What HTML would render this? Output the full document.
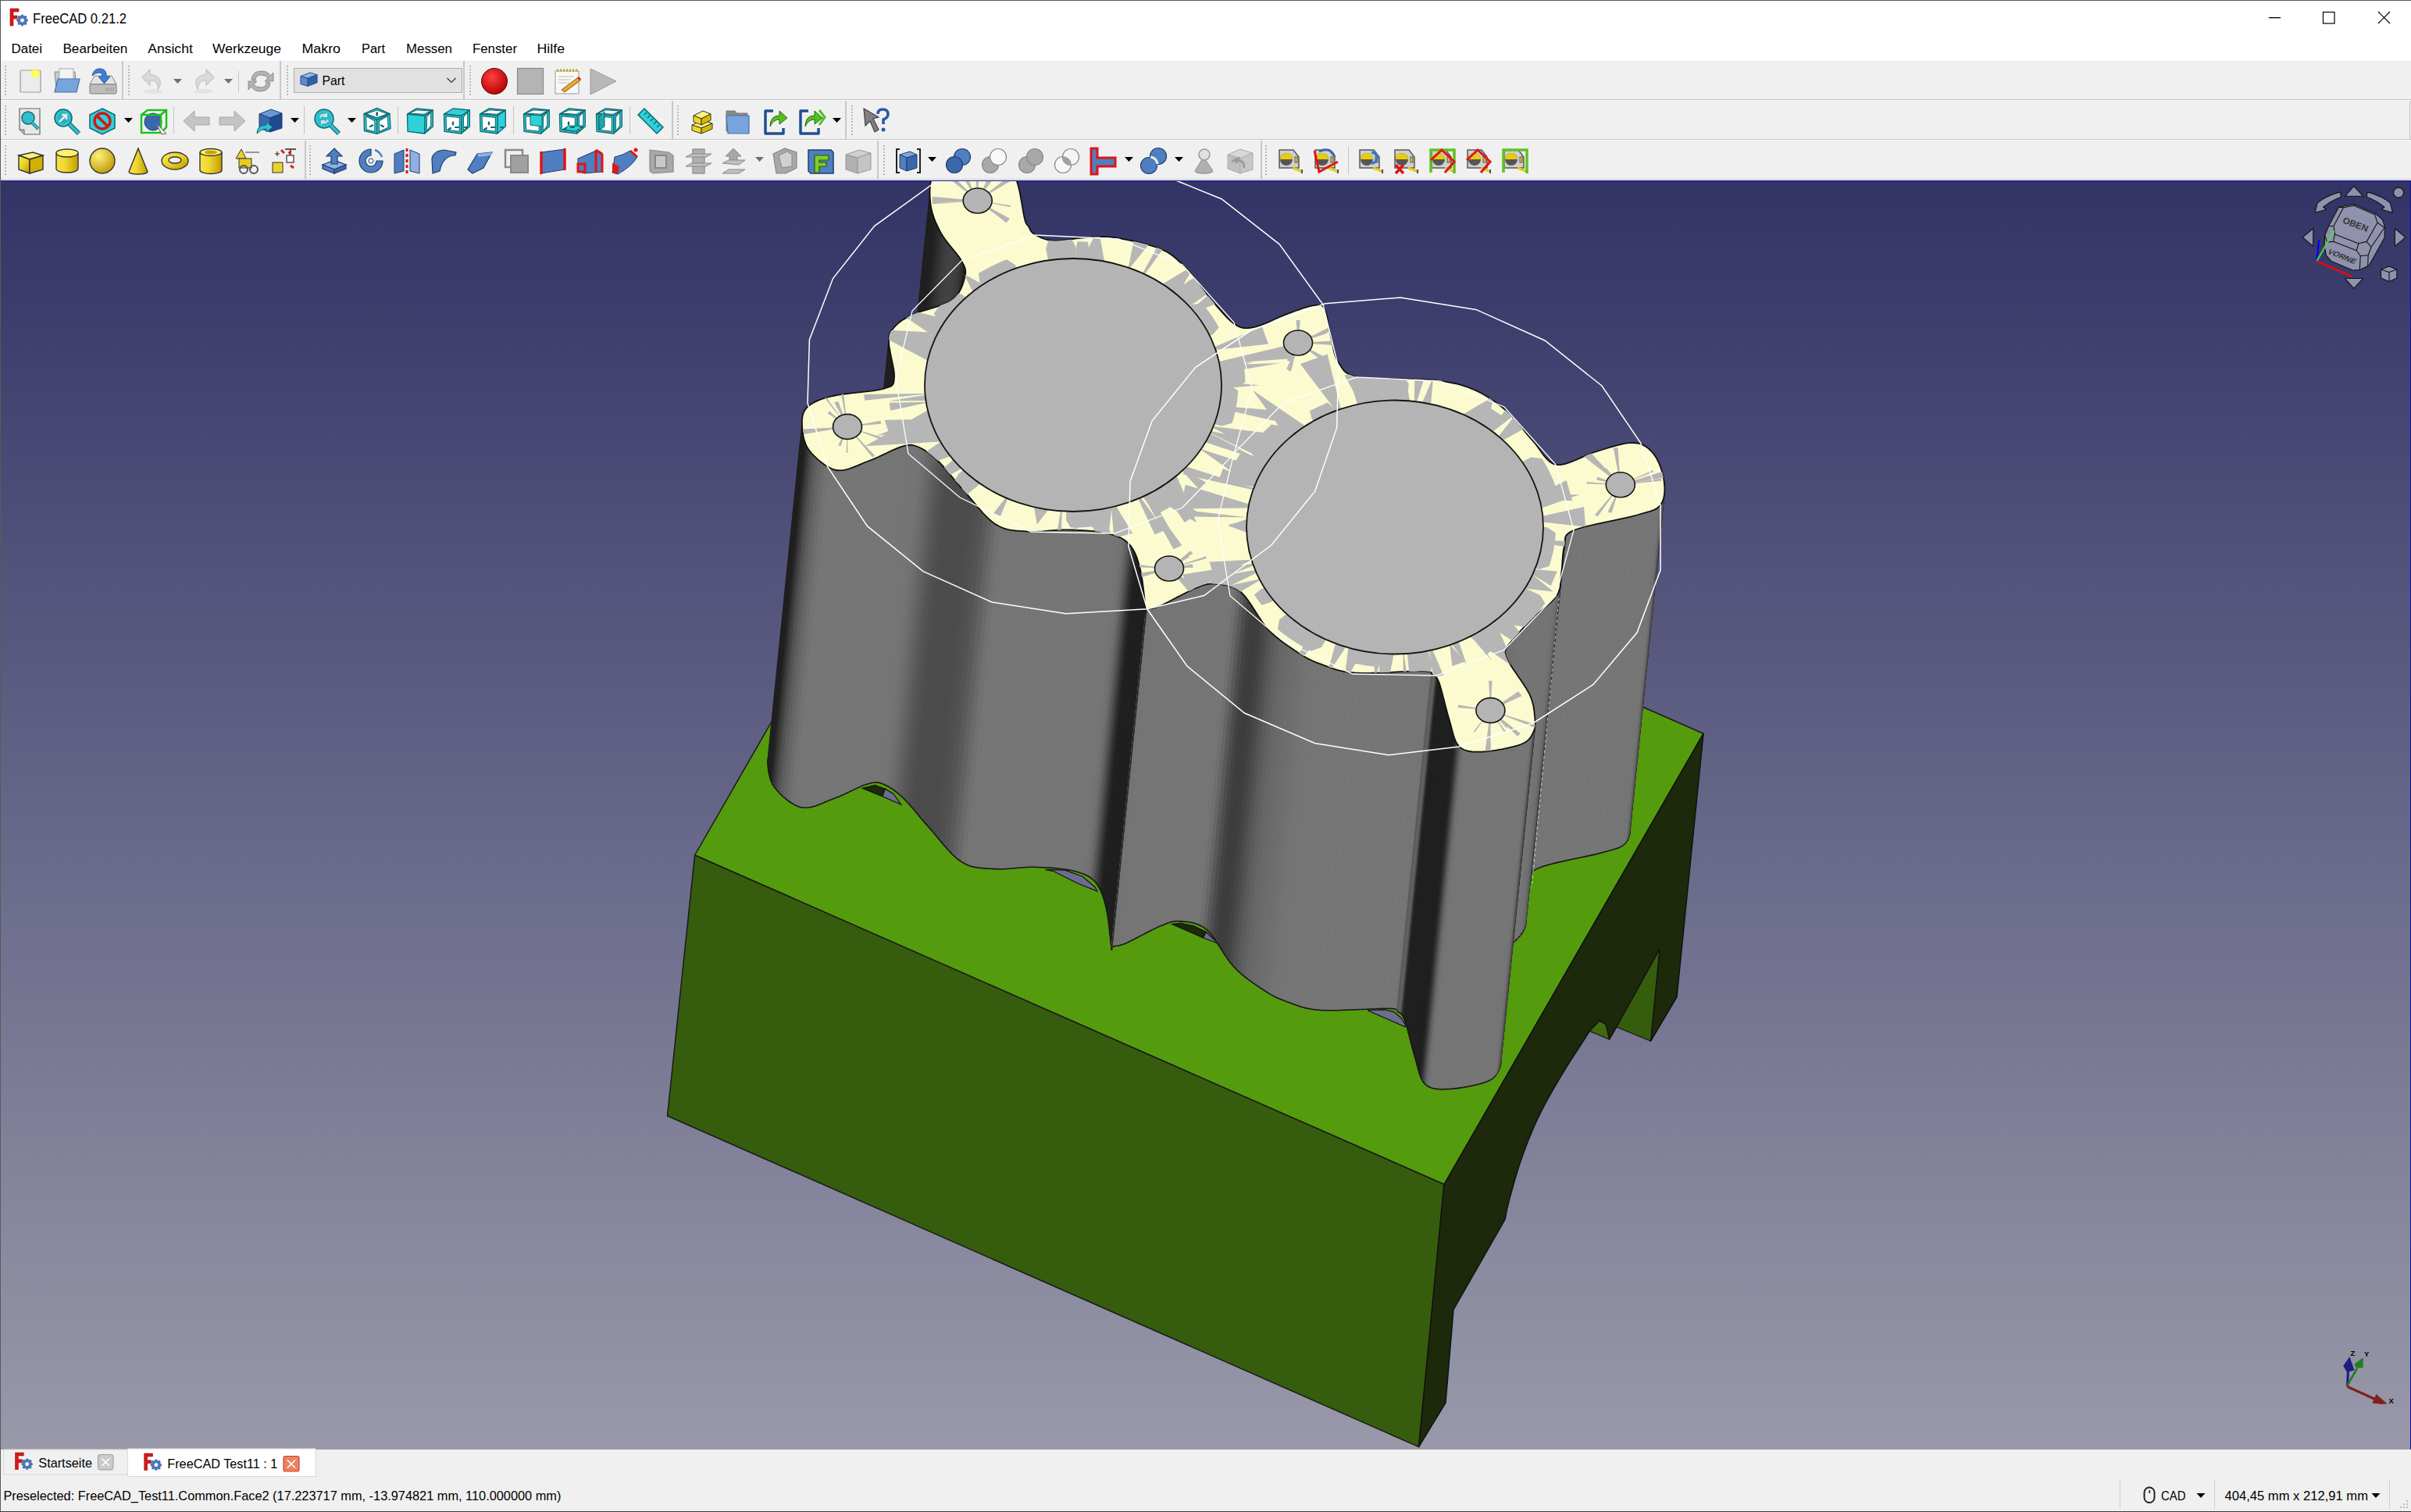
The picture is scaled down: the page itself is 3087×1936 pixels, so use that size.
<!DOCTYPE html><html><head><meta charset="utf-8"><style>html,body{margin:0;padding:0;width:3087px;height:1936px;overflow:hidden;background:#f0f0f0}svg{display:block}text{font-family:"Liberation Sans",sans-serif}</style></head><body>
<svg width="3087" height="1936" viewBox="0 0 3087 1936">
<defs>
<linearGradient id="bg" x1="0" y1="0" x2="0" y2="1"><stop offset="0" stop-color="#333366"/><stop offset="1" stop-color="#9999aa"/></linearGradient>
<path id="ol" d="M1191.5 261.7 L1191.0 256.7 L1190.6 251.5 L1190.5 246.2 L1190.7 240.9 L1191.2 235.7 L1192.1 230.7 L1193.3 226.1 L1195.0 222.0 L1197.2 218.3 L1200.0 214.9 L1203.2 211.8 L1206.8 208.9 L1210.5 206.3 L1214.4 204.0 L1218.3 201.9 L1222.0 200.0 L1225.7 198.4 L1229.4 197.0 L1233.2 195.9 L1237.1 195.1 L1241.0 194.4 L1244.9 194.1 L1249.0 193.9 L1253.0 194.0 L1257.2 194.3 L1261.7 194.7 L1266.3 195.3 L1271.0 196.2 L1275.5 197.4 L1279.7 198.9 L1283.6 200.7 L1287.0 203.0 L1289.9 205.7 L1292.3 208.8 L1294.5 212.3 L1296.3 216.1 L1298.0 220.2 L1299.6 224.6 L1301.1 229.2 L1302.6 233.9 L1304.1 239.2 L1305.5 245.2 L1306.7 251.7 L1307.9 258.3 L1309.0 264.7 L1310.0 270.7 L1311.0 275.9 L1311.9 280.0 L1312.7 283.0 L1313.4 285.0 L1314.0 286.4 L1314.6 287.3 L1315.1 287.9 L1315.7 288.4 L1316.3 289.0 L1317.0 290.0 L1317.7 291.2 L1318.2 292.4 L1318.7 293.6 L1319.3 294.8 L1320.0 296.0 L1321.0 297.2 L1322.3 298.3 L1324.0 299.5 L1326.1 300.7 L1328.6 302.1 L1331.3 303.4 L1334.3 304.8 L1337.6 306.0 L1341.1 307.1 L1344.8 307.9 L1348.7 308.4 L1352.9 308.5 L1357.5 308.2 L1362.3 307.7 L1367.4 307.0 L1372.6 306.2 L1377.8 305.4 L1383.0 304.8 L1388.0 304.4 L1392.8 304.1 L1397.5 303.8 L1402.1 303.4 L1406.7 303.2 L1411.5 303.1 L1416.6 303.2 L1422.0 303.7 L1428.0 304.4 L1434.7 305.5 L1442.2 306.9 L1450.2 308.5 L1458.4 310.4 L1466.5 312.4 L1474.3 314.6 L1481.5 317.0 L1487.8 319.5 L1493.2 322.1 L1497.9 325.0 L1502.2 328.0 L1506.0 331.2 L1509.6 334.5 L1513.1 337.9 L1516.5 341.4 L1520.0 345.0 L1523.5 348.7 L1526.7 352.5 L1529.7 356.4 L1532.7 360.5 L1535.6 364.6 L1538.7 368.8 L1542.0 373.1 L1545.6 377.4 L1549.5 382.0 L1553.8 387.1 L1558.2 392.4 L1562.8 397.6 L1567.3 402.7 L1571.8 407.3 L1576.0 411.3 L1580.0 414.4 L1583.5 416.7 L1586.7 418.3 L1589.6 419.4 L1592.5 420.0 L1595.4 420.2 L1598.5 420.0 L1602.0 419.5 L1606.0 418.8 L1610.6 417.6 L1615.7 415.9 L1621.2 413.7 L1627.0 411.2 L1632.7 408.5 L1638.4 406.0 L1643.9 403.6 L1649.0 401.6 L1653.9 399.8 L1658.8 398.0 L1663.6 396.3 L1668.2 394.7 L1672.6 393.3 L1676.8 392.1 L1680.5 391.3 L1683.7 390.8 L1686.4 390.6 L1688.6 390.5 L1690.3 390.6 L1691.8 391.0 L1693.1 391.7 L1694.2 393.0 L1695.4 394.8 L1696.6 397.3 L1697.9 400.7 L1699.0 405.0 L1700.1 409.9 L1701.1 415.3 L1702.0 420.9 L1703.0 426.3 L1704.0 431.5 L1705.0 436.0 L1706.0 440.1 L1706.8 444.0 L1707.5 447.7 L1708.3 451.2 L1709.2 454.6 L1710.3 457.9 L1711.8 461.0 L1713.7 464.0 L1715.6 466.9 L1717.3 469.7 L1719.1 472.5 L1721.2 475.0 L1724.0 477.4 L1727.8 479.5 L1732.9 481.4 L1739.5 483.0 L1748.3 484.1 L1759.3 484.8 L1771.8 485.2 L1785.1 485.3 L1798.7 485.4 L1811.8 485.6 L1823.8 486.0 L1834.0 486.7 L1842.6 487.7 L1850.1 488.7 L1856.9 489.8 L1863.1 491.0 L1868.8 492.4 L1874.4 494.1 L1880.0 496.0 L1885.7 498.3 L1891.5 500.9 L1897.2 503.8 L1902.8 507.0 L1908.2 510.4 L1913.5 514.1 L1918.7 517.9 L1923.7 521.9 L1928.6 526.0 L1933.3 530.4 L1937.9 535.2 L1942.3 540.2 L1946.6 545.4 L1950.8 550.5 L1954.9 555.6 L1959.0 560.5 L1963.0 565.0 L1966.8 569.5 L1970.3 574.2 L1973.6 579.0 L1976.9 583.5 L1980.4 587.6 L1984.1 591.0 L1988.2 593.6 L1993.0 595.0 L1998.5 595.1 L2004.5 593.9 L2011.0 591.7 L2017.8 589.0 L2024.7 585.9 L2031.6 582.8 L2038.3 580.0 L2044.7 577.8 L2051.0 576.0 L2057.3 574.0 L2063.7 572.1 L2070.0 570.4 L2076.0 568.9 L2081.8 567.7 L2087.1 567.1 L2092.0 567.0 L2096.3 567.5 L2100.3 568.5 L2103.8 569.9 L2107.1 571.7 L2110.0 573.8 L2112.8 576.3 L2115.3 579.0 L2117.8 582.0 L2120.2 585.4 L2122.3 589.4 L2124.4 593.7 L2126.2 598.3 L2127.7 603.0 L2129.0 607.7 L2130.0 612.3 L2130.7 616.5 L2131.1 620.6 L2131.4 624.7 L2131.3 628.9 L2131.0 632.9 L2130.4 636.8 L2129.4 640.4 L2127.9 643.7 L2126.0 646.6 L2123.8 649.0 L2121.5 650.9 L2118.8 652.4 L2115.8 653.7 L2112.1 654.9 L2107.7 656.2 L2102.4 657.7 L2096.0 659.5 L2087.8 661.6 L2077.7 663.9 L2066.3 666.3 L2054.4 668.8 L2042.6 671.4 L2031.6 673.9 L2022.2 676.5 L2015.0 679.0 L2010.1 681.4 L2007.0 683.6 L2005.1 685.8 L2004.2 688.0 L2003.9 690.3 L2003.8 692.9 L2003.6 695.7 L2003.0 699.0 L2002.1 702.8 L2001.5 707.1 L2001.0 711.7 L2000.6 716.5 L2000.3 721.4 L2000.0 726.2 L1999.5 730.8 L1999.0 735.0 L1998.5 738.8 L1998.3 742.4 L1998.1 745.8 L1997.8 749.1 L1997.4 752.4 L1996.5 755.7 L1995.1 759.1 L1993.0 762.7 L1990.1 766.5 L1986.5 770.3 L1982.3 774.2 L1977.7 778.2 L1973.0 782.2 L1968.3 786.2 L1963.7 790.3 L1959.5 794.4 L1955.4 798.7 L1951.2 803.2 L1946.9 807.8 L1942.7 812.4 L1938.7 816.9 L1935.2 821.1 L1932.2 824.8 L1929.8 828.0 L1928.2 830.5 L1927.2 832.5 L1926.7 834.0 L1926.6 835.2 L1926.8 836.3 L1927.1 837.4 L1927.6 838.6 L1928.0 840.0 L1928.4 841.5 L1928.9 842.9 L1929.5 844.1 L1930.3 845.5 L1931.3 847.1 L1932.5 848.9 L1933.9 851.2 L1935.7 854.0 L1938.0 857.5 L1940.8 861.6 L1943.9 866.2 L1947.3 871.0 L1950.6 876.0 L1953.8 880.9 L1956.5 885.5 L1958.7 889.7 L1960.3 893.6 L1961.6 897.3 L1962.6 900.9 L1963.4 904.3 L1963.9 907.7 L1964.4 910.9 L1964.7 914.0 L1965.0 917.0 L1965.3 919.9 L1965.5 922.6 L1965.6 925.2 L1965.6 927.7 L1965.5 930.1 L1965.1 932.5 L1964.4 934.7 L1963.5 937.0 L1962.4 939.2 L1961.3 941.4 L1960.0 943.6 L1958.5 945.7 L1956.6 947.7 L1954.2 949.6 L1951.3 951.3 L1947.6 953.0 L1942.9 954.6 L1937.2 956.2 L1930.8 957.7 L1924.0 959.2 L1917.0 960.4 L1910.3 961.4 L1904.0 962.1 L1898.6 962.5 L1893.8 962.6 L1889.3 962.7 L1885.2 962.5 L1881.3 962.0 L1877.7 961.2 L1874.4 960.0 L1871.3 958.3 L1868.5 956.0 L1866.1 953.1 L1864.1 949.7 L1862.4 945.7 L1861.0 941.3 L1859.7 936.7 L1858.4 931.8 L1857.1 926.7 L1855.6 921.6 L1854.0 916.1 L1852.3 909.8 L1850.6 903.2 L1848.9 896.5 L1847.2 890.0 L1845.6 883.9 L1844.1 878.6 L1842.7 874.4 L1841.4 871.3 L1840.3 869.0 L1839.3 867.4 L1838.4 866.3 L1837.4 865.6 L1836.4 865.0 L1835.3 864.4 L1834.0 863.6 L1833.1 862.7 L1832.8 861.9 L1832.6 861.2 L1832.3 860.6 L1831.4 860.2 L1829.5 859.8 L1826.1 859.5 L1821.0 859.3 L1813.4 859.4 L1803.6 859.7 L1792.2 860.2 L1779.9 860.8 L1767.3 861.3 L1755.2 861.7 L1744.2 861.8 L1735.0 861.5 L1727.5 860.8 L1720.9 859.8 L1715.2 858.6 L1710.0 857.2 L1705.3 855.6 L1700.8 854.0 L1696.5 852.3 L1692.0 850.7 L1687.7 849.1 L1683.8 847.6 L1680.2 846.0 L1676.7 844.4 L1673.3 842.6 L1669.8 840.6 L1666.1 838.3 L1662.0 835.7 L1657.6 832.8 L1652.9 829.6 L1648.0 826.3 L1643.0 822.7 L1638.0 818.8 L1633.0 814.7 L1628.2 810.3 L1623.5 805.6 L1619.0 800.3 L1614.6 794.1 L1610.3 787.5 L1606.0 780.7 L1601.7 774.1 L1597.5 768.0 L1593.3 762.6 L1589.0 758.3 L1584.6 755.1 L1580.2 752.7 L1575.7 750.9 L1571.3 749.6 L1566.9 748.8 L1562.7 748.2 L1558.6 747.9 L1554.7 747.6 L1551.2 747.5 L1548.1 747.6 L1545.2 748.1 L1542.4 748.8 L1539.5 749.7 L1536.4 750.9 L1533.0 752.4 L1529.0 754.0 L1524.3 756.1 L1518.9 758.7 L1513.0 761.7 L1507.0 764.9 L1501.0 768.0 L1495.3 771.0 L1490.3 773.5 L1486.0 775.5 L1482.5 776.9 L1479.5 777.9 L1477.0 778.6 L1474.8 779.0 L1473.0 779.2 L1471.4 779.4 L1470.0 779.6 L1468.8 779.8 L1467.9 780.4 L1467.4 781.3 L1467.2 782.4 L1467.3 783.4 L1467.4 783.9 L1467.5 783.6 L1467.4 782.5 L1467.0 780.0 L1466.4 775.9 L1465.8 770.4 L1465.1 763.8 L1464.3 756.5 L1463.4 749.0 L1462.4 741.6 L1461.2 734.8 L1460.0 729.0 L1458.7 724.0 L1457.3 719.2 L1455.9 714.8 L1454.3 710.7 L1452.6 706.8 L1450.6 703.3 L1448.5 700.0 L1446.0 697.0 L1443.3 694.3 L1440.5 692.0 L1437.5 690.0 L1434.3 688.3 L1430.8 686.8 L1426.9 685.4 L1422.7 684.2 L1418.0 683.0 L1412.8 681.9 L1406.9 681.0 L1400.7 680.2 L1394.1 679.6 L1387.4 679.1 L1380.6 678.8 L1373.9 678.5 L1367.4 678.3 L1361.0 678.3 L1354.5 678.7 L1347.9 679.2 L1341.4 679.7 L1334.9 680.3 L1328.6 680.7 L1322.4 680.8 L1316.5 680.6 L1310.8 680.2 L1305.4 679.9 L1300.2 679.5 L1295.1 678.9 L1290.0 677.9 L1285.0 676.4 L1280.0 674.3 L1274.8 671.4 L1269.5 667.5 L1264.1 662.6 L1258.7 657.0 L1253.3 650.9 L1248.0 644.7 L1242.8 638.4 L1237.8 632.4 L1233.0 627.0 L1228.5 621.9 L1224.1 616.8 L1219.9 611.7 L1215.8 606.9 L1211.9 602.2 L1208.1 597.7 L1204.4 593.7 L1200.7 590.0 L1197.1 586.7 L1193.7 583.7 L1190.4 581.1 L1187.1 578.7 L1184.0 576.6 L1180.9 574.8 L1177.9 573.3 L1175.0 572.0 L1172.3 571.0 L1170.0 570.3 L1167.8 569.9 L1165.7 569.7 L1163.4 569.8 L1160.9 570.2 L1157.9 570.9 L1154.4 571.9 L1150.2 573.3 L1145.5 575.3 L1140.3 577.6 L1134.9 580.2 L1129.3 582.9 L1123.7 585.5 L1118.2 587.9 L1112.8 590.0 L1107.5 592.0 L1102.2 594.3 L1096.8 596.6 L1091.5 598.7 L1086.2 600.5 L1081.0 601.8 L1075.9 602.3 L1071.0 602.0 L1066.1 600.7 L1061.2 598.4 L1056.2 595.5 L1051.5 592.0 L1046.9 588.2 L1042.8 584.2 L1039.1 580.3 L1036.0 576.5 L1033.5 572.7 L1031.5 568.6 L1030.0 564.4 L1028.9 560.1 L1028.1 555.8 L1027.5 551.6 L1027.2 547.7 L1027.0 544.0 L1026.9 540.6 L1027.0 537.4 L1027.3 534.3 L1027.9 531.3 L1028.8 528.5 L1030.1 525.9 L1031.8 523.4 L1034.0 521.0 L1036.6 518.8 L1039.6 516.8 L1042.9 514.9 L1046.7 513.1 L1050.8 511.5 L1055.5 510.0 L1060.7 508.5 L1066.5 507.0 L1073.4 505.7 L1081.6 504.5 L1090.6 503.4 L1099.9 502.4 L1109.1 501.4 L1117.7 500.3 L1125.1 499.1 L1131.0 497.8 L1135.3 496.5 L1138.5 495.4 L1140.9 494.4 L1142.5 493.2 L1143.5 491.8 L1144.2 489.9 L1144.6 487.3 L1145.0 484.0 L1145.0 479.6 L1144.4 474.0 L1143.3 467.8 L1141.9 461.1 L1140.5 454.4 L1139.3 448.0 L1138.3 442.3 L1138.0 437.6 L1138.1 433.9 L1138.4 430.9 L1138.9 428.5 L1139.6 426.4 L1140.6 424.6 L1141.8 422.8 L1143.3 421.0 L1145.0 419.0 L1146.9 416.9 L1149.0 414.9 L1151.2 412.9 L1153.8 411.0 L1156.6 409.1 L1159.9 407.2 L1163.7 405.1 L1168.0 403.0 L1173.3 400.8 L1179.6 398.7 L1186.6 396.6 L1193.9 394.4 L1201.2 392.1 L1208.0 389.6 L1214.1 386.9 L1219.0 384.0 L1222.9 380.7 L1226.0 377.1 L1228.6 373.1 L1230.7 369.1 L1232.4 365.0 L1233.7 361.1 L1234.7 357.4 L1235.5 354.0 L1236.1 351.1 L1236.3 348.5 L1236.2 346.2 L1235.8 344.0 L1235.0 341.7 L1234.0 339.3 L1232.5 336.6 L1230.8 333.4 L1228.5 329.8 L1225.5 325.8 L1222.1 321.5 L1218.4 317.1 L1214.7 312.5 L1211.1 307.9 L1207.8 303.2 L1205.0 298.7 L1202.6 294.2 L1200.4 289.7 L1198.3 285.1 L1196.4 280.5 L1194.8 275.9 L1193.4 271.2 L1192.3 266.5Z"/>
<clipPath id="vpclip"><rect x="1" y="232" width="3085" height="1624"/></clipPath>
<clipPath id="flclip"><path d="M1191.5 261.7 L1191.0 256.7 L1190.6 251.5 L1190.5 246.2 L1190.7 240.9 L1191.2 235.7 L1192.1 230.7 L1193.3 226.1 L1195.0 222.0 L1197.2 218.3 L1200.0 214.9 L1203.2 211.8 L1206.8 208.9 L1210.5 206.3 L1214.4 204.0 L1218.3 201.9 L1222.0 200.0 L1225.7 198.4 L1229.4 197.0 L1233.2 195.9 L1237.1 195.1 L1241.0 194.4 L1244.9 194.1 L1249.0 193.9 L1253.0 194.0 L1257.2 194.3 L1261.7 194.7 L1266.3 195.3 L1271.0 196.2 L1275.5 197.4 L1279.7 198.9 L1283.6 200.7 L1287.0 203.0 L1289.9 205.7 L1292.3 208.8 L1294.5 212.3 L1296.3 216.1 L1298.0 220.2 L1299.6 224.6 L1301.1 229.2 L1302.6 233.9 L1304.1 239.2 L1305.5 245.2 L1306.7 251.7 L1307.9 258.3 L1309.0 264.7 L1310.0 270.7 L1311.0 275.9 L1311.9 280.0 L1312.7 283.0 L1313.4 285.0 L1314.0 286.4 L1314.6 287.3 L1315.1 287.9 L1315.7 288.4 L1316.3 289.0 L1317.0 290.0 L1317.7 291.2 L1318.2 292.4 L1318.7 293.6 L1319.3 294.8 L1320.0 296.0 L1321.0 297.2 L1322.3 298.3 L1324.0 299.5 L1326.1 300.7 L1328.6 302.1 L1331.3 303.4 L1334.3 304.8 L1337.6 306.0 L1341.1 307.1 L1344.8 307.9 L1348.7 308.4 L1352.9 308.5 L1357.5 308.2 L1362.3 307.7 L1367.4 307.0 L1372.6 306.2 L1377.8 305.4 L1383.0 304.8 L1388.0 304.4 L1392.8 304.1 L1397.5 303.8 L1402.1 303.4 L1406.7 303.2 L1411.5 303.1 L1416.6 303.2 L1422.0 303.7 L1428.0 304.4 L1434.7 305.5 L1442.2 306.9 L1450.2 308.5 L1458.4 310.4 L1466.5 312.4 L1474.3 314.6 L1481.5 317.0 L1487.8 319.5 L1493.2 322.1 L1497.9 325.0 L1502.2 328.0 L1506.0 331.2 L1509.6 334.5 L1513.1 337.9 L1516.5 341.4 L1520.0 345.0 L1523.5 348.7 L1526.7 352.5 L1529.7 356.4 L1532.7 360.5 L1535.6 364.6 L1538.7 368.8 L1542.0 373.1 L1545.6 377.4 L1549.5 382.0 L1553.8 387.1 L1558.2 392.4 L1562.8 397.6 L1567.3 402.7 L1571.8 407.3 L1576.0 411.3 L1580.0 414.4 L1583.5 416.7 L1586.7 418.3 L1589.6 419.4 L1592.5 420.0 L1595.4 420.2 L1598.5 420.0 L1602.0 419.5 L1606.0 418.8 L1610.6 417.6 L1615.7 415.9 L1621.2 413.7 L1627.0 411.2 L1632.7 408.5 L1638.4 406.0 L1643.9 403.6 L1649.0 401.6 L1653.9 399.8 L1658.8 398.0 L1663.6 396.3 L1668.2 394.7 L1672.6 393.3 L1676.8 392.1 L1680.5 391.3 L1683.7 390.8 L1686.4 390.6 L1688.6 390.5 L1690.3 390.6 L1691.8 391.0 L1693.1 391.7 L1694.2 393.0 L1695.4 394.8 L1696.6 397.3 L1697.9 400.7 L1699.0 405.0 L1700.1 409.9 L1701.1 415.3 L1702.0 420.9 L1703.0 426.3 L1704.0 431.5 L1705.0 436.0 L1706.0 440.1 L1706.8 444.0 L1707.5 447.7 L1708.3 451.2 L1709.2 454.6 L1710.3 457.9 L1711.8 461.0 L1713.7 464.0 L1715.6 466.9 L1717.3 469.7 L1719.1 472.5 L1721.2 475.0 L1724.0 477.4 L1727.8 479.5 L1732.9 481.4 L1739.5 483.0 L1748.3 484.1 L1759.3 484.8 L1771.8 485.2 L1785.1 485.3 L1798.7 485.4 L1811.8 485.6 L1823.8 486.0 L1834.0 486.7 L1842.6 487.7 L1850.1 488.7 L1856.9 489.8 L1863.1 491.0 L1868.8 492.4 L1874.4 494.1 L1880.0 496.0 L1885.7 498.3 L1891.5 500.9 L1897.2 503.8 L1902.8 507.0 L1908.2 510.4 L1913.5 514.1 L1918.7 517.9 L1923.7 521.9 L1928.6 526.0 L1933.3 530.4 L1937.9 535.2 L1942.3 540.2 L1946.6 545.4 L1950.8 550.5 L1954.9 555.6 L1959.0 560.5 L1963.0 565.0 L1966.8 569.5 L1970.3 574.2 L1973.6 579.0 L1976.9 583.5 L1980.4 587.6 L1984.1 591.0 L1988.2 593.6 L1993.0 595.0 L1998.5 595.1 L2004.5 593.9 L2011.0 591.7 L2017.8 589.0 L2024.7 585.9 L2031.6 582.8 L2038.3 580.0 L2044.7 577.8 L2051.0 576.0 L2057.3 574.0 L2063.7 572.1 L2070.0 570.4 L2076.0 568.9 L2081.8 567.7 L2087.1 567.1 L2092.0 567.0 L2096.3 567.5 L2100.3 568.5 L2103.8 569.9 L2107.1 571.7 L2110.0 573.8 L2112.8 576.3 L2115.3 579.0 L2117.8 582.0 L2120.2 585.4 L2122.3 589.4 L2124.4 593.7 L2126.2 598.3 L2127.7 603.0 L2129.0 607.7 L2130.0 612.3 L2130.7 616.5 L2131.1 620.6 L2131.4 624.7 L2131.3 628.9 L2131.0 632.9 L2130.4 636.8 L2129.4 640.4 L2127.9 643.7 L2126.0 646.6 L2123.8 649.0 L2121.5 650.9 L2118.8 652.4 L2115.8 653.7 L2112.1 654.9 L2107.7 656.2 L2102.4 657.7 L2096.0 659.5 L2087.8 661.6 L2077.7 663.9 L2066.3 666.3 L2054.4 668.8 L2042.6 671.4 L2031.6 673.9 L2022.2 676.5 L2015.0 679.0 L2010.1 681.4 L2007.0 683.6 L2005.1 685.8 L2004.2 688.0 L2003.9 690.3 L2003.8 692.9 L2003.6 695.7 L2003.0 699.0 L2002.1 702.8 L2001.5 707.1 L2001.0 711.7 L2000.6 716.5 L2000.3 721.4 L2000.0 726.2 L1999.5 730.8 L1999.0 735.0 L1998.5 738.8 L1998.3 742.4 L1998.1 745.8 L1997.8 749.1 L1997.4 752.4 L1996.5 755.7 L1995.1 759.1 L1993.0 762.7 L1990.1 766.5 L1986.5 770.3 L1982.3 774.2 L1977.7 778.2 L1973.0 782.2 L1968.3 786.2 L1963.7 790.3 L1959.5 794.4 L1955.4 798.7 L1951.2 803.2 L1946.9 807.8 L1942.7 812.4 L1938.7 816.9 L1935.2 821.1 L1932.2 824.8 L1929.8 828.0 L1928.2 830.5 L1927.2 832.5 L1926.7 834.0 L1926.6 835.2 L1926.8 836.3 L1927.1 837.4 L1927.6 838.6 L1928.0 840.0 L1928.4 841.5 L1928.9 842.9 L1929.5 844.1 L1930.3 845.5 L1931.3 847.1 L1932.5 848.9 L1933.9 851.2 L1935.7 854.0 L1938.0 857.5 L1940.8 861.6 L1943.9 866.2 L1947.3 871.0 L1950.6 876.0 L1953.8 880.9 L1956.5 885.5 L1958.7 889.7 L1960.3 893.6 L1961.6 897.3 L1962.6 900.9 L1963.4 904.3 L1963.9 907.7 L1964.4 910.9 L1964.7 914.0 L1965.0 917.0 L1965.3 919.9 L1965.5 922.6 L1965.6 925.2 L1965.6 927.7 L1965.5 930.1 L1965.1 932.5 L1964.4 934.7 L1963.5 937.0 L1962.4 939.2 L1961.3 941.4 L1960.0 943.6 L1958.5 945.7 L1956.6 947.7 L1954.2 949.6 L1951.3 951.3 L1947.6 953.0 L1942.9 954.6 L1937.2 956.2 L1930.8 957.7 L1924.0 959.2 L1917.0 960.4 L1910.3 961.4 L1904.0 962.1 L1898.6 962.5 L1893.8 962.6 L1889.3 962.7 L1885.2 962.5 L1881.3 962.0 L1877.7 961.2 L1874.4 960.0 L1871.3 958.3 L1868.5 956.0 L1866.1 953.1 L1864.1 949.7 L1862.4 945.7 L1861.0 941.3 L1859.7 936.7 L1858.4 931.8 L1857.1 926.7 L1855.6 921.6 L1854.0 916.1 L1852.3 909.8 L1850.6 903.2 L1848.9 896.5 L1847.2 890.0 L1845.6 883.9 L1844.1 878.6 L1842.7 874.4 L1841.4 871.3 L1840.3 869.0 L1839.3 867.4 L1838.4 866.3 L1837.4 865.6 L1836.4 865.0 L1835.3 864.4 L1834.0 863.6 L1833.1 862.7 L1832.8 861.9 L1832.6 861.2 L1832.3 860.6 L1831.4 860.2 L1829.5 859.8 L1826.1 859.5 L1821.0 859.3 L1813.4 859.4 L1803.6 859.7 L1792.2 860.2 L1779.9 860.8 L1767.3 861.3 L1755.2 861.7 L1744.2 861.8 L1735.0 861.5 L1727.5 860.8 L1720.9 859.8 L1715.2 858.6 L1710.0 857.2 L1705.3 855.6 L1700.8 854.0 L1696.5 852.3 L1692.0 850.7 L1687.7 849.1 L1683.8 847.6 L1680.2 846.0 L1676.7 844.4 L1673.3 842.6 L1669.8 840.6 L1666.1 838.3 L1662.0 835.7 L1657.6 832.8 L1652.9 829.6 L1648.0 826.3 L1643.0 822.7 L1638.0 818.8 L1633.0 814.7 L1628.2 810.3 L1623.5 805.6 L1619.0 800.3 L1614.6 794.1 L1610.3 787.5 L1606.0 780.7 L1601.7 774.1 L1597.5 768.0 L1593.3 762.6 L1589.0 758.3 L1584.6 755.1 L1580.2 752.7 L1575.7 750.9 L1571.3 749.6 L1566.9 748.8 L1562.7 748.2 L1558.6 747.9 L1554.7 747.6 L1551.2 747.5 L1548.1 747.6 L1545.2 748.1 L1542.4 748.8 L1539.5 749.7 L1536.4 750.9 L1533.0 752.4 L1529.0 754.0 L1524.3 756.1 L1518.9 758.7 L1513.0 761.7 L1507.0 764.9 L1501.0 768.0 L1495.3 771.0 L1490.3 773.5 L1486.0 775.5 L1482.5 776.9 L1479.5 777.9 L1477.0 778.6 L1474.8 779.0 L1473.0 779.2 L1471.4 779.4 L1470.0 779.6 L1468.8 779.8 L1467.9 780.4 L1467.4 781.3 L1467.2 782.4 L1467.3 783.4 L1467.4 783.9 L1467.5 783.6 L1467.4 782.5 L1467.0 780.0 L1466.4 775.9 L1465.8 770.4 L1465.1 763.8 L1464.3 756.5 L1463.4 749.0 L1462.4 741.6 L1461.2 734.8 L1460.0 729.0 L1458.7 724.0 L1457.3 719.2 L1455.9 714.8 L1454.3 710.7 L1452.6 706.8 L1450.6 703.3 L1448.5 700.0 L1446.0 697.0 L1443.3 694.3 L1440.5 692.0 L1437.5 690.0 L1434.3 688.3 L1430.8 686.8 L1426.9 685.4 L1422.7 684.2 L1418.0 683.0 L1412.8 681.9 L1406.9 681.0 L1400.7 680.2 L1394.1 679.6 L1387.4 679.1 L1380.6 678.8 L1373.9 678.5 L1367.4 678.3 L1361.0 678.3 L1354.5 678.7 L1347.9 679.2 L1341.4 679.7 L1334.9 680.3 L1328.6 680.7 L1322.4 680.8 L1316.5 680.6 L1310.8 680.2 L1305.4 679.9 L1300.2 679.5 L1295.1 678.9 L1290.0 677.9 L1285.0 676.4 L1280.0 674.3 L1274.8 671.4 L1269.5 667.5 L1264.1 662.6 L1258.7 657.0 L1253.3 650.9 L1248.0 644.7 L1242.8 638.4 L1237.8 632.4 L1233.0 627.0 L1228.5 621.9 L1224.1 616.8 L1219.9 611.7 L1215.8 606.9 L1211.9 602.2 L1208.1 597.7 L1204.4 593.7 L1200.7 590.0 L1197.1 586.7 L1193.7 583.7 L1190.4 581.1 L1187.1 578.7 L1184.0 576.6 L1180.9 574.8 L1177.9 573.3 L1175.0 572.0 L1172.3 571.0 L1170.0 570.3 L1167.8 569.9 L1165.7 569.7 L1163.4 569.8 L1160.9 570.2 L1157.9 570.9 L1154.4 571.9 L1150.2 573.3 L1145.5 575.3 L1140.3 577.6 L1134.9 580.2 L1129.3 582.9 L1123.7 585.5 L1118.2 587.9 L1112.8 590.0 L1107.5 592.0 L1102.2 594.3 L1096.8 596.6 L1091.5 598.7 L1086.2 600.5 L1081.0 601.8 L1075.9 602.3 L1071.0 602.0 L1066.1 600.7 L1061.2 598.4 L1056.2 595.5 L1051.5 592.0 L1046.9 588.2 L1042.8 584.2 L1039.1 580.3 L1036.0 576.5 L1033.5 572.7 L1031.5 568.6 L1030.0 564.4 L1028.9 560.1 L1028.1 555.8 L1027.5 551.6 L1027.2 547.7 L1027.0 544.0 L1026.9 540.6 L1027.0 537.4 L1027.3 534.3 L1027.9 531.3 L1028.8 528.5 L1030.1 525.9 L1031.8 523.4 L1034.0 521.0 L1036.6 518.8 L1039.6 516.8 L1042.9 514.9 L1046.7 513.1 L1050.8 511.5 L1055.5 510.0 L1060.7 508.5 L1066.5 507.0 L1073.4 505.7 L1081.6 504.5 L1090.6 503.4 L1099.9 502.4 L1109.1 501.4 L1117.7 500.3 L1125.1 499.1 L1131.0 497.8 L1135.3 496.5 L1138.5 495.4 L1140.9 494.4 L1142.5 493.2 L1143.5 491.8 L1144.2 489.9 L1144.6 487.3 L1145.0 484.0 L1145.0 479.6 L1144.4 474.0 L1143.3 467.8 L1141.9 461.1 L1140.5 454.4 L1139.3 448.0 L1138.3 442.3 L1138.0 437.6 L1138.1 433.9 L1138.4 430.9 L1138.9 428.5 L1139.6 426.4 L1140.6 424.6 L1141.8 422.8 L1143.3 421.0 L1145.0 419.0 L1146.9 416.9 L1149.0 414.9 L1151.2 412.9 L1153.8 411.0 L1156.6 409.1 L1159.9 407.2 L1163.7 405.1 L1168.0 403.0 L1173.3 400.8 L1179.6 398.7 L1186.6 396.6 L1193.9 394.4 L1201.2 392.1 L1208.0 389.6 L1214.1 386.9 L1219.0 384.0 L1222.9 380.7 L1226.0 377.1 L1228.6 373.1 L1230.7 369.1 L1232.4 365.0 L1233.7 361.1 L1234.7 357.4 L1235.5 354.0 L1236.1 351.1 L1236.3 348.5 L1236.2 346.2 L1235.8 344.0 L1235.0 341.7 L1234.0 339.3 L1232.5 336.6 L1230.8 333.4 L1228.5 329.8 L1225.5 325.8 L1222.1 321.5 L1218.4 317.1 L1214.7 312.5 L1211.1 307.9 L1207.8 303.2 L1205.0 298.7 L1202.6 294.2 L1200.4 289.7 L1198.3 285.1 L1196.4 280.5 L1194.8 275.9 L1193.4 271.2 L1192.3 266.5Z"/></clipPath>
<linearGradient id="yg" x1="0" y1="0" x2="1" y2="1"><stop offset="0" stop-color="#fbec5a"/><stop offset="0.55" stop-color="#e8cc1c"/><stop offset="1" stop-color="#b89400"/></linearGradient>
<linearGradient id="ygh" x1="0" y1="0" x2="1" y2="0"><stop offset="0" stop-color="#f6e24a"/><stop offset="0.4" stop-color="#f0d830"/><stop offset="1" stop-color="#c09c00"/></linearGradient>
</defs>
<rect x="0" y="0" width="3087" height="77" fill="#ffffff"/>
<rect x="0" y="77" width="3087" height="155" fill="#f0f0f0"/>
<rect x="1" y="232" width="3085" height="1624" fill="url(#bg)"/>
<rect x="0" y="231" width="3087" height="1" fill="#1010a0"/>
<rect x="3086" y="231" width="1" height="1625" fill="#1010a0"/>
<g clip-path="url(#vpclip)">
<polygon points="889.6,1095.0 1221.6,517.8 2181.0,939.3 1849.0,1516.5" fill="#549b0e" stroke="#1a1a1a" stroke-width="1.5" stroke-linejoin="round"/>
<polygon points="889.6,1095.0 1849.0,1516.5 1816.6,1852.6 854.5,1428.8" fill="#365d0d" stroke="#1a1a1a" stroke-width="1.5" stroke-linejoin="round"/>
<polygon points="1849.0,1516.5 2181.0,939.3 2147.0,1276.6 2113.5,1333.0 2124.9,1215.7 2069.8,1315.0 2060.6,1330.8 2056.0,1312.0 2048.0,1307.0 2035.4,1320.2 2031.3,1326.6 2025.5,1335.5 2018.7,1346.0 2011.5,1357.2 2004.5,1368.3 1998.4,1378.4 1993.0,1387.5 1987.8,1396.4 1982.9,1405.2 1978.1,1413.9 1973.6,1422.6 1969.3,1431.3 1965.2,1440.1 1961.4,1448.9 1957.8,1457.6 1954.4,1466.4 1951.1,1475.2 1948.0,1484.0 1944.9,1493.1 1942.0,1502.7 1939.1,1512.3 1936.6,1521.4 1934.2,1529.8 1932.3,1537.0 1930.8,1543.0 1929.6,1548.2 1928.7,1552.6 1928.0,1556.2 1927.5,1559.2 1927.0,1561.5 1861.0,1677.0 1851.0,1796.0 1816.6,1852.6" fill="#1c2a0b" stroke="#111" stroke-width="1.5" stroke-linejoin="round"/>
<polygon points="2124.9,1215.7 2113.5,1333.0 2069.8,1315.0" fill="#365d0d" stroke="#111" stroke-width="1.2"/>
<polygon points="2035.4,1320.2 2048.0,1307.0 2056.0,1312.0 2060.6,1330.8" fill="#3f6a10" stroke="#111" stroke-width="1.2"/>
<polygon points="1129.8,1019.7 1133.0,1010.0 1144.0,1016.5 1153.7,1030.0" fill="#6c6c92" stroke="#111" stroke-width="1.2"/>
<polygon points="1338.7,1113.6 1363.6,1114.2 1386.0,1122.3 1402.2,1136.0 1404.7,1141.0 1379.8,1131.0 1348.7,1115.5" fill="#6c6c92" stroke="#111" stroke-width="1.2"/>
<polygon points="1544.0,1193.2 1560.2,1208.2 1540.3,1200.7" fill="#6c6c92" stroke="#111" stroke-width="1.2"/>
<polygon points="1751.8,1293.5 1773.0,1292.9 1784.2,1295.4 1794.1,1303.5 1800.3,1313.4 1799.0,1314.7 1753.0,1294.7" fill="#6c6c92" stroke="#111" stroke-width="1.2"/>
<polygon points="1104.4,1009.4 1120.3,1005.4 1133.0,1010.0 1129.8,1019.7" fill="#1c2a0b" stroke="#111" stroke-width="1.2"/>
<polygon points="1500.5,1183.3 1511.7,1182.0 1529.0,1185.8 1544.0,1193.2 1540.3,1200.7" fill="#1c2a0b" stroke="#111" stroke-width="1.2"/>
<g fill="#3a3a3a"><use href="#ol" x="-0.0" y="0.0"/><use href="#ol" x="-0.7" y="7.2"/><use href="#ol" x="-1.5" y="14.4"/><use href="#ol" x="-2.2" y="21.6"/><use href="#ol" x="-2.9" y="28.8"/><use href="#ol" x="-3.7" y="36.0"/><use href="#ol" x="-4.4" y="43.2"/><use href="#ol" x="-5.1" y="50.4"/><use href="#ol" x="-5.9" y="57.6"/><use href="#ol" x="-6.6" y="64.8"/><use href="#ol" x="-7.3" y="72.0"/><use href="#ol" x="-8.1" y="79.2"/><use href="#ol" x="-8.8" y="86.4"/><use href="#ol" x="-9.5" y="93.6"/><use href="#ol" x="-10.3" y="100.8"/><use href="#ol" x="-11.0" y="108.0"/><use href="#ol" x="-11.7" y="115.2"/><use href="#ol" x="-12.5" y="122.4"/><use href="#ol" x="-13.2" y="129.6"/><use href="#ol" x="-13.9" y="136.8"/><use href="#ol" x="-14.7" y="144.0"/><use href="#ol" x="-15.4" y="151.2"/><use href="#ol" x="-16.1" y="158.4"/><use href="#ol" x="-16.9" y="165.6"/><use href="#ol" x="-17.6" y="172.8"/><use href="#ol" x="-18.3" y="180.0"/><use href="#ol" x="-19.1" y="187.2"/><use href="#ol" x="-19.8" y="194.4"/><use href="#ol" x="-20.5" y="201.6"/><use href="#ol" x="-21.3" y="208.8"/><use href="#ol" x="-22.0" y="216.0"/><use href="#ol" x="-22.7" y="223.2"/><use href="#ol" x="-23.5" y="230.4"/><use href="#ol" x="-24.2" y="237.6"/><use href="#ol" x="-24.9" y="244.8"/><use href="#ol" x="-25.7" y="252.0"/><use href="#ol" x="-26.4" y="259.2"/><use href="#ol" x="-27.1" y="266.4"/><use href="#ol" x="-27.9" y="273.6"/><use href="#ol" x="-28.6" y="280.8"/><use href="#ol" x="-29.3" y="288.0"/><use href="#ol" x="-30.1" y="295.2"/><use href="#ol" x="-30.8" y="302.4"/><use href="#ol" x="-31.5" y="309.6"/><use href="#ol" x="-32.3" y="316.8"/><use href="#ol" x="-33.0" y="324.0"/><use href="#ol" x="-33.7" y="331.2"/><use href="#ol" x="-34.5" y="338.4"/><use href="#ol" x="-35.2" y="345.6"/><use href="#ol" x="-35.9" y="352.8"/><use href="#ol" x="-36.7" y="360.0"/><use href="#ol" x="-37.4" y="367.2"/><use href="#ol" x="-38.1" y="374.4"/><use href="#ol" x="-38.9" y="381.6"/><use href="#ol" x="-39.6" y="388.8"/><use href="#ol" x="-40.3" y="396.0"/><use href="#ol" x="-41.1" y="403.2"/><use href="#ol" x="-41.8" y="410.4"/><use href="#ol" x="-42.5" y="417.6"/><use href="#ol" x="-43.3" y="424.8"/><use href="#ol" x="-44.0" y="432.0"/></g>
<g stroke-linecap="round"><polygon points="1190.6,251.5 1190.5,246.2 1146.5,678.2 1146.6,683.5" fill="#202020" stroke="#202020" stroke-width="0.8"/><line stroke="#161616" stroke-width="1.6" x1="1146.6" y1="683.5" x2="1146.5" y2="678.2"/><polygon points="1191.0,256.7 1190.6,251.5 1146.6,683.5 1147.0,688.7" fill="#202020" stroke="#202020" stroke-width="0.8"/><line stroke="#161616" stroke-width="1.6" x1="1147.0" y1="688.7" x2="1146.6" y2="683.5"/><polygon points="1191.5,261.7 1191.0,256.7 1147.0,688.7 1147.5,693.7" fill="#202020" stroke="#202020" stroke-width="0.8"/><line stroke="#161616" stroke-width="1.6" x1="1147.5" y1="693.7" x2="1147.0" y2="688.7"/><polygon points="1192.3,266.5 1191.5,261.7 1147.5,693.7 1148.3,698.5" fill="#202020" stroke="#202020" stroke-width="0.8"/><line stroke="#161616" stroke-width="1.6" x1="1148.3" y1="698.5" x2="1147.5" y2="693.7"/><polygon points="1193.4,271.2 1192.3,266.5 1148.3,698.5 1149.4,703.2" fill="#202020" stroke="#202020" stroke-width="0.8"/><line stroke="#161616" stroke-width="1.6" x1="1149.4" y1="703.2" x2="1148.3" y2="698.5"/><polygon points="1194.8,275.9 1193.4,271.2 1149.4,703.2 1150.8,707.9" fill="#202020" stroke="#202020" stroke-width="0.8"/><line stroke="#161616" stroke-width="1.6" x1="1150.8" y1="707.9" x2="1149.4" y2="703.2"/><polygon points="1196.4,280.5 1194.8,275.9 1150.8,707.9 1152.4,712.5" fill="#202020" stroke="#202020" stroke-width="0.8"/><line stroke="#161616" stroke-width="1.6" x1="1152.4" y1="712.5" x2="1150.8" y2="707.9"/><polygon points="1198.3,285.1 1196.4,280.5 1152.4,712.5 1154.3,717.1" fill="#212121" stroke="#212121" stroke-width="0.8"/><line stroke="#161616" stroke-width="1.6" x1="1154.3" y1="717.1" x2="1152.4" y2="712.5"/><polygon points="1200.4,289.7 1198.3,285.1 1154.3,717.1 1156.4,721.7" fill="#242424" stroke="#242424" stroke-width="0.8"/><line stroke="#161616" stroke-width="1.6" x1="1156.4" y1="721.7" x2="1154.3" y2="717.1"/><polygon points="1202.6,294.2 1200.4,289.7 1156.4,721.7 1158.6,726.2" fill="#292929" stroke="#292929" stroke-width="0.8"/><line stroke="#161616" stroke-width="1.6" x1="1158.6" y1="726.2" x2="1156.4" y2="721.7"/><polygon points="1205.0,298.7 1202.6,294.2 1158.6,726.2 1161.0,730.7" fill="#2f2f2f" stroke="#2f2f2f" stroke-width="0.8"/><line stroke="#161616" stroke-width="1.6" x1="1161.0" y1="730.7" x2="1158.6" y2="726.2"/><polygon points="1207.8,303.2 1205.0,298.7 1161.0,730.7 1163.8,735.2" fill="#353535" stroke="#353535" stroke-width="0.8"/><line stroke="#161616" stroke-width="1.6" x1="1163.8" y1="735.2" x2="1161.0" y2="730.7"/><polygon points="1211.1,307.9 1207.8,303.2 1163.8,735.2 1167.1,739.9" fill="#3b3b3b" stroke="#3b3b3b" stroke-width="0.8"/><line stroke="#161616" stroke-width="1.6" x1="1167.1" y1="739.9" x2="1163.8" y2="735.2"/><polygon points="1214.7,312.5 1211.1,307.9 1167.1,739.9 1170.7,744.5" fill="#3f3f3f" stroke="#3f3f3f" stroke-width="0.8"/><line stroke="#161616" stroke-width="1.6" x1="1170.7" y1="744.5" x2="1167.1" y2="739.9"/><polygon points="1218.4,317.1 1214.7,312.5 1170.7,744.5 1174.4,749.1" fill="#424242" stroke="#424242" stroke-width="0.8"/><line stroke="#161616" stroke-width="1.6" x1="1174.4" y1="749.1" x2="1170.7" y2="744.5"/><polygon points="1222.1,321.5 1218.4,317.1 1174.4,749.1 1178.1,753.5" fill="#434343" stroke="#434343" stroke-width="0.8"/><line stroke="#161616" stroke-width="1.6" x1="1178.1" y1="753.5" x2="1174.4" y2="749.1"/><polygon points="1225.5,325.8 1222.1,321.5 1178.1,753.5 1181.5,757.8" fill="#414141" stroke="#414141" stroke-width="0.8"/><line stroke="#161616" stroke-width="1.6" x1="1181.5" y1="757.8" x2="1178.1" y2="753.5"/><polygon points="1228.5,329.8 1225.5,325.8 1181.5,757.8 1184.5,761.8" fill="#3e3e3e" stroke="#3e3e3e" stroke-width="0.8"/><line stroke="#161616" stroke-width="1.6" x1="1184.5" y1="761.8" x2="1181.5" y2="757.8"/><polygon points="1230.8,333.4 1228.5,329.8 1184.5,761.8 1186.8,765.4" fill="#3a3a3a" stroke="#3a3a3a" stroke-width="0.8"/><line stroke="#161616" stroke-width="1.6" x1="1186.8" y1="765.4" x2="1184.5" y2="761.8"/><polygon points="1232.5,336.6 1230.8,333.4 1186.8,765.4 1188.5,768.6" fill="#333333" stroke="#333333" stroke-width="0.8"/><line stroke="#161616" stroke-width="1.6" x1="1188.5" y1="768.6" x2="1186.8" y2="765.4"/><polygon points="1234.0,339.3 1232.5,336.6 1188.5,768.6 1190.0,771.3" fill="#2a2a2a" stroke="#2a2a2a" stroke-width="0.8"/><line stroke="#161616" stroke-width="1.6" x1="1190.0" y1="771.3" x2="1188.5" y2="768.6"/><polygon points="1235.0,341.7 1234.0,339.3 1190.0,771.3 1191.0,773.7" fill="#222222" stroke="#222222" stroke-width="0.8"/><line stroke="#161616" stroke-width="1.6" x1="1191.0" y1="773.7" x2="1190.0" y2="771.3"/><polygon points="1235.8,344.0 1235.0,341.7 1191.0,773.7 1191.8,776.0" fill="#202020" stroke="#202020" stroke-width="0.8"/><line stroke="#161616" stroke-width="1.6" x1="1191.8" y1="776.0" x2="1191.0" y2="773.7"/><polygon points="1236.2,346.2 1235.8,344.0 1191.8,776.0 1192.2,778.2" fill="#202020" stroke="#202020" stroke-width="0.8"/><line stroke="#161616" stroke-width="1.6" x1="1192.2" y1="778.2" x2="1191.8" y2="776.0"/><polygon points="1236.3,348.5 1236.2,346.2 1192.2,778.2 1192.3,780.5" fill="#202020" stroke="#202020" stroke-width="0.8"/><line stroke="#161616" stroke-width="1.6" x1="1192.3" y1="780.5" x2="1192.2" y2="778.2"/><polygon points="1138.0,437.6 1138.1,433.9 1094.1,865.9 1094.0,869.6" fill="#202020" stroke="#202020" stroke-width="0.8"/><line stroke="#161616" stroke-width="1.6" x1="1094.0" y1="869.6" x2="1094.1" y2="865.9"/><polygon points="1138.3,442.3 1138.0,437.6 1094.0,869.6 1094.3,874.3" fill="#202020" stroke="#202020" stroke-width="0.8"/><line stroke="#161616" stroke-width="1.6" x1="1094.3" y1="874.3" x2="1094.0" y2="869.6"/><polygon points="1139.3,448.0 1138.3,442.3 1094.3,874.3 1095.3,880.0" fill="#202020" stroke="#202020" stroke-width="0.8"/><line stroke="#161616" stroke-width="1.6" x1="1095.3" y1="880.0" x2="1094.3" y2="874.3"/><polygon points="1140.5,454.4 1139.3,448.0 1095.3,880.0 1096.5,886.4" fill="#202020" stroke="#202020" stroke-width="0.8"/><line stroke="#161616" stroke-width="1.6" x1="1096.5" y1="886.4" x2="1095.3" y2="880.0"/><polygon points="1141.9,461.1 1140.5,454.4 1096.5,886.4 1097.9,893.1" fill="#202020" stroke="#202020" stroke-width="0.8"/><line stroke="#161616" stroke-width="1.6" x1="1097.9" y1="893.1" x2="1096.5" y2="886.4"/><polygon points="1143.3,467.8 1141.9,461.1 1097.9,893.1 1099.3,899.8" fill="#202020" stroke="#202020" stroke-width="0.8"/><line stroke="#161616" stroke-width="1.6" x1="1099.3" y1="899.8" x2="1097.9" y2="893.1"/><polygon points="1144.4,474.0 1143.3,467.8 1099.3,899.8 1100.4,906.0" fill="#202020" stroke="#202020" stroke-width="0.8"/><line stroke="#161616" stroke-width="1.6" x1="1100.4" y1="906.0" x2="1099.3" y2="899.8"/><polygon points="1145.0,479.6 1144.4,474.0 1100.4,906.0 1101.0,911.6" fill="#202020" stroke="#202020" stroke-width="0.8"/><line stroke="#161616" stroke-width="1.6" x1="1101.0" y1="911.6" x2="1100.4" y2="906.0"/><polygon points="1145.0,484.0 1145.0,479.6 1101.0,911.6 1101.0,916.0" fill="#202020" stroke="#202020" stroke-width="0.8"/><line stroke="#161616" stroke-width="1.6" x1="1101.0" y1="916.0" x2="1101.0" y2="911.6"/><polygon points="1027.0,544.0 1026.9,540.6 982.9,972.6 983.0,976.0" fill="#202020" stroke="#202020" stroke-width="0.8"/><line stroke="#161616" stroke-width="1.6" x1="983.0" y1="976.0" x2="982.9" y2="972.6"/><polygon points="1027.2,547.7 1027.0,544.0 983.0,976.0 983.2,979.7" fill="#202020" stroke="#202020" stroke-width="0.8"/><line stroke="#161616" stroke-width="1.6" x1="983.2" y1="979.7" x2="983.0" y2="976.0"/><polygon points="1027.5,551.6 1027.2,547.7 983.2,979.7 983.5,983.6" fill="#202020" stroke="#202020" stroke-width="0.8"/><line stroke="#161616" stroke-width="1.6" x1="983.5" y1="983.6" x2="983.2" y2="979.7"/><polygon points="1028.1,555.8 1027.5,551.6 983.5,983.6 984.1,987.8" fill="#202020" stroke="#202020" stroke-width="0.8"/><line stroke="#161616" stroke-width="1.6" x1="984.1" y1="987.8" x2="983.5" y2="983.6"/><polygon points="1028.9,560.1 1028.1,555.8 984.1,987.8 984.9,992.1" fill="#202020" stroke="#202020" stroke-width="0.8"/><line stroke="#161616" stroke-width="1.6" x1="984.9" y1="992.1" x2="984.1" y2="987.8"/><polygon points="1030.0,564.4 1028.9,560.1 984.9,992.1 986.0,996.4" fill="#202020" stroke="#202020" stroke-width="0.8"/><line stroke="#161616" stroke-width="1.6" x1="986.0" y1="996.4" x2="984.9" y2="992.1"/><polygon points="1031.5,568.6 1030.0,564.4 986.0,996.4 987.5,1000.6" fill="#212121" stroke="#212121" stroke-width="0.8"/><line stroke="#161616" stroke-width="1.6" x1="987.5" y1="1000.6" x2="986.0" y2="996.4"/><polygon points="1165.7,569.7 1163.4,569.8 1119.4,1001.8 1121.7,1001.7" fill="#767676" stroke="#767676" stroke-width="0.8"/><line stroke="#161616" stroke-width="1.6" x1="1121.7" y1="1001.7" x2="1119.4" y2="1001.8"/><polygon points="1167.8,569.9 1165.7,569.7 1121.7,1001.7 1123.8,1001.9" fill="#767676" stroke="#767676" stroke-width="0.8"/><line stroke="#161616" stroke-width="1.6" x1="1123.8" y1="1001.9" x2="1121.7" y2="1001.7"/><polygon points="1163.4,569.8 1160.9,570.2 1116.9,1002.2 1119.4,1001.8" fill="#767676" stroke="#767676" stroke-width="0.8"/><line stroke="#161616" stroke-width="1.6" x1="1119.4" y1="1001.8" x2="1116.9" y2="1002.2"/><polygon points="1170.0,570.3 1167.8,569.9 1123.8,1001.9 1126.0,1002.3" fill="#767676" stroke="#767676" stroke-width="0.8"/><line stroke="#161616" stroke-width="1.6" x1="1126.0" y1="1002.3" x2="1123.8" y2="1001.9"/><polygon points="1160.9,570.2 1157.9,570.9 1113.9,1002.9 1116.9,1002.2" fill="#767676" stroke="#767676" stroke-width="0.8"/><line stroke="#161616" stroke-width="1.6" x1="1116.9" y1="1002.2" x2="1113.9" y2="1002.9"/><polygon points="1172.3,571.0 1170.0,570.3 1126.0,1002.3 1128.3,1003.0" fill="#767676" stroke="#767676" stroke-width="0.8"/><line stroke="#161616" stroke-width="1.6" x1="1128.3" y1="1003.0" x2="1126.0" y2="1002.3"/><polygon points="1033.5,572.7 1031.5,568.6 987.5,1000.6 989.5,1004.7" fill="#292929" stroke="#292929" stroke-width="0.8"/><line stroke="#161616" stroke-width="1.6" x1="989.5" y1="1004.7" x2="987.5" y2="1000.6"/><polygon points="1157.9,570.9 1154.4,571.9 1110.4,1003.9 1113.9,1002.9" fill="#767676" stroke="#767676" stroke-width="0.8"/><line stroke="#161616" stroke-width="1.6" x1="1113.9" y1="1002.9" x2="1110.4" y2="1003.9"/><polygon points="1175.0,572.0 1172.3,571.0 1128.3,1003.0 1131.0,1004.0" fill="#767676" stroke="#767676" stroke-width="0.8"/><line stroke="#161616" stroke-width="1.6" x1="1131.0" y1="1004.0" x2="1128.3" y2="1003.0"/><polygon points="1154.4,571.9 1150.2,573.3 1106.2,1005.3 1110.4,1003.9" fill="#767676" stroke="#767676" stroke-width="0.8"/><line stroke="#161616" stroke-width="1.6" x1="1110.4" y1="1003.9" x2="1106.2" y2="1005.3"/><polygon points="1177.9,573.3 1175.0,572.0 1131.0,1004.0 1133.9,1005.3" fill="#757575" stroke="#757575" stroke-width="0.8"/><line stroke="#161616" stroke-width="1.6" x1="1133.9" y1="1005.3" x2="1131.0" y2="1004.0"/><polygon points="1180.9,574.8 1177.9,573.3 1133.9,1005.3 1136.9,1006.8" fill="#747474" stroke="#747474" stroke-width="0.8"/><line stroke="#161616" stroke-width="1.6" x1="1136.9" y1="1006.8" x2="1133.9" y2="1005.3"/><polygon points="1150.2,573.3 1145.5,575.3 1101.5,1007.3 1106.2,1005.3" fill="#767676" stroke="#767676" stroke-width="0.8"/><line stroke="#161616" stroke-width="1.6" x1="1106.2" y1="1005.3" x2="1101.5" y2="1007.3"/><polygon points="1036.0,576.5 1033.5,572.7 989.5,1004.7 992.0,1008.5" fill="#363636" stroke="#363636" stroke-width="0.8"/><line stroke="#161616" stroke-width="1.6" x1="992.0" y1="1008.5" x2="989.5" y2="1004.7"/><polygon points="1184.0,576.6 1180.9,574.8 1136.9,1006.8 1140.0,1008.6" fill="#717171" stroke="#717171" stroke-width="0.8"/><line stroke="#161616" stroke-width="1.6" x1="1140.0" y1="1008.6" x2="1136.9" y2="1006.8"/><polygon points="1145.5,575.3 1140.3,577.6 1096.3,1009.6 1101.5,1007.3" fill="#767676" stroke="#767676" stroke-width="0.8"/><line stroke="#161616" stroke-width="1.6" x1="1101.5" y1="1007.3" x2="1096.3" y2="1009.6"/><polygon points="1187.1,578.7 1184.0,576.6 1140.0,1008.6 1143.1,1010.7" fill="#6e6e6e" stroke="#6e6e6e" stroke-width="0.8"/><line stroke="#161616" stroke-width="1.6" x1="1143.1" y1="1010.7" x2="1140.0" y2="1008.6"/><polygon points="1039.1,580.3 1036.0,576.5 992.0,1008.5 995.1,1012.3" fill="#444444" stroke="#444444" stroke-width="0.8"/><line stroke="#161616" stroke-width="1.6" x1="995.1" y1="1012.3" x2="992.0" y2="1008.5"/><polygon points="1140.3,577.6 1134.9,580.2 1090.9,1012.2 1096.3,1009.6" fill="#767676" stroke="#767676" stroke-width="0.8"/><line stroke="#161616" stroke-width="1.6" x1="1096.3" y1="1009.6" x2="1090.9" y2="1012.2"/><polygon points="1190.4,581.1 1187.1,578.7 1143.1,1010.7 1146.4,1013.1" fill="#6a6a6a" stroke="#6a6a6a" stroke-width="0.8"/><line stroke="#161616" stroke-width="1.6" x1="1146.4" y1="1013.1" x2="1143.1" y2="1010.7"/><polygon points="1134.9,580.2 1129.3,582.9 1085.3,1014.9 1090.9,1012.2" fill="#767676" stroke="#767676" stroke-width="0.8"/><line stroke="#161616" stroke-width="1.6" x1="1090.9" y1="1012.2" x2="1085.3" y2="1014.9"/><polygon points="1042.8,584.2 1039.1,580.3 995.1,1012.3 998.8,1016.2" fill="#525252" stroke="#525252" stroke-width="0.8"/><line stroke="#161616" stroke-width="1.6" x1="998.8" y1="1016.2" x2="995.1" y2="1012.3"/><polygon points="1193.7,583.7 1190.4,581.1 1146.4,1013.1 1149.7,1015.7" fill="#666666" stroke="#666666" stroke-width="0.8"/><line stroke="#161616" stroke-width="1.6" x1="1149.7" y1="1015.7" x2="1146.4" y2="1013.1"/><polygon points="1129.3,582.9 1123.7,585.5 1079.7,1017.5 1085.3,1014.9" fill="#767676" stroke="#767676" stroke-width="0.8"/><line stroke="#161616" stroke-width="1.6" x1="1085.3" y1="1014.9" x2="1079.7" y2="1017.5"/><polygon points="1197.1,586.7 1193.7,583.7 1149.7,1015.7 1153.1,1018.7" fill="#616161" stroke="#616161" stroke-width="0.8"/><line stroke="#161616" stroke-width="1.6" x1="1153.1" y1="1018.7" x2="1149.7" y2="1015.7"/><polygon points="1046.9,588.2 1042.8,584.2 998.8,1016.2 1002.9,1020.2" fill="#5d5d5d" stroke="#5d5d5d" stroke-width="0.8"/><line stroke="#161616" stroke-width="1.6" x1="1002.9" y1="1020.2" x2="998.8" y2="1016.2"/><polygon points="1123.7,585.5 1118.2,587.9 1074.2,1019.9 1079.7,1017.5" fill="#767676" stroke="#767676" stroke-width="0.8"/><line stroke="#161616" stroke-width="1.6" x1="1079.7" y1="1017.5" x2="1074.2" y2="1019.9"/><polygon points="1200.7,590.0 1197.1,586.7 1153.1,1018.7 1156.7,1022.0" fill="#5c5c5c" stroke="#5c5c5c" stroke-width="0.8"/><line stroke="#161616" stroke-width="1.6" x1="1156.7" y1="1022.0" x2="1153.1" y2="1018.7"/><polygon points="1118.2,587.9 1112.8,590.0 1068.8,1022.0 1074.2,1019.9" fill="#767676" stroke="#767676" stroke-width="0.8"/><line stroke="#161616" stroke-width="1.6" x1="1074.2" y1="1019.9" x2="1068.8" y2="1022.0"/><polygon points="1051.5,592.0 1046.9,588.2 1002.9,1020.2 1007.5,1024.0" fill="#666666" stroke="#666666" stroke-width="0.8"/><line stroke="#161616" stroke-width="1.6" x1="1007.5" y1="1024.0" x2="1002.9" y2="1020.2"/><polygon points="1112.8,590.0 1107.5,592.0 1063.5,1024.0 1068.8,1022.0" fill="#767676" stroke="#767676" stroke-width="0.8"/><line stroke="#161616" stroke-width="1.6" x1="1068.8" y1="1022.0" x2="1063.5" y2="1024.0"/><polygon points="1204.4,593.7 1200.7,590.0 1156.7,1022.0 1160.4,1025.7" fill="#575757" stroke="#575757" stroke-width="0.8"/><line stroke="#161616" stroke-width="1.6" x1="1160.4" y1="1025.7" x2="1156.7" y2="1022.0"/><polygon points="1107.5,592.0 1102.2,594.3 1058.2,1026.3 1063.5,1024.0" fill="#767676" stroke="#767676" stroke-width="0.8"/><line stroke="#161616" stroke-width="1.6" x1="1063.5" y1="1024.0" x2="1058.2" y2="1026.3"/><polygon points="1056.2,595.5 1051.5,592.0 1007.5,1024.0 1012.2,1027.5" fill="#6d6d6d" stroke="#6d6d6d" stroke-width="0.8"/><line stroke="#161616" stroke-width="1.6" x1="1012.2" y1="1027.5" x2="1007.5" y2="1024.0"/><polygon points="1102.2,594.3 1096.8,596.6 1052.8,1028.6 1058.2,1026.3" fill="#767676" stroke="#767676" stroke-width="0.8"/><line stroke="#161616" stroke-width="1.6" x1="1058.2" y1="1026.3" x2="1052.8" y2="1028.6"/><polygon points="1208.1,597.7 1204.4,593.7 1160.4,1025.7 1164.1,1029.7" fill="#535353" stroke="#535353" stroke-width="0.8"/><line stroke="#161616" stroke-width="1.6" x1="1164.1" y1="1029.7" x2="1160.4" y2="1025.7"/><polygon points="1061.2,598.4 1056.2,595.5 1012.2,1027.5 1017.2,1030.4" fill="#737373" stroke="#737373" stroke-width="0.8"/><line stroke="#161616" stroke-width="1.6" x1="1017.2" y1="1030.4" x2="1012.2" y2="1027.5"/><polygon points="1096.8,596.6 1091.5,598.7 1047.5,1030.7 1052.8,1028.6" fill="#767676" stroke="#767676" stroke-width="0.8"/><line stroke="#161616" stroke-width="1.6" x1="1052.8" y1="1028.6" x2="1047.5" y2="1030.7"/><polygon points="1066.1,600.7 1061.2,598.4 1017.2,1030.4 1022.1,1032.7" fill="#767676" stroke="#767676" stroke-width="0.8"/><line stroke="#161616" stroke-width="1.6" x1="1022.1" y1="1032.7" x2="1017.2" y2="1030.4"/><polygon points="1091.5,598.7 1086.2,600.5 1042.2,1032.5 1047.5,1030.7" fill="#767676" stroke="#767676" stroke-width="0.8"/><line stroke="#161616" stroke-width="1.6" x1="1047.5" y1="1030.7" x2="1042.2" y2="1032.5"/><polygon points="1211.9,602.2 1208.1,597.7 1164.1,1029.7 1167.9,1034.2" fill="#505050" stroke="#505050" stroke-width="0.8"/><line stroke="#161616" stroke-width="1.6" x1="1167.9" y1="1034.2" x2="1164.1" y2="1029.7"/><polygon points="1086.2,600.5 1081.0,601.8 1037.0,1033.8 1042.2,1032.5" fill="#767676" stroke="#767676" stroke-width="0.8"/><line stroke="#161616" stroke-width="1.6" x1="1042.2" y1="1032.5" x2="1037.0" y2="1033.8"/><polygon points="1071.0,602.0 1066.1,600.7 1022.1,1032.7 1027.0,1034.0" fill="#767676" stroke="#767676" stroke-width="0.8"/><line stroke="#161616" stroke-width="1.6" x1="1027.0" y1="1034.0" x2="1022.1" y2="1032.7"/><polygon points="1081.0,601.8 1075.9,602.3 1031.9,1034.3 1037.0,1033.8" fill="#767676" stroke="#767676" stroke-width="0.8"/><line stroke="#161616" stroke-width="1.6" x1="1037.0" y1="1033.8" x2="1031.9" y2="1034.3"/><polygon points="1075.9,602.3 1071.0,602.0 1027.0,1034.0 1031.9,1034.3" fill="#767676" stroke="#767676" stroke-width="0.8"/><line stroke="#161616" stroke-width="1.6" x1="1031.9" y1="1034.3" x2="1027.0" y2="1034.0"/><polygon points="1215.8,606.9 1211.9,602.2 1167.9,1034.2 1171.8,1038.8" fill="#4d4d4d" stroke="#4d4d4d" stroke-width="0.8"/><line stroke="#161616" stroke-width="1.6" x1="1171.8" y1="1038.8" x2="1167.9" y2="1034.2"/><polygon points="1219.9,611.7 1215.8,606.9 1171.8,1038.8 1175.9,1043.7" fill="#4c4c4c" stroke="#4c4c4c" stroke-width="0.8"/><line stroke="#161616" stroke-width="1.6" x1="1175.9" y1="1043.7" x2="1171.8" y2="1038.8"/><polygon points="1224.1,616.8 1219.9,611.7 1175.9,1043.7 1180.1,1048.8" fill="#4c4c4c" stroke="#4c4c4c" stroke-width="0.8"/><line stroke="#161616" stroke-width="1.6" x1="1180.1" y1="1048.8" x2="1175.9" y2="1043.7"/><polygon points="1228.5,621.9 1224.1,616.8 1180.1,1048.8 1184.5,1053.9" fill="#4c4c4c" stroke="#4c4c4c" stroke-width="0.8"/><line stroke="#161616" stroke-width="1.6" x1="1184.5" y1="1053.9" x2="1180.1" y2="1048.8"/><polygon points="1233.0,627.0 1228.5,621.9 1184.5,1053.9 1189.0,1059.0" fill="#4c4c4c" stroke="#4c4c4c" stroke-width="0.8"/><line stroke="#161616" stroke-width="1.6" x1="1189.0" y1="1059.0" x2="1184.5" y2="1053.9"/><polygon points="2131.4,624.7 2131.3,628.9 2087.3,1060.9 2087.4,1056.7" fill="#212121" stroke="#212121" stroke-width="0.8"/><line stroke="#161616" stroke-width="1.6" x1="2087.4" y1="1056.7" x2="2087.3" y2="1060.9"/><polygon points="1237.8,632.4 1233.0,627.0 1189.0,1059.0 1193.8,1064.4" fill="#4c4c4c" stroke="#4c4c4c" stroke-width="0.8"/><line stroke="#161616" stroke-width="1.6" x1="1193.8" y1="1064.4" x2="1189.0" y2="1059.0"/><polygon points="2131.3,628.9 2131.0,632.9 2087.0,1064.9 2087.3,1060.9" fill="#272727" stroke="#272727" stroke-width="0.8"/><line stroke="#161616" stroke-width="1.6" x1="2087.3" y1="1060.9" x2="2087.0" y2="1064.9"/><polygon points="2131.0,632.9 2130.4,636.8 2086.4,1068.8 2087.0,1064.9" fill="#323232" stroke="#323232" stroke-width="0.8"/><line stroke="#161616" stroke-width="1.6" x1="2087.0" y1="1064.9" x2="2086.4" y2="1068.8"/><polygon points="1242.8,638.4 1237.8,632.4 1193.8,1064.4 1198.8,1070.4" fill="#4c4c4c" stroke="#4c4c4c" stroke-width="0.8"/><line stroke="#161616" stroke-width="1.6" x1="1198.8" y1="1070.4" x2="1193.8" y2="1064.4"/><polygon points="2130.4,636.8 2129.4,640.4 2085.4,1072.4 2086.4,1068.8" fill="#434343" stroke="#434343" stroke-width="0.8"/><line stroke="#161616" stroke-width="1.6" x1="2086.4" y1="1068.8" x2="2085.4" y2="1072.4"/><polygon points="1248.0,644.7 1242.8,638.4 1198.8,1070.4 1204.0,1076.7" fill="#4e4e4e" stroke="#4e4e4e" stroke-width="0.8"/><line stroke="#161616" stroke-width="1.6" x1="1204.0" y1="1076.7" x2="1198.8" y2="1070.4"/><polygon points="2129.4,640.4 2127.9,643.7 2083.9,1075.7 2085.4,1072.4" fill="#565656" stroke="#565656" stroke-width="0.8"/><line stroke="#161616" stroke-width="1.6" x1="2085.4" y1="1072.4" x2="2083.9" y2="1075.7"/><polygon points="2127.9,643.7 2126.0,646.6 2082.0,1078.6 2083.9,1075.7" fill="#676767" stroke="#676767" stroke-width="0.8"/><line stroke="#161616" stroke-width="1.6" x1="2083.9" y1="1075.7" x2="2082.0" y2="1078.6"/><polygon points="2126.0,646.6 2123.8,649.0 2079.8,1081.0 2082.0,1078.6" fill="#737373" stroke="#737373" stroke-width="0.8"/><line stroke="#161616" stroke-width="1.6" x1="2082.0" y1="1078.6" x2="2079.8" y2="1081.0"/><polygon points="1253.3,650.9 1248.0,644.7 1204.0,1076.7 1209.3,1082.9" fill="#505050" stroke="#505050" stroke-width="0.8"/><line stroke="#161616" stroke-width="1.6" x1="1209.3" y1="1082.9" x2="1204.0" y2="1076.7"/><polygon points="2123.8,649.0 2121.5,650.9 2077.5,1082.9 2079.8,1081.0" fill="#767676" stroke="#767676" stroke-width="0.8"/><line stroke="#161616" stroke-width="1.6" x1="2079.8" y1="1081.0" x2="2077.5" y2="1082.9"/><polygon points="2121.5,650.9 2118.8,652.4 2074.8,1084.4 2077.5,1082.9" fill="#767676" stroke="#767676" stroke-width="0.8"/><line stroke="#161616" stroke-width="1.6" x1="2077.5" y1="1082.9" x2="2074.8" y2="1084.4"/><polygon points="2118.8,652.4 2115.8,653.7 2071.8,1085.7 2074.8,1084.4" fill="#767676" stroke="#767676" stroke-width="0.8"/><line stroke="#161616" stroke-width="1.6" x1="2074.8" y1="1084.4" x2="2071.8" y2="1085.7"/><polygon points="1258.7,657.0 1253.3,650.9 1209.3,1082.9 1214.7,1089.0" fill="#545454" stroke="#545454" stroke-width="0.8"/><line stroke="#161616" stroke-width="1.6" x1="1214.7" y1="1089.0" x2="1209.3" y2="1082.9"/><polygon points="2115.8,653.7 2112.1,654.9 2068.1,1086.9 2071.8,1085.7" fill="#767676" stroke="#767676" stroke-width="0.8"/><line stroke="#161616" stroke-width="1.6" x1="2071.8" y1="1085.7" x2="2068.1" y2="1086.9"/><polygon points="2112.1,654.9 2107.7,656.2 2063.7,1088.2 2068.1,1086.9" fill="#767676" stroke="#767676" stroke-width="0.8"/><line stroke="#161616" stroke-width="1.6" x1="2068.1" y1="1086.9" x2="2063.7" y2="1088.2"/><polygon points="2107.7,656.2 2102.4,657.7 2058.4,1089.7 2063.7,1088.2" fill="#767676" stroke="#767676" stroke-width="0.8"/><line stroke="#161616" stroke-width="1.6" x1="2063.7" y1="1088.2" x2="2058.4" y2="1089.7"/><polygon points="2102.4,657.7 2096.0,659.5 2052.0,1091.5 2058.4,1089.7" fill="#767676" stroke="#767676" stroke-width="0.8"/><line stroke="#161616" stroke-width="1.6" x1="2058.4" y1="1089.7" x2="2052.0" y2="1091.5"/><polygon points="1264.1,662.6 1258.7,657.0 1214.7,1089.0 1220.1,1094.6" fill="#5a5a5a" stroke="#5a5a5a" stroke-width="0.8"/><line stroke="#161616" stroke-width="1.6" x1="1220.1" y1="1094.6" x2="1214.7" y2="1089.0"/><polygon points="2096.0,659.5 2087.8,661.6 2043.8,1093.6 2052.0,1091.5" fill="#767676" stroke="#767676" stroke-width="0.8"/><line stroke="#161616" stroke-width="1.6" x1="2052.0" y1="1091.5" x2="2043.8" y2="1093.6"/><polygon points="2087.8,661.6 2077.7,663.9 2033.7,1095.9 2043.8,1093.6" fill="#767676" stroke="#767676" stroke-width="0.8"/><line stroke="#161616" stroke-width="1.6" x1="2043.8" y1="1093.6" x2="2033.7" y2="1095.9"/><polygon points="1269.5,667.5 1264.1,662.6 1220.1,1094.6 1225.5,1099.5" fill="#626262" stroke="#626262" stroke-width="0.8"/><line stroke="#161616" stroke-width="1.6" x1="1225.5" y1="1099.5" x2="1220.1" y2="1094.6"/><polygon points="2077.7,663.9 2066.3,666.3 2022.3,1098.3 2033.7,1095.9" fill="#767676" stroke="#767676" stroke-width="0.8"/><line stroke="#161616" stroke-width="1.6" x1="2033.7" y1="1095.9" x2="2022.3" y2="1098.3"/><polygon points="2066.3,666.3 2054.4,668.8 2010.4,1100.8 2022.3,1098.3" fill="#767676" stroke="#767676" stroke-width="0.8"/><line stroke="#161616" stroke-width="1.6" x1="2022.3" y1="1098.3" x2="2010.4" y2="1100.8"/><polygon points="1274.8,671.4 1269.5,667.5 1225.5,1099.5 1230.8,1103.4" fill="#6a6a6a" stroke="#6a6a6a" stroke-width="0.8"/><line stroke="#161616" stroke-width="1.6" x1="1230.8" y1="1103.4" x2="1225.5" y2="1099.5"/><polygon points="2054.4,668.8 2042.6,671.4 1998.6,1103.4 2010.4,1100.8" fill="#767676" stroke="#767676" stroke-width="0.8"/><line stroke="#161616" stroke-width="1.6" x1="2010.4" y1="1100.8" x2="1998.6" y2="1103.4"/><polygon points="2042.6,671.4 2031.6,673.9 1987.6,1105.9 1998.6,1103.4" fill="#767676" stroke="#767676" stroke-width="0.8"/><line stroke="#161616" stroke-width="1.6" x1="1998.6" y1="1103.4" x2="1987.6" y2="1105.9"/><polygon points="1280.0,674.3 1274.8,671.4 1230.8,1103.4 1236.0,1106.3" fill="#717171" stroke="#717171" stroke-width="0.8"/><line stroke="#161616" stroke-width="1.6" x1="1236.0" y1="1106.3" x2="1230.8" y2="1103.4"/><polygon points="2031.6,673.9 2022.2,676.5 1978.2,1108.5 1987.6,1105.9" fill="#767676" stroke="#767676" stroke-width="0.8"/><line stroke="#161616" stroke-width="1.6" x1="1987.6" y1="1105.9" x2="1978.2" y2="1108.5"/><polygon points="1285.0,676.4 1280.0,674.3 1236.0,1106.3 1241.0,1108.4" fill="#757575" stroke="#757575" stroke-width="0.8"/><line stroke="#161616" stroke-width="1.6" x1="1241.0" y1="1108.4" x2="1236.0" y2="1106.3"/><polygon points="1290.0,677.9 1285.0,676.4 1241.0,1108.4 1246.0,1109.9" fill="#767676" stroke="#767676" stroke-width="0.8"/><line stroke="#161616" stroke-width="1.6" x1="1246.0" y1="1109.9" x2="1241.0" y2="1108.4"/><polygon points="2022.2,676.5 2015.0,679.0 1971.0,1111.0 1978.2,1108.5" fill="#767676" stroke="#767676" stroke-width="0.8"/><line stroke="#161616" stroke-width="1.6" x1="1978.2" y1="1108.5" x2="1971.0" y2="1111.0"/><polygon points="1367.4,678.3 1361.0,678.3 1317.0,1110.3 1323.4,1110.3" fill="#767676" stroke="#767676" stroke-width="0.8"/><line stroke="#161616" stroke-width="1.6" x1="1323.4" y1="1110.3" x2="1317.0" y2="1110.3"/><polygon points="1373.9,678.5 1367.4,678.3 1323.4,1110.3 1329.9,1110.5" fill="#767676" stroke="#767676" stroke-width="0.8"/><line stroke="#161616" stroke-width="1.6" x1="1329.9" y1="1110.5" x2="1323.4" y2="1110.3"/><polygon points="1295.1,678.9 1290.0,677.9 1246.0,1109.9 1251.1,1110.9" fill="#767676" stroke="#767676" stroke-width="0.8"/><line stroke="#161616" stroke-width="1.6" x1="1251.1" y1="1110.9" x2="1246.0" y2="1109.9"/><polygon points="1361.0,678.3 1354.5,678.7 1310.5,1110.7 1317.0,1110.3" fill="#767676" stroke="#767676" stroke-width="0.8"/><line stroke="#161616" stroke-width="1.6" x1="1317.0" y1="1110.3" x2="1310.5" y2="1110.7"/><polygon points="1380.6,678.8 1373.9,678.5 1329.9,1110.5 1336.6,1110.8" fill="#767676" stroke="#767676" stroke-width="0.8"/><line stroke="#161616" stroke-width="1.6" x1="1336.6" y1="1110.8" x2="1329.9" y2="1110.5"/><polygon points="1354.5,678.7 1347.9,679.2 1303.9,1111.2 1310.5,1110.7" fill="#767676" stroke="#767676" stroke-width="0.8"/><line stroke="#161616" stroke-width="1.6" x1="1310.5" y1="1110.7" x2="1303.9" y2="1111.2"/><polygon points="1387.4,679.1 1380.6,678.8 1336.6,1110.8 1343.4,1111.1" fill="#767676" stroke="#767676" stroke-width="0.8"/><line stroke="#161616" stroke-width="1.6" x1="1343.4" y1="1111.1" x2="1336.6" y2="1110.8"/><polygon points="1300.2,679.5 1295.1,678.9 1251.1,1110.9 1256.2,1111.5" fill="#767676" stroke="#767676" stroke-width="0.8"/><line stroke="#161616" stroke-width="1.6" x1="1256.2" y1="1111.5" x2="1251.1" y2="1110.9"/><polygon points="1394.1,679.6 1387.4,679.1 1343.4,1111.1 1350.1,1111.6" fill="#767676" stroke="#767676" stroke-width="0.8"/><line stroke="#161616" stroke-width="1.6" x1="1350.1" y1="1111.6" x2="1343.4" y2="1111.1"/><polygon points="1347.9,679.2 1341.4,679.7 1297.4,1111.7 1303.9,1111.2" fill="#767676" stroke="#767676" stroke-width="0.8"/><line stroke="#161616" stroke-width="1.6" x1="1303.9" y1="1111.2" x2="1297.4" y2="1111.7"/><polygon points="1305.4,679.9 1300.2,679.5 1256.2,1111.5 1261.4,1111.9" fill="#767676" stroke="#767676" stroke-width="0.8"/><line stroke="#161616" stroke-width="1.6" x1="1261.4" y1="1111.9" x2="1256.2" y2="1111.5"/><polygon points="1400.7,680.2 1394.1,679.6 1350.1,1111.6 1356.7,1112.2" fill="#767676" stroke="#767676" stroke-width="0.8"/><line stroke="#161616" stroke-width="1.6" x1="1356.7" y1="1112.2" x2="1350.1" y2="1111.6"/><polygon points="1341.4,679.7 1334.9,680.3 1290.9,1112.3 1297.4,1111.7" fill="#767676" stroke="#767676" stroke-width="0.8"/><line stroke="#161616" stroke-width="1.6" x1="1297.4" y1="1111.7" x2="1290.9" y2="1112.3"/><polygon points="1310.8,680.2 1305.4,679.9 1261.4,1111.9 1266.8,1112.2" fill="#767676" stroke="#767676" stroke-width="0.8"/><line stroke="#161616" stroke-width="1.6" x1="1266.8" y1="1112.2" x2="1261.4" y2="1111.9"/><polygon points="2015.0,679.0 2010.1,681.4 1966.1,1113.4 1971.0,1111.0" fill="#767676" stroke="#767676" stroke-width="0.8"/><line stroke="#161616" stroke-width="1.6" x1="1971.0" y1="1111.0" x2="1966.1" y2="1113.4"/><polygon points="1316.5,680.6 1310.8,680.2 1266.8,1112.2 1272.5,1112.6" fill="#767676" stroke="#767676" stroke-width="0.8"/><line stroke="#161616" stroke-width="1.6" x1="1272.5" y1="1112.6" x2="1266.8" y2="1112.2"/><polygon points="1334.9,680.3 1328.6,680.7 1284.6,1112.7 1290.9,1112.3" fill="#767676" stroke="#767676" stroke-width="0.8"/><line stroke="#161616" stroke-width="1.6" x1="1290.9" y1="1112.3" x2="1284.6" y2="1112.7"/><polygon points="1406.9,681.0 1400.7,680.2 1356.7,1112.2 1362.9,1113.0" fill="#767676" stroke="#767676" stroke-width="0.8"/><line stroke="#161616" stroke-width="1.6" x1="1362.9" y1="1113.0" x2="1356.7" y2="1112.2"/><polygon points="1322.4,680.8 1316.5,680.6 1272.5,1112.6 1278.4,1112.8" fill="#767676" stroke="#767676" stroke-width="0.8"/><line stroke="#161616" stroke-width="1.6" x1="1278.4" y1="1112.8" x2="1272.5" y2="1112.6"/><polygon points="1328.6,680.7 1322.4,680.8 1278.4,1112.8 1284.6,1112.7" fill="#767676" stroke="#767676" stroke-width="0.8"/><line stroke="#161616" stroke-width="1.6" x1="1284.6" y1="1112.7" x2="1278.4" y2="1112.8"/><polygon points="1412.8,681.9 1406.9,681.0 1362.9,1113.0 1368.8,1113.9" fill="#767676" stroke="#767676" stroke-width="0.8"/><line stroke="#161616" stroke-width="1.6" x1="1368.8" y1="1113.9" x2="1362.9" y2="1113.0"/><polygon points="1418.0,683.0 1412.8,681.9 1368.8,1113.9 1374.0,1115.0" fill="#767676" stroke="#767676" stroke-width="0.8"/><line stroke="#161616" stroke-width="1.6" x1="1374.0" y1="1115.0" x2="1368.8" y2="1113.9"/><polygon points="2010.1,681.4 2007.0,683.6 1963.0,1115.6 1966.1,1113.4" fill="#767676" stroke="#767676" stroke-width="0.8"/><line stroke="#161616" stroke-width="1.6" x1="1966.1" y1="1113.4" x2="1963.0" y2="1115.6"/><polygon points="1422.7,684.2 1418.0,683.0 1374.0,1115.0 1378.7,1116.2" fill="#767676" stroke="#767676" stroke-width="0.8"/><line stroke="#161616" stroke-width="1.6" x1="1378.7" y1="1116.2" x2="1374.0" y2="1115.0"/><polygon points="2007.0,683.6 2005.1,685.8 1961.1,1117.8 1963.0,1115.6" fill="#767676" stroke="#767676" stroke-width="0.8"/><line stroke="#161616" stroke-width="1.6" x1="1963.0" y1="1115.6" x2="1961.1" y2="1117.8"/><polygon points="1426.9,685.4 1422.7,684.2 1378.7,1116.2 1382.9,1117.4" fill="#767676" stroke="#767676" stroke-width="0.8"/><line stroke="#161616" stroke-width="1.6" x1="1382.9" y1="1117.4" x2="1378.7" y2="1116.2"/><polygon points="1430.8,686.8 1426.9,685.4 1382.9,1117.4 1386.8,1118.8" fill="#767676" stroke="#767676" stroke-width="0.8"/><line stroke="#161616" stroke-width="1.6" x1="1386.8" y1="1118.8" x2="1382.9" y2="1117.4"/><polygon points="2005.1,685.8 2004.2,688.0 1960.2,1120.0 1961.1,1117.8" fill="#6b6b6b" stroke="#6b6b6b" stroke-width="0.8"/><line stroke="#161616" stroke-width="1.6" x1="1961.1" y1="1117.8" x2="1960.2" y2="1120.0"/><polygon points="1434.3,688.3 1430.8,686.8 1386.8,1118.8 1390.3,1120.3" fill="#757575" stroke="#757575" stroke-width="0.8"/><line stroke="#161616" stroke-width="1.6" x1="1390.3" y1="1120.3" x2="1386.8" y2="1118.8"/><polygon points="2004.2,688.0 2003.9,690.3 1959.9,1122.3 1960.2,1120.0" fill="#505050" stroke="#505050" stroke-width="0.8"/><line stroke="#161616" stroke-width="1.6" x1="1960.2" y1="1120.0" x2="1959.9" y2="1122.3"/><polygon points="1437.5,690.0 1434.3,688.3 1390.3,1120.3 1393.5,1122.0" fill="#737373" stroke="#737373" stroke-width="0.8"/><line stroke="#161616" stroke-width="1.6" x1="1393.5" y1="1122.0" x2="1390.3" y2="1120.3"/><polygon points="1440.5,692.0 1437.5,690.0 1393.5,1122.0 1396.5,1124.0" fill="#6e6e6e" stroke="#6e6e6e" stroke-width="0.8"/><line stroke="#161616" stroke-width="1.6" x1="1396.5" y1="1124.0" x2="1393.5" y2="1122.0"/><polygon points="2003.9,690.3 2003.8,692.9 1959.8,1124.9 1959.9,1122.3" fill="#3a3a3a" stroke="#3a3a3a" stroke-width="0.8"/><line stroke="#161616" stroke-width="1.6" x1="1959.9" y1="1122.3" x2="1959.8" y2="1124.9"/><polygon points="1443.3,694.3 1440.5,692.0 1396.5,1124.0 1399.3,1126.3" fill="#646464" stroke="#646464" stroke-width="0.8"/><line stroke="#161616" stroke-width="1.6" x1="1399.3" y1="1126.3" x2="1396.5" y2="1124.0"/><polygon points="2003.8,692.9 2003.6,695.7 1959.6,1127.7 1959.8,1124.9" fill="#2e2e2e" stroke="#2e2e2e" stroke-width="0.8"/><line stroke="#161616" stroke-width="1.6" x1="1959.8" y1="1124.9" x2="1959.6" y2="1127.7"/><polygon points="1446.0,697.0 1443.3,694.3 1399.3,1126.3 1402.0,1129.0" fill="#575757" stroke="#575757" stroke-width="0.8"/><line stroke="#161616" stroke-width="1.6" x1="1402.0" y1="1129.0" x2="1399.3" y2="1126.3"/><polygon points="2003.6,695.7 2003.0,699.0 1959.0,1131.0 1959.6,1127.7" fill="#2a2a2a" stroke="#2a2a2a" stroke-width="0.8"/><line stroke="#161616" stroke-width="1.6" x1="1959.6" y1="1127.7" x2="1959.0" y2="1131.0"/><polygon points="1448.5,700.0 1446.0,697.0 1402.0,1129.0 1404.5,1132.0" fill="#484848" stroke="#484848" stroke-width="0.8"/><line stroke="#161616" stroke-width="1.6" x1="1404.5" y1="1132.0" x2="1402.0" y2="1129.0"/><polygon points="2003.0,699.0 2002.1,702.8 1958.1,1134.8 1959.0,1131.0" fill="#292929" stroke="#292929" stroke-width="0.8"/><line stroke="#161616" stroke-width="1.6" x1="1959.0" y1="1131.0" x2="1958.1" y2="1134.8"/><polygon points="1450.6,703.3 1448.5,700.0 1404.5,1132.0 1406.6,1135.3" fill="#3a3a3a" stroke="#3a3a3a" stroke-width="0.8"/><line stroke="#161616" stroke-width="1.6" x1="1406.6" y1="1135.3" x2="1404.5" y2="1132.0"/><polygon points="2002.1,702.8 2001.5,707.1 1957.5,1139.1 1958.1,1134.8" fill="#292929" stroke="#292929" stroke-width="0.8"/><line stroke="#161616" stroke-width="1.6" x1="1958.1" y1="1134.8" x2="1957.5" y2="1139.1"/><polygon points="1452.6,706.8 1450.6,703.3 1406.6,1135.3 1408.6,1138.8" fill="#2e2e2e" stroke="#2e2e2e" stroke-width="0.8"/><line stroke="#161616" stroke-width="1.6" x1="1408.6" y1="1138.8" x2="1406.6" y2="1135.3"/><polygon points="1454.3,710.7 1452.6,706.8 1408.6,1138.8 1410.3,1142.7" fill="#252525" stroke="#252525" stroke-width="0.8"/><line stroke="#161616" stroke-width="1.6" x1="1410.3" y1="1142.7" x2="1408.6" y2="1138.8"/><polygon points="2001.5,707.1 2001.0,711.7 1957.0,1143.7 1957.5,1139.1" fill="#292929" stroke="#292929" stroke-width="0.8"/><line stroke="#161616" stroke-width="1.6" x1="1957.5" y1="1139.1" x2="1957.0" y2="1143.7"/><polygon points="1455.9,714.8 1454.3,710.7 1410.3,1142.7 1411.9,1146.8" fill="#212121" stroke="#212121" stroke-width="0.8"/><line stroke="#161616" stroke-width="1.6" x1="1411.9" y1="1146.8" x2="1410.3" y2="1142.7"/><polygon points="2001.0,711.7 2000.6,716.5 1956.6,1148.5 1957.0,1143.7" fill="#272727" stroke="#272727" stroke-width="0.8"/><line stroke="#161616" stroke-width="1.6" x1="1957.0" y1="1143.7" x2="1956.6" y2="1148.5"/><polygon points="1457.3,719.2 1455.9,714.8 1411.9,1146.8 1413.3,1151.2" fill="#202020" stroke="#202020" stroke-width="0.8"/><line stroke="#161616" stroke-width="1.6" x1="1413.3" y1="1151.2" x2="1411.9" y2="1146.8"/><polygon points="2000.6,716.5 2000.3,721.4 1956.3,1153.4 1956.6,1148.5" fill="#262626" stroke="#262626" stroke-width="0.8"/><line stroke="#161616" stroke-width="1.6" x1="1956.6" y1="1148.5" x2="1956.3" y2="1153.4"/><polygon points="1458.7,724.0 1457.3,719.2 1413.3,1151.2 1414.7,1156.0" fill="#202020" stroke="#202020" stroke-width="0.8"/><line stroke="#161616" stroke-width="1.6" x1="1414.7" y1="1156.0" x2="1413.3" y2="1151.2"/><polygon points="2000.3,721.4 2000.0,726.2 1956.0,1158.2 1956.3,1153.4" fill="#262626" stroke="#262626" stroke-width="0.8"/><line stroke="#161616" stroke-width="1.6" x1="1956.3" y1="1153.4" x2="1956.0" y2="1158.2"/><polygon points="1460.0,729.0 1458.7,724.0 1414.7,1156.0 1416.0,1161.0" fill="#202020" stroke="#202020" stroke-width="0.8"/><line stroke="#161616" stroke-width="1.6" x1="1416.0" y1="1161.0" x2="1414.7" y2="1156.0"/><polygon points="2000.0,726.2 1999.5,730.8 1955.5,1162.8 1956.0,1158.2" fill="#252525" stroke="#252525" stroke-width="0.8"/><line stroke="#161616" stroke-width="1.6" x1="1956.0" y1="1158.2" x2="1955.5" y2="1162.8"/><polygon points="1461.2,734.8 1460.0,729.0 1416.0,1161.0 1417.2,1166.8" fill="#202020" stroke="#202020" stroke-width="0.8"/><line stroke="#161616" stroke-width="1.6" x1="1417.2" y1="1166.8" x2="1416.0" y2="1161.0"/><polygon points="1999.5,730.8 1999.0,735.0 1955.0,1167.0 1955.5,1162.8" fill="#252525" stroke="#252525" stroke-width="0.8"/><line stroke="#161616" stroke-width="1.6" x1="1955.5" y1="1162.8" x2="1955.0" y2="1167.0"/><polygon points="1999.0,735.0 1998.5,738.8 1954.5,1170.8 1955.0,1167.0" fill="#252525" stroke="#252525" stroke-width="0.8"/><line stroke="#161616" stroke-width="1.6" x1="1955.0" y1="1167.0" x2="1954.5" y2="1170.8"/><polygon points="1462.4,741.6 1461.2,734.8 1417.2,1166.8 1418.4,1173.6" fill="#202020" stroke="#202020" stroke-width="0.8"/><line stroke="#161616" stroke-width="1.6" x1="1418.4" y1="1173.6" x2="1417.2" y2="1166.8"/><polygon points="1998.5,738.8 1998.3,742.4 1954.3,1174.4 1954.5,1170.8" fill="#262626" stroke="#262626" stroke-width="0.8"/><line stroke="#161616" stroke-width="1.6" x1="1954.5" y1="1170.8" x2="1954.3" y2="1174.4"/><polygon points="1998.3,742.4 1998.1,745.8 1954.1,1177.8 1954.3,1174.4" fill="#292929" stroke="#292929" stroke-width="0.8"/><line stroke="#161616" stroke-width="1.6" x1="1954.3" y1="1174.4" x2="1954.1" y2="1177.8"/><polygon points="1463.4,749.0 1462.4,741.6 1418.4,1173.6 1419.4,1181.0" fill="#202020" stroke="#202020" stroke-width="0.8"/><line stroke="#161616" stroke-width="1.6" x1="1419.4" y1="1181.0" x2="1418.4" y2="1173.6"/><polygon points="1998.1,745.8 1997.8,749.1 1953.8,1181.1 1954.1,1177.8" fill="#2e2e2e" stroke="#2e2e2e" stroke-width="0.8"/><line stroke="#161616" stroke-width="1.6" x1="1954.1" y1="1177.8" x2="1953.8" y2="1181.1"/><polygon points="1554.7,747.6 1551.2,747.5 1507.2,1179.5 1510.7,1179.6" fill="#767676" stroke="#767676" stroke-width="0.8"/><line stroke="#161616" stroke-width="1.6" x1="1510.7" y1="1179.6" x2="1507.2" y2="1179.5"/><polygon points="1551.2,747.5 1548.1,747.6 1504.1,1179.6 1507.2,1179.5" fill="#767676" stroke="#767676" stroke-width="0.8"/><line stroke="#161616" stroke-width="1.6" x1="1507.2" y1="1179.5" x2="1504.1" y2="1179.6"/><polygon points="1558.6,747.9 1554.7,747.6 1510.7,1179.6 1514.6,1179.9" fill="#767676" stroke="#767676" stroke-width="0.8"/><line stroke="#161616" stroke-width="1.6" x1="1514.6" y1="1179.9" x2="1510.7" y2="1179.6"/><polygon points="1548.1,747.6 1545.2,748.1 1501.2,1180.1 1504.1,1179.6" fill="#767676" stroke="#767676" stroke-width="0.8"/><line stroke="#161616" stroke-width="1.6" x1="1504.1" y1="1179.6" x2="1501.2" y2="1180.1"/><polygon points="1562.7,748.2 1558.6,747.9 1514.6,1179.9 1518.7,1180.2" fill="#767676" stroke="#767676" stroke-width="0.8"/><line stroke="#161616" stroke-width="1.6" x1="1518.7" y1="1180.2" x2="1514.6" y2="1179.9"/><polygon points="1545.2,748.1 1542.4,748.8 1498.4,1180.8 1501.2,1180.1" fill="#767676" stroke="#767676" stroke-width="0.8"/><line stroke="#161616" stroke-width="1.6" x1="1501.2" y1="1180.1" x2="1498.4" y2="1180.8"/><polygon points="1566.9,748.8 1562.7,748.2 1518.7,1180.2 1522.9,1180.8" fill="#767676" stroke="#767676" stroke-width="0.8"/><line stroke="#161616" stroke-width="1.6" x1="1522.9" y1="1180.8" x2="1518.7" y2="1180.2"/><polygon points="1571.3,749.6 1566.9,748.8 1522.9,1180.8 1527.3,1181.6" fill="#767676" stroke="#767676" stroke-width="0.8"/><line stroke="#161616" stroke-width="1.6" x1="1527.3" y1="1181.6" x2="1522.9" y2="1180.8"/><polygon points="1542.4,748.8 1539.5,749.7 1495.5,1181.7 1498.4,1180.8" fill="#767676" stroke="#767676" stroke-width="0.8"/><line stroke="#161616" stroke-width="1.6" x1="1498.4" y1="1180.8" x2="1495.5" y2="1181.7"/><polygon points="1575.7,750.9 1571.3,749.6 1527.3,1181.6 1531.7,1182.9" fill="#767676" stroke="#767676" stroke-width="0.8"/><line stroke="#161616" stroke-width="1.6" x1="1531.7" y1="1182.9" x2="1527.3" y2="1181.6"/><polygon points="1539.5,749.7 1536.4,750.9 1492.4,1182.9 1495.5,1181.7" fill="#767676" stroke="#767676" stroke-width="0.8"/><line stroke="#161616" stroke-width="1.6" x1="1495.5" y1="1181.7" x2="1492.4" y2="1182.9"/><polygon points="1997.8,749.1 1997.4,752.4 1953.4,1184.4 1953.8,1181.1" fill="#373737" stroke="#373737" stroke-width="0.8"/><line stroke="#161616" stroke-width="1.6" x1="1953.8" y1="1181.1" x2="1953.4" y2="1184.4"/><polygon points="1536.4,750.9 1533.0,752.4 1489.0,1184.4 1492.4,1182.9" fill="#767676" stroke="#767676" stroke-width="0.8"/><line stroke="#161616" stroke-width="1.6" x1="1492.4" y1="1182.9" x2="1489.0" y2="1184.4"/><polygon points="1580.2,752.7 1575.7,750.9 1531.7,1182.9 1536.2,1184.7" fill="#757575" stroke="#757575" stroke-width="0.8"/><line stroke="#161616" stroke-width="1.6" x1="1536.2" y1="1184.7" x2="1531.7" y2="1182.9"/><polygon points="1464.3,756.5 1463.4,749.0 1419.4,1181.0 1420.3,1188.5" fill="#202020" stroke="#202020" stroke-width="0.8"/><line stroke="#161616" stroke-width="1.6" x1="1420.3" y1="1188.5" x2="1419.4" y2="1181.0"/><polygon points="1533.0,752.4 1529.0,754.0 1485.0,1186.0 1489.0,1184.4" fill="#767676" stroke="#767676" stroke-width="0.8"/><line stroke="#161616" stroke-width="1.6" x1="1489.0" y1="1184.4" x2="1485.0" y2="1186.0"/><polygon points="1584.6,755.1 1580.2,752.7 1536.2,1184.7 1540.6,1187.1" fill="#707070" stroke="#707070" stroke-width="0.8"/><line stroke="#161616" stroke-width="1.6" x1="1540.6" y1="1187.1" x2="1536.2" y2="1184.7"/><polygon points="1997.4,752.4 1996.5,755.7 1952.5,1187.7 1953.4,1184.4" fill="#474747" stroke="#474747" stroke-width="0.8"/><line stroke="#161616" stroke-width="1.6" x1="1953.4" y1="1184.4" x2="1952.5" y2="1187.7"/><polygon points="1529.0,754.0 1524.3,756.1 1480.3,1188.1 1485.0,1186.0" fill="#767676" stroke="#767676" stroke-width="0.8"/><line stroke="#161616" stroke-width="1.6" x1="1485.0" y1="1186.0" x2="1480.3" y2="1188.1"/><polygon points="1589.0,758.3 1584.6,755.1 1540.6,1187.1 1545.0,1190.3" fill="#666666" stroke="#666666" stroke-width="0.8"/><line stroke="#161616" stroke-width="1.6" x1="1545.0" y1="1190.3" x2="1540.6" y2="1187.1"/><polygon points="1996.5,755.7 1995.1,759.1 1951.1,1191.1 1952.5,1187.7" fill="#595959" stroke="#595959" stroke-width="0.8"/><line stroke="#161616" stroke-width="1.6" x1="1952.5" y1="1187.7" x2="1951.1" y2="1191.1"/><polygon points="1524.3,756.1 1518.9,758.7 1474.9,1190.7 1480.3,1188.1" fill="#767676" stroke="#767676" stroke-width="0.8"/><line stroke="#161616" stroke-width="1.6" x1="1480.3" y1="1188.1" x2="1474.9" y2="1190.7"/><polygon points="1465.1,763.8 1464.3,756.5 1420.3,1188.5 1421.1,1195.8" fill="#202020" stroke="#202020" stroke-width="0.8"/><line stroke="#161616" stroke-width="1.6" x1="1421.1" y1="1195.8" x2="1420.3" y2="1188.5"/><polygon points="1518.9,758.7 1513.0,761.7 1469.0,1193.7 1474.9,1190.7" fill="#767676" stroke="#767676" stroke-width="0.8"/><line stroke="#161616" stroke-width="1.6" x1="1474.9" y1="1190.7" x2="1469.0" y2="1193.7"/><polygon points="1593.3,762.6 1589.0,758.3 1545.0,1190.3 1549.3,1194.6" fill="#595959" stroke="#595959" stroke-width="0.8"/><line stroke="#161616" stroke-width="1.6" x1="1549.3" y1="1194.6" x2="1545.0" y2="1190.3"/><polygon points="1995.1,759.1 1993.0,762.7 1949.0,1194.7 1951.1,1191.1" fill="#676767" stroke="#676767" stroke-width="0.8"/><line stroke="#161616" stroke-width="1.6" x1="1951.1" y1="1191.1" x2="1949.0" y2="1194.7"/><polygon points="1513.0,761.7 1507.0,764.9 1463.0,1196.9 1469.0,1193.7" fill="#767676" stroke="#767676" stroke-width="0.8"/><line stroke="#161616" stroke-width="1.6" x1="1469.0" y1="1193.7" x2="1463.0" y2="1196.9"/><polygon points="1993.0,762.7 1990.1,766.5 1946.1,1198.5 1949.0,1194.7" fill="#6f6f6f" stroke="#6f6f6f" stroke-width="0.8"/><line stroke="#161616" stroke-width="1.6" x1="1949.0" y1="1194.7" x2="1946.1" y2="1198.5"/><polygon points="1597.5,768.0 1593.3,762.6 1549.3,1194.6 1553.5,1200.0" fill="#4d4d4d" stroke="#4d4d4d" stroke-width="0.8"/><line stroke="#161616" stroke-width="1.6" x1="1553.5" y1="1200.0" x2="1549.3" y2="1194.6"/><polygon points="1507.0,764.9 1501.0,768.0 1457.0,1200.0 1463.0,1196.9" fill="#767676" stroke="#767676" stroke-width="0.8"/><line stroke="#161616" stroke-width="1.6" x1="1463.0" y1="1196.9" x2="1457.0" y2="1200.0"/><polygon points="1465.8,770.4 1465.1,763.8 1421.1,1195.8 1421.8,1202.4" fill="#202020" stroke="#202020" stroke-width="0.8"/><line stroke="#161616" stroke-width="1.6" x1="1421.8" y1="1202.4" x2="1421.1" y2="1195.8"/><polygon points="1990.1,766.5 1986.5,770.3 1942.5,1202.3 1946.1,1198.5" fill="#737373" stroke="#737373" stroke-width="0.8"/><line stroke="#161616" stroke-width="1.6" x1="1946.1" y1="1198.5" x2="1942.5" y2="1202.3"/><polygon points="1501.0,768.0 1495.3,771.0 1451.3,1203.0 1457.0,1200.0" fill="#767676" stroke="#767676" stroke-width="0.8"/><line stroke="#161616" stroke-width="1.6" x1="1457.0" y1="1200.0" x2="1451.3" y2="1203.0"/><polygon points="1601.7,774.1 1597.5,768.0 1553.5,1200.0 1557.7,1206.1" fill="#434343" stroke="#434343" stroke-width="0.8"/><line stroke="#161616" stroke-width="1.6" x1="1557.7" y1="1206.1" x2="1553.5" y2="1200.0"/><polygon points="1986.5,770.3 1982.3,774.2 1938.3,1206.2 1942.5,1202.3" fill="#757575" stroke="#757575" stroke-width="0.8"/><line stroke="#161616" stroke-width="1.6" x1="1942.5" y1="1202.3" x2="1938.3" y2="1206.2"/><polygon points="1495.3,771.0 1490.3,773.5 1446.3,1205.5 1451.3,1203.0" fill="#767676" stroke="#767676" stroke-width="0.8"/><line stroke="#161616" stroke-width="1.6" x1="1451.3" y1="1203.0" x2="1446.3" y2="1205.5"/><polygon points="1466.4,775.9 1465.8,770.4 1421.8,1202.4 1422.4,1207.9" fill="#202020" stroke="#202020" stroke-width="0.8"/><line stroke="#161616" stroke-width="1.6" x1="1422.4" y1="1207.9" x2="1421.8" y2="1202.4"/><polygon points="1490.3,773.5 1486.0,775.5 1442.0,1207.5 1446.3,1205.5" fill="#767676" stroke="#767676" stroke-width="0.8"/><line stroke="#161616" stroke-width="1.6" x1="1446.3" y1="1205.5" x2="1442.0" y2="1207.5"/><polygon points="1486.0,775.5 1482.5,776.9 1438.5,1208.9 1442.0,1207.5" fill="#767676" stroke="#767676" stroke-width="0.8"/><line stroke="#161616" stroke-width="1.6" x1="1442.0" y1="1207.5" x2="1438.5" y2="1208.9"/><polygon points="1982.3,774.2 1977.7,778.2 1933.7,1210.2 1938.3,1206.2" fill="#757575" stroke="#757575" stroke-width="0.8"/><line stroke="#161616" stroke-width="1.6" x1="1938.3" y1="1206.2" x2="1933.7" y2="1210.2"/><polygon points="1482.5,776.9 1479.5,777.9 1435.5,1209.9 1438.5,1208.9" fill="#767676" stroke="#767676" stroke-width="0.8"/><line stroke="#161616" stroke-width="1.6" x1="1438.5" y1="1208.9" x2="1435.5" y2="1209.9"/><polygon points="1606.0,780.7 1601.7,774.1 1557.7,1206.1 1562.0,1212.7" fill="#3e3e3e" stroke="#3e3e3e" stroke-width="0.8"/><line stroke="#161616" stroke-width="1.6" x1="1562.0" y1="1212.7" x2="1557.7" y2="1206.1"/><polygon points="1467.0,780.0 1466.4,775.9 1422.4,1207.9 1423.0,1212.0" fill="#202020" stroke="#202020" stroke-width="0.8"/><line stroke="#161616" stroke-width="1.6" x1="1423.0" y1="1212.0" x2="1422.4" y2="1207.9"/><polygon points="1479.5,777.9 1477.0,778.6 1433.0,1210.6 1435.5,1209.9" fill="#767676" stroke="#767676" stroke-width="0.8"/><line stroke="#161616" stroke-width="1.6" x1="1435.5" y1="1209.9" x2="1433.0" y2="1210.6"/><polygon points="1477.0,778.6 1474.8,779.0 1430.8,1211.0 1433.0,1210.6" fill="#767676" stroke="#767676" stroke-width="0.8"/><line stroke="#161616" stroke-width="1.6" x1="1433.0" y1="1210.6" x2="1430.8" y2="1211.0"/><polygon points="1474.8,779.0 1473.0,779.2 1429.0,1211.2 1430.8,1211.0" fill="#767676" stroke="#767676" stroke-width="0.8"/><line stroke="#161616" stroke-width="1.6" x1="1430.8" y1="1211.0" x2="1429.0" y2="1211.2"/><polygon points="1473.0,779.2 1471.4,779.4 1427.4,1211.4 1429.0,1211.2" fill="#767676" stroke="#767676" stroke-width="0.8"/><line stroke="#161616" stroke-width="1.6" x1="1429.0" y1="1211.2" x2="1427.4" y2="1211.4"/><polygon points="1471.4,779.4 1470.0,779.6 1426.0,1211.6 1427.4,1211.4" fill="#767676" stroke="#767676" stroke-width="0.8"/><line stroke="#161616" stroke-width="1.6" x1="1427.4" y1="1211.4" x2="1426.0" y2="1211.6"/><polygon points="1470.0,779.6 1468.8,779.8 1424.8,1211.8 1426.0,1211.6" fill="#767676" stroke="#767676" stroke-width="0.8"/><line stroke="#161616" stroke-width="1.6" x1="1426.0" y1="1211.6" x2="1424.8" y2="1211.8"/><polygon points="1468.8,779.8 1467.9,780.4 1423.9,1212.4 1424.8,1211.8" fill="#767676" stroke="#767676" stroke-width="0.8"/><line stroke="#161616" stroke-width="1.6" x1="1424.8" y1="1211.8" x2="1423.9" y2="1212.4"/><polygon points="1977.7,778.2 1973.0,782.2 1929.0,1214.2 1933.7,1210.2" fill="#757575" stroke="#757575" stroke-width="0.8"/><line stroke="#161616" stroke-width="1.6" x1="1933.7" y1="1210.2" x2="1929.0" y2="1214.2"/><polygon points="1467.9,780.4 1467.4,781.3 1423.4,1213.3 1423.9,1212.4" fill="#747474" stroke="#747474" stroke-width="0.8"/><line stroke="#161616" stroke-width="1.6" x1="1423.9" y1="1212.4" x2="1423.4" y2="1213.3"/><polygon points="1467.4,782.5 1467.0,780.0 1423.0,1212.0 1423.4,1214.5" fill="#202020" stroke="#202020" stroke-width="0.8"/><line stroke="#161616" stroke-width="1.6" x1="1423.4" y1="1214.5" x2="1423.0" y2="1212.0"/><polygon points="1467.4,781.3 1467.2,782.4 1423.2,1214.4 1423.4,1213.3" fill="#686868" stroke="#686868" stroke-width="0.8"/><line stroke="#161616" stroke-width="1.6" x1="1423.4" y1="1213.3" x2="1423.2" y2="1214.4"/><polygon points="1467.2,782.4 1467.3,783.4 1423.3,1215.4 1423.2,1214.4" fill="#606060" stroke="#606060" stroke-width="0.8"/><line stroke="#161616" stroke-width="1.6" x1="1423.2" y1="1214.4" x2="1423.3" y2="1215.4"/><polygon points="1467.5,783.6 1467.4,782.5 1423.4,1214.5 1423.5,1215.6" fill="#202020" stroke="#202020" stroke-width="0.8"/><line stroke="#161616" stroke-width="1.6" x1="1423.5" y1="1215.6" x2="1423.4" y2="1214.5"/><polygon points="1467.3,783.4 1467.4,783.9 1423.4,1215.9 1423.3,1215.4" fill="#757575" stroke="#757575" stroke-width="0.8"/><line stroke="#161616" stroke-width="1.6" x1="1423.3" y1="1215.4" x2="1423.4" y2="1215.9"/><polygon points="1467.4,783.9 1467.5,783.6 1423.5,1215.6 1423.4,1215.9" fill="#202020" stroke="#202020" stroke-width="0.8"/><line stroke="#161616" stroke-width="1.6" x1="1423.4" y1="1215.9" x2="1423.5" y2="1215.6"/><polygon points="1610.3,787.5 1606.0,780.7 1562.0,1212.7 1566.3,1219.5" fill="#3d3d3d" stroke="#3d3d3d" stroke-width="0.8"/><line stroke="#161616" stroke-width="1.6" x1="1566.3" y1="1219.5" x2="1562.0" y2="1212.7"/><polygon points="1973.0,782.2 1968.3,786.2 1924.3,1218.2 1929.0,1214.2" fill="#757575" stroke="#757575" stroke-width="0.8"/><line stroke="#161616" stroke-width="1.6" x1="1929.0" y1="1214.2" x2="1924.3" y2="1218.2"/><polygon points="1968.3,786.2 1963.7,790.3 1919.7,1222.3 1924.3,1218.2" fill="#757575" stroke="#757575" stroke-width="0.8"/><line stroke="#161616" stroke-width="1.6" x1="1924.3" y1="1218.2" x2="1919.7" y2="1222.3"/><polygon points="1614.6,794.1 1610.3,787.5 1566.3,1219.5 1570.6,1226.1" fill="#3f3f3f" stroke="#3f3f3f" stroke-width="0.8"/><line stroke="#161616" stroke-width="1.6" x1="1570.6" y1="1226.1" x2="1566.3" y2="1219.5"/><polygon points="1963.7,790.3 1959.5,794.4 1915.5,1226.4 1919.7,1222.3" fill="#757575" stroke="#757575" stroke-width="0.8"/><line stroke="#161616" stroke-width="1.6" x1="1919.7" y1="1222.3" x2="1915.5" y2="1226.4"/><polygon points="1959.5,794.4 1955.4,798.7 1911.4,1230.7 1915.5,1226.4" fill="#757575" stroke="#757575" stroke-width="0.8"/><line stroke="#161616" stroke-width="1.6" x1="1915.5" y1="1226.4" x2="1911.4" y2="1230.7"/><polygon points="1619.0,800.3 1614.6,794.1 1570.6,1226.1 1575.0,1232.3" fill="#444444" stroke="#444444" stroke-width="0.8"/><line stroke="#161616" stroke-width="1.6" x1="1575.0" y1="1232.3" x2="1570.6" y2="1226.1"/><polygon points="1955.4,798.7 1951.2,803.2 1907.2,1235.2 1911.4,1230.7" fill="#757575" stroke="#757575" stroke-width="0.8"/><line stroke="#161616" stroke-width="1.6" x1="1911.4" y1="1230.7" x2="1907.2" y2="1235.2"/><polygon points="1623.5,805.6 1619.0,800.3 1575.0,1232.3 1579.5,1237.6" fill="#4b4b4b" stroke="#4b4b4b" stroke-width="0.8"/><line stroke="#161616" stroke-width="1.6" x1="1579.5" y1="1237.6" x2="1575.0" y2="1232.3"/><polygon points="1951.2,803.2 1946.9,807.8 1902.9,1239.8 1907.2,1235.2" fill="#747474" stroke="#747474" stroke-width="0.8"/><line stroke="#161616" stroke-width="1.6" x1="1907.2" y1="1235.2" x2="1902.9" y2="1239.8"/><polygon points="1628.2,810.3 1623.5,805.6 1579.5,1237.6 1584.2,1242.3" fill="#535353" stroke="#535353" stroke-width="0.8"/><line stroke="#161616" stroke-width="1.6" x1="1584.2" y1="1242.3" x2="1579.5" y2="1237.6"/><polygon points="1946.9,807.8 1942.7,812.4 1898.7,1244.4 1902.9,1239.8" fill="#747474" stroke="#747474" stroke-width="0.8"/><line stroke="#161616" stroke-width="1.6" x1="1902.9" y1="1239.8" x2="1898.7" y2="1244.4"/><polygon points="1633.0,814.7 1628.2,810.3 1584.2,1242.3 1589.0,1246.7" fill="#5b5b5b" stroke="#5b5b5b" stroke-width="0.8"/><line stroke="#161616" stroke-width="1.6" x1="1589.0" y1="1246.7" x2="1584.2" y2="1242.3"/><polygon points="1942.7,812.4 1938.7,816.9 1894.7,1248.9 1898.7,1244.4" fill="#737373" stroke="#737373" stroke-width="0.8"/><line stroke="#161616" stroke-width="1.6" x1="1898.7" y1="1244.4" x2="1894.7" y2="1248.9"/><polygon points="1638.0,818.8 1633.0,814.7 1589.0,1246.7 1594.0,1250.8" fill="#616161" stroke="#616161" stroke-width="0.8"/><line stroke="#161616" stroke-width="1.6" x1="1594.0" y1="1250.8" x2="1589.0" y2="1246.7"/><polygon points="1938.7,816.9 1935.2,821.1 1891.2,1253.1 1894.7,1248.9" fill="#727272" stroke="#727272" stroke-width="0.8"/><line stroke="#161616" stroke-width="1.6" x1="1894.7" y1="1248.9" x2="1891.2" y2="1253.1"/><polygon points="1643.0,822.7 1638.0,818.8 1594.0,1250.8 1599.0,1254.7" fill="#666666" stroke="#666666" stroke-width="0.8"/><line stroke="#161616" stroke-width="1.6" x1="1599.0" y1="1254.7" x2="1594.0" y2="1250.8"/><polygon points="1935.2,821.1 1932.2,824.8 1888.2,1256.8 1891.2,1253.1" fill="#717171" stroke="#717171" stroke-width="0.8"/><line stroke="#161616" stroke-width="1.6" x1="1891.2" y1="1253.1" x2="1888.2" y2="1256.8"/><polygon points="1648.0,826.3 1643.0,822.7 1599.0,1254.7 1604.0,1258.3" fill="#696969" stroke="#696969" stroke-width="0.8"/><line stroke="#161616" stroke-width="1.6" x1="1604.0" y1="1258.3" x2="1599.0" y2="1254.7"/><polygon points="1932.2,824.8 1929.8,828.0 1885.8,1260.0 1888.2,1256.8" fill="#6e6e6e" stroke="#6e6e6e" stroke-width="0.8"/><line stroke="#161616" stroke-width="1.6" x1="1888.2" y1="1256.8" x2="1885.8" y2="1260.0"/><polygon points="1652.9,829.6 1648.0,826.3 1604.0,1258.3 1608.9,1261.6" fill="#6b6b6b" stroke="#6b6b6b" stroke-width="0.8"/><line stroke="#161616" stroke-width="1.6" x1="1608.9" y1="1261.6" x2="1604.0" y2="1258.3"/><polygon points="1929.8,828.0 1928.2,830.5 1884.2,1262.5 1885.8,1260.0" fill="#6a6a6a" stroke="#6a6a6a" stroke-width="0.8"/><line stroke="#161616" stroke-width="1.6" x1="1885.8" y1="1260.0" x2="1884.2" y2="1262.5"/><polygon points="1657.6,832.8 1652.9,829.6 1608.9,1261.6 1613.6,1264.8" fill="#6d6d6d" stroke="#6d6d6d" stroke-width="0.8"/><line stroke="#161616" stroke-width="1.6" x1="1613.6" y1="1264.8" x2="1608.9" y2="1261.6"/><polygon points="1928.2,830.5 1927.2,832.5 1883.2,1264.5 1884.2,1262.5" fill="#616161" stroke="#616161" stroke-width="0.8"/><line stroke="#161616" stroke-width="1.6" x1="1884.2" y1="1262.5" x2="1883.2" y2="1264.5"/><polygon points="1927.2,832.5 1926.7,834.0 1882.7,1266.0 1883.2,1264.5" fill="#505050" stroke="#505050" stroke-width="0.8"/><line stroke="#161616" stroke-width="1.6" x1="1883.2" y1="1264.5" x2="1882.7" y2="1266.0"/><polygon points="1662.0,835.7 1657.6,832.8 1613.6,1264.8 1618.0,1267.7" fill="#6e6e6e" stroke="#6e6e6e" stroke-width="0.8"/><line stroke="#161616" stroke-width="1.6" x1="1618.0" y1="1267.7" x2="1613.6" y2="1264.8"/><polygon points="1926.7,834.0 1926.6,835.2 1882.6,1267.2 1882.7,1266.0" fill="#343434" stroke="#343434" stroke-width="0.8"/><line stroke="#161616" stroke-width="1.6" x1="1882.7" y1="1266.0" x2="1882.6" y2="1267.2"/><polygon points="1926.6,835.2 1926.8,836.3 1882.8,1268.3 1882.6,1267.2" fill="#202020" stroke="#202020" stroke-width="0.8"/><line stroke="#161616" stroke-width="1.6" x1="1882.6" y1="1267.2" x2="1882.8" y2="1268.3"/><polygon points="1666.1,838.3 1662.0,835.7 1618.0,1267.7 1622.1,1270.3" fill="#707070" stroke="#707070" stroke-width="0.8"/><line stroke="#161616" stroke-width="1.6" x1="1622.1" y1="1270.3" x2="1618.0" y2="1267.7"/><polygon points="1669.8,840.6 1666.1,838.3 1622.1,1270.3 1625.8,1272.6" fill="#717171" stroke="#717171" stroke-width="0.8"/><line stroke="#161616" stroke-width="1.6" x1="1625.8" y1="1272.6" x2="1622.1" y2="1270.3"/><polygon points="1673.3,842.6 1669.8,840.6 1625.8,1272.6 1629.3,1274.6" fill="#737373" stroke="#737373" stroke-width="0.8"/><line stroke="#161616" stroke-width="1.6" x1="1629.3" y1="1274.6" x2="1625.8" y2="1272.6"/><polygon points="1676.7,844.4 1673.3,842.6 1629.3,1274.6 1632.7,1276.4" fill="#747474" stroke="#747474" stroke-width="0.8"/><line stroke="#161616" stroke-width="1.6" x1="1632.7" y1="1276.4" x2="1629.3" y2="1274.6"/><polygon points="1680.2,846.0 1676.7,844.4 1632.7,1276.4 1636.2,1278.0" fill="#757575" stroke="#757575" stroke-width="0.8"/><line stroke="#161616" stroke-width="1.6" x1="1636.2" y1="1278.0" x2="1632.7" y2="1276.4"/><polygon points="1683.8,847.6 1680.2,846.0 1636.2,1278.0 1639.8,1279.6" fill="#757575" stroke="#757575" stroke-width="0.8"/><line stroke="#161616" stroke-width="1.6" x1="1639.8" y1="1279.6" x2="1636.2" y2="1278.0"/><polygon points="1687.7,849.1 1683.8,847.6 1639.8,1279.6 1643.7,1281.1" fill="#757575" stroke="#757575" stroke-width="0.8"/><line stroke="#161616" stroke-width="1.6" x1="1643.7" y1="1281.1" x2="1639.8" y2="1279.6"/><polygon points="1692.0,850.7 1687.7,849.1 1643.7,1281.1 1648.0,1282.7" fill="#767676" stroke="#767676" stroke-width="0.8"/><line stroke="#161616" stroke-width="1.6" x1="1648.0" y1="1282.7" x2="1643.7" y2="1281.1"/><polygon points="1696.5,852.3 1692.0,850.7 1648.0,1282.7 1652.5,1284.3" fill="#767676" stroke="#767676" stroke-width="0.8"/><line stroke="#161616" stroke-width="1.6" x1="1652.5" y1="1284.3" x2="1648.0" y2="1282.7"/><polygon points="1700.8,854.0 1696.5,852.3 1652.5,1284.3 1656.8,1286.0" fill="#767676" stroke="#767676" stroke-width="0.8"/><line stroke="#161616" stroke-width="1.6" x1="1656.8" y1="1286.0" x2="1652.5" y2="1284.3"/><polygon points="1705.3,855.6 1700.8,854.0 1656.8,1286.0 1661.3,1287.6" fill="#767676" stroke="#767676" stroke-width="0.8"/><line stroke="#161616" stroke-width="1.6" x1="1661.3" y1="1287.6" x2="1656.8" y2="1286.0"/><polygon points="1710.0,857.2 1705.3,855.6 1661.3,1287.6 1666.0,1289.2" fill="#767676" stroke="#767676" stroke-width="0.8"/><line stroke="#161616" stroke-width="1.6" x1="1666.0" y1="1289.2" x2="1661.3" y2="1287.6"/><polygon points="1715.2,858.6 1710.0,857.2 1666.0,1289.2 1671.2,1290.6" fill="#767676" stroke="#767676" stroke-width="0.8"/><line stroke="#161616" stroke-width="1.6" x1="1671.2" y1="1290.6" x2="1666.0" y2="1289.2"/><polygon points="1720.9,859.8 1715.2,858.6 1671.2,1290.6 1676.9,1291.8" fill="#767676" stroke="#767676" stroke-width="0.8"/><line stroke="#161616" stroke-width="1.6" x1="1676.9" y1="1291.8" x2="1671.2" y2="1290.6"/><polygon points="1821.0,859.3 1813.4,859.4 1769.4,1291.4 1777.0,1291.3" fill="#767676" stroke="#767676" stroke-width="0.8"/><line stroke="#161616" stroke-width="1.6" x1="1777.0" y1="1291.3" x2="1769.4" y2="1291.4"/><polygon points="1826.1,859.5 1821.0,859.3 1777.0,1291.3 1782.1,1291.5" fill="#767676" stroke="#767676" stroke-width="0.8"/><line stroke="#161616" stroke-width="1.6" x1="1782.1" y1="1291.5" x2="1777.0" y2="1291.3"/><polygon points="1813.4,859.4 1803.6,859.7 1759.6,1291.7 1769.4,1291.4" fill="#767676" stroke="#767676" stroke-width="0.8"/><line stroke="#161616" stroke-width="1.6" x1="1769.4" y1="1291.4" x2="1759.6" y2="1291.7"/><polygon points="1829.5,859.8 1826.1,859.5 1782.1,1291.5 1785.5,1291.8" fill="#767676" stroke="#767676" stroke-width="0.8"/><line stroke="#161616" stroke-width="1.6" x1="1785.5" y1="1291.8" x2="1782.1" y2="1291.5"/><polygon points="1831.4,860.2 1829.5,859.8 1785.5,1291.8 1787.4,1292.2" fill="#767676" stroke="#767676" stroke-width="0.8"/><line stroke="#161616" stroke-width="1.6" x1="1787.4" y1="1292.2" x2="1785.5" y2="1291.8"/><polygon points="1803.6,859.7 1792.2,860.2 1748.2,1292.2 1759.6,1291.7" fill="#767676" stroke="#767676" stroke-width="0.8"/><line stroke="#161616" stroke-width="1.6" x1="1759.6" y1="1291.7" x2="1748.2" y2="1292.2"/><polygon points="1727.5,860.8 1720.9,859.8 1676.9,1291.8 1683.5,1292.8" fill="#767676" stroke="#767676" stroke-width="0.8"/><line stroke="#161616" stroke-width="1.6" x1="1683.5" y1="1292.8" x2="1676.9" y2="1291.8"/><polygon points="1832.3,860.6 1831.4,860.2 1787.4,1292.2 1788.3,1292.6" fill="#767676" stroke="#767676" stroke-width="0.8"/><line stroke="#161616" stroke-width="1.6" x1="1788.3" y1="1292.6" x2="1787.4" y2="1292.2"/><polygon points="1792.2,860.2 1779.9,860.8 1735.9,1292.8 1748.2,1292.2" fill="#767676" stroke="#767676" stroke-width="0.8"/><line stroke="#161616" stroke-width="1.6" x1="1748.2" y1="1292.2" x2="1735.9" y2="1292.8"/><polygon points="1832.6,861.2 1832.3,860.6 1788.3,1292.6 1788.6,1293.2" fill="#747474" stroke="#747474" stroke-width="0.8"/><line stroke="#161616" stroke-width="1.6" x1="1788.6" y1="1293.2" x2="1788.3" y2="1292.6"/><polygon points="1779.9,860.8 1767.3,861.3 1723.3,1293.3 1735.9,1292.8" fill="#767676" stroke="#767676" stroke-width="0.8"/><line stroke="#161616" stroke-width="1.6" x1="1735.9" y1="1292.8" x2="1723.3" y2="1293.3"/><polygon points="1735.0,861.5 1727.5,860.8 1683.5,1292.8 1691.0,1293.5" fill="#767676" stroke="#767676" stroke-width="0.8"/><line stroke="#161616" stroke-width="1.6" x1="1691.0" y1="1293.5" x2="1683.5" y2="1292.8"/><polygon points="1767.3,861.3 1755.2,861.7 1711.2,1293.7 1723.3,1293.3" fill="#767676" stroke="#767676" stroke-width="0.8"/><line stroke="#161616" stroke-width="1.6" x1="1723.3" y1="1293.3" x2="1711.2" y2="1293.7"/><polygon points="1832.8,861.9 1832.6,861.2 1788.6,1293.2 1788.8,1293.9" fill="#666666" stroke="#666666" stroke-width="0.8"/><line stroke="#161616" stroke-width="1.6" x1="1788.8" y1="1293.9" x2="1788.6" y2="1293.2"/><polygon points="1744.2,861.8 1735.0,861.5 1691.0,1293.5 1700.2,1293.8" fill="#767676" stroke="#767676" stroke-width="0.8"/><line stroke="#161616" stroke-width="1.6" x1="1700.2" y1="1293.8" x2="1691.0" y2="1293.5"/><polygon points="1755.2,861.7 1744.2,861.8 1700.2,1293.8 1711.2,1293.7" fill="#767676" stroke="#767676" stroke-width="0.8"/><line stroke="#161616" stroke-width="1.6" x1="1711.2" y1="1293.7" x2="1700.2" y2="1293.8"/><polygon points="1833.1,862.7 1832.8,861.9 1788.8,1293.9 1789.1,1294.7" fill="#5a5a5a" stroke="#5a5a5a" stroke-width="0.8"/><line stroke="#161616" stroke-width="1.6" x1="1789.1" y1="1294.7" x2="1788.8" y2="1293.9"/><polygon points="1834.0,863.6 1833.1,862.7 1789.1,1294.7 1790.0,1295.6" fill="#5a5a5a" stroke="#5a5a5a" stroke-width="0.8"/><line stroke="#161616" stroke-width="1.6" x1="1790.0" y1="1295.6" x2="1789.1" y2="1294.7"/><polygon points="1835.3,864.4 1834.0,863.6 1790.0,1295.6 1791.3,1296.4" fill="#606060" stroke="#606060" stroke-width="0.8"/><line stroke="#161616" stroke-width="1.6" x1="1791.3" y1="1296.4" x2="1790.0" y2="1295.6"/><polygon points="1836.4,865.0 1835.3,864.4 1791.3,1296.4 1792.4,1297.0" fill="#646464" stroke="#646464" stroke-width="0.8"/><line stroke="#161616" stroke-width="1.6" x1="1792.4" y1="1297.0" x2="1791.3" y2="1296.4"/><polygon points="1837.4,865.6 1836.4,865.0 1792.4,1297.0 1793.4,1297.6" fill="#616161" stroke="#616161" stroke-width="0.8"/><line stroke="#161616" stroke-width="1.6" x1="1793.4" y1="1297.6" x2="1792.4" y2="1297.0"/><polygon points="1838.4,866.3 1837.4,865.6 1793.4,1297.6 1794.4,1298.3" fill="#565656" stroke="#565656" stroke-width="0.8"/><line stroke="#161616" stroke-width="1.6" x1="1794.4" y1="1298.3" x2="1793.4" y2="1297.6"/><polygon points="1839.3,867.4 1838.4,866.3 1794.4,1298.3 1795.3,1299.4" fill="#414141" stroke="#414141" stroke-width="0.8"/><line stroke="#161616" stroke-width="1.6" x1="1795.3" y1="1299.4" x2="1794.4" y2="1298.3"/><polygon points="1840.3,869.0 1839.3,867.4 1795.3,1299.4 1796.3,1301.0" fill="#2e2e2e" stroke="#2e2e2e" stroke-width="0.8"/><line stroke="#161616" stroke-width="1.6" x1="1796.3" y1="1301.0" x2="1795.3" y2="1299.4"/><polygon points="1841.4,871.3 1840.3,869.0 1796.3,1301.0 1797.4,1303.3" fill="#242424" stroke="#242424" stroke-width="0.8"/><line stroke="#161616" stroke-width="1.6" x1="1797.4" y1="1303.3" x2="1796.3" y2="1301.0"/><polygon points="1842.7,874.4 1841.4,871.3 1797.4,1303.3 1798.7,1306.4" fill="#202020" stroke="#202020" stroke-width="0.8"/><line stroke="#161616" stroke-width="1.6" x1="1798.7" y1="1306.4" x2="1797.4" y2="1303.3"/><polygon points="1844.1,878.6 1842.7,874.4 1798.7,1306.4 1800.1,1310.6" fill="#202020" stroke="#202020" stroke-width="0.8"/><line stroke="#161616" stroke-width="1.6" x1="1800.1" y1="1310.6" x2="1798.7" y2="1306.4"/><polygon points="1845.6,883.9 1844.1,878.6 1800.1,1310.6 1801.6,1315.9" fill="#202020" stroke="#202020" stroke-width="0.8"/><line stroke="#161616" stroke-width="1.6" x1="1801.6" y1="1315.9" x2="1800.1" y2="1310.6"/><polygon points="1847.2,890.0 1845.6,883.9 1801.6,1315.9 1803.2,1322.0" fill="#202020" stroke="#202020" stroke-width="0.8"/><line stroke="#161616" stroke-width="1.6" x1="1803.2" y1="1322.0" x2="1801.6" y2="1315.9"/><polygon points="1848.9,896.5 1847.2,890.0 1803.2,1322.0 1804.9,1328.5" fill="#202020" stroke="#202020" stroke-width="0.8"/><line stroke="#161616" stroke-width="1.6" x1="1804.9" y1="1328.5" x2="1803.2" y2="1322.0"/><polygon points="1850.6,903.2 1848.9,896.5 1804.9,1328.5 1806.6,1335.2" fill="#202020" stroke="#202020" stroke-width="0.8"/><line stroke="#161616" stroke-width="1.6" x1="1806.6" y1="1335.2" x2="1804.9" y2="1328.5"/><polygon points="1852.3,909.8 1850.6,903.2 1806.6,1335.2 1808.3,1341.8" fill="#202020" stroke="#202020" stroke-width="0.8"/><line stroke="#161616" stroke-width="1.6" x1="1808.3" y1="1341.8" x2="1806.6" y2="1335.2"/><polygon points="1854.0,916.1 1852.3,909.8 1808.3,1341.8 1810.0,1348.1" fill="#202020" stroke="#202020" stroke-width="0.8"/><line stroke="#161616" stroke-width="1.6" x1="1810.0" y1="1348.1" x2="1808.3" y2="1341.8"/><polygon points="1855.6,921.6 1854.0,916.1 1810.0,1348.1 1811.6,1353.6" fill="#202020" stroke="#202020" stroke-width="0.8"/><line stroke="#161616" stroke-width="1.6" x1="1811.6" y1="1353.6" x2="1810.0" y2="1348.1"/><polygon points="1857.1,926.7 1855.6,921.6 1811.6,1353.6 1813.1,1358.7" fill="#202020" stroke="#202020" stroke-width="0.8"/><line stroke="#161616" stroke-width="1.6" x1="1813.1" y1="1358.7" x2="1811.6" y2="1353.6"/><polygon points="1965.6,925.2 1965.6,927.7 1921.6,1359.7 1921.6,1357.2" fill="#212121" stroke="#212121" stroke-width="0.8"/><line stroke="#161616" stroke-width="1.6" x1="1921.6" y1="1357.2" x2="1921.6" y2="1359.7"/><polygon points="1965.6,927.7 1965.5,930.1 1921.5,1362.1 1921.6,1359.7" fill="#272727" stroke="#272727" stroke-width="0.8"/><line stroke="#161616" stroke-width="1.6" x1="1921.6" y1="1359.7" x2="1921.5" y2="1362.1"/><polygon points="1858.4,931.8 1857.1,926.7 1813.1,1358.7 1814.4,1363.8" fill="#202020" stroke="#202020" stroke-width="0.8"/><line stroke="#161616" stroke-width="1.6" x1="1814.4" y1="1363.8" x2="1813.1" y2="1358.7"/><polygon points="1965.5,930.1 1965.1,932.5 1921.1,1364.5 1921.5,1362.1" fill="#313131" stroke="#313131" stroke-width="0.8"/><line stroke="#161616" stroke-width="1.6" x1="1921.5" y1="1362.1" x2="1921.1" y2="1364.5"/><polygon points="1965.1,932.5 1964.4,934.7 1920.4,1366.7 1921.1,1364.5" fill="#3c3c3c" stroke="#3c3c3c" stroke-width="0.8"/><line stroke="#161616" stroke-width="1.6" x1="1921.1" y1="1364.5" x2="1920.4" y2="1366.7"/><polygon points="1859.7,936.7 1858.4,931.8 1814.4,1363.8 1815.7,1368.7" fill="#202020" stroke="#202020" stroke-width="0.8"/><line stroke="#161616" stroke-width="1.6" x1="1815.7" y1="1368.7" x2="1814.4" y2="1363.8"/><polygon points="1964.4,934.7 1963.5,937.0 1919.5,1369.0 1920.4,1366.7" fill="#494949" stroke="#494949" stroke-width="0.8"/><line stroke="#161616" stroke-width="1.6" x1="1920.4" y1="1366.7" x2="1919.5" y2="1369.0"/><polygon points="1963.5,937.0 1962.4,939.2 1918.4,1371.2 1919.5,1369.0" fill="#555555" stroke="#555555" stroke-width="0.8"/><line stroke="#161616" stroke-width="1.6" x1="1919.5" y1="1369.0" x2="1918.4" y2="1371.2"/><polygon points="1861.0,941.3 1859.7,936.7 1815.7,1368.7 1817.0,1373.3" fill="#202020" stroke="#202020" stroke-width="0.8"/><line stroke="#161616" stroke-width="1.6" x1="1817.0" y1="1373.3" x2="1815.7" y2="1368.7"/><polygon points="1962.4,939.2 1961.3,941.4 1917.3,1373.4 1918.4,1371.2" fill="#616161" stroke="#616161" stroke-width="0.8"/><line stroke="#161616" stroke-width="1.6" x1="1918.4" y1="1371.2" x2="1917.3" y2="1373.4"/><polygon points="1961.3,941.4 1960.0,943.6 1916.0,1375.6 1917.3,1373.4" fill="#6c6c6c" stroke="#6c6c6c" stroke-width="0.8"/><line stroke="#161616" stroke-width="1.6" x1="1917.3" y1="1373.4" x2="1916.0" y2="1375.6"/><polygon points="1862.4,945.7 1861.0,941.3 1817.0,1373.3 1818.4,1377.7" fill="#212121" stroke="#212121" stroke-width="0.8"/><line stroke="#161616" stroke-width="1.6" x1="1818.4" y1="1377.7" x2="1817.0" y2="1373.3"/><polygon points="1960.0,943.6 1958.5,945.7 1914.5,1377.7 1916.0,1375.6" fill="#727272" stroke="#727272" stroke-width="0.8"/><line stroke="#161616" stroke-width="1.6" x1="1916.0" y1="1375.6" x2="1914.5" y2="1377.7"/><polygon points="1958.5,945.7 1956.6,947.7 1912.6,1379.7 1914.5,1377.7" fill="#757575" stroke="#757575" stroke-width="0.8"/><line stroke="#161616" stroke-width="1.6" x1="1914.5" y1="1377.7" x2="1912.6" y2="1379.7"/><polygon points="1864.1,949.7 1862.4,945.7 1818.4,1377.7 1820.1,1381.7" fill="#272727" stroke="#272727" stroke-width="0.8"/><line stroke="#161616" stroke-width="1.6" x1="1820.1" y1="1381.7" x2="1818.4" y2="1377.7"/><polygon points="1956.6,947.7 1954.2,949.6 1910.2,1381.6 1912.6,1379.7" fill="#767676" stroke="#767676" stroke-width="0.8"/><line stroke="#161616" stroke-width="1.6" x1="1912.6" y1="1379.7" x2="1910.2" y2="1381.6"/><polygon points="1954.2,949.6 1951.3,951.3 1907.3,1383.3 1910.2,1381.6" fill="#767676" stroke="#767676" stroke-width="0.8"/><line stroke="#161616" stroke-width="1.6" x1="1910.2" y1="1381.6" x2="1907.3" y2="1383.3"/><polygon points="1866.1,953.1 1864.1,949.7 1820.1,1381.7 1822.1,1385.1" fill="#353535" stroke="#353535" stroke-width="0.8"/><line stroke="#161616" stroke-width="1.6" x1="1822.1" y1="1385.1" x2="1820.1" y2="1381.7"/><polygon points="1951.3,951.3 1947.6,953.0 1903.6,1385.0 1907.3,1383.3" fill="#767676" stroke="#767676" stroke-width="0.8"/><line stroke="#161616" stroke-width="1.6" x1="1907.3" y1="1383.3" x2="1903.6" y2="1385.0"/><polygon points="1947.6,953.0 1942.9,954.6 1898.9,1386.6 1903.6,1385.0" fill="#767676" stroke="#767676" stroke-width="0.8"/><line stroke="#161616" stroke-width="1.6" x1="1903.6" y1="1385.0" x2="1898.9" y2="1386.6"/><polygon points="1868.5,956.0 1866.1,953.1 1822.1,1385.1 1824.5,1388.0" fill="#4b4b4b" stroke="#4b4b4b" stroke-width="0.8"/><line stroke="#161616" stroke-width="1.6" x1="1824.5" y1="1388.0" x2="1822.1" y2="1385.1"/><polygon points="1942.9,954.6 1937.2,956.2 1893.2,1388.2 1898.9,1386.6" fill="#767676" stroke="#767676" stroke-width="0.8"/><line stroke="#161616" stroke-width="1.6" x1="1898.9" y1="1386.6" x2="1893.2" y2="1388.2"/><polygon points="1937.2,956.2 1930.8,957.7 1886.8,1389.7 1893.2,1388.2" fill="#767676" stroke="#767676" stroke-width="0.8"/><line stroke="#161616" stroke-width="1.6" x1="1893.2" y1="1388.2" x2="1886.8" y2="1389.7"/><polygon points="1871.3,958.3 1868.5,956.0 1824.5,1388.0 1827.3,1390.3" fill="#626262" stroke="#626262" stroke-width="0.8"/><line stroke="#161616" stroke-width="1.6" x1="1827.3" y1="1390.3" x2="1824.5" y2="1388.0"/><polygon points="1930.8,957.7 1924.0,959.2 1880.0,1391.2 1886.8,1389.7" fill="#767676" stroke="#767676" stroke-width="0.8"/><line stroke="#161616" stroke-width="1.6" x1="1886.8" y1="1389.7" x2="1880.0" y2="1391.2"/><polygon points="1874.4,960.0 1871.3,958.3 1827.3,1390.3 1830.4,1392.0" fill="#717171" stroke="#717171" stroke-width="0.8"/><line stroke="#161616" stroke-width="1.6" x1="1830.4" y1="1392.0" x2="1827.3" y2="1390.3"/><polygon points="1924.0,959.2 1917.0,960.4 1873.0,1392.4 1880.0,1391.2" fill="#767676" stroke="#767676" stroke-width="0.8"/><line stroke="#161616" stroke-width="1.6" x1="1880.0" y1="1391.2" x2="1873.0" y2="1392.4"/><polygon points="1877.7,961.2 1874.4,960.0 1830.4,1392.0 1833.7,1393.2" fill="#757575" stroke="#757575" stroke-width="0.8"/><line stroke="#161616" stroke-width="1.6" x1="1833.7" y1="1393.2" x2="1830.4" y2="1392.0"/><polygon points="1917.0,960.4 1910.3,961.4 1866.3,1393.4 1873.0,1392.4" fill="#767676" stroke="#767676" stroke-width="0.8"/><line stroke="#161616" stroke-width="1.6" x1="1873.0" y1="1392.4" x2="1866.3" y2="1393.4"/><polygon points="1881.3,962.0 1877.7,961.2 1833.7,1393.2 1837.3,1394.0" fill="#767676" stroke="#767676" stroke-width="0.8"/><line stroke="#161616" stroke-width="1.6" x1="1837.3" y1="1394.0" x2="1833.7" y2="1393.2"/><polygon points="1910.3,961.4 1904.0,962.1 1860.0,1394.1 1866.3,1393.4" fill="#767676" stroke="#767676" stroke-width="0.8"/><line stroke="#161616" stroke-width="1.6" x1="1866.3" y1="1393.4" x2="1860.0" y2="1394.1"/><polygon points="1885.2,962.5 1881.3,962.0 1837.3,1394.0 1841.2,1394.5" fill="#767676" stroke="#767676" stroke-width="0.8"/><line stroke="#161616" stroke-width="1.6" x1="1841.2" y1="1394.5" x2="1837.3" y2="1394.0"/><polygon points="1904.0,962.1 1898.6,962.5 1854.6,1394.5 1860.0,1394.1" fill="#767676" stroke="#767676" stroke-width="0.8"/><line stroke="#161616" stroke-width="1.6" x1="1860.0" y1="1394.1" x2="1854.6" y2="1394.5"/><polygon points="1889.3,962.7 1885.2,962.5 1841.2,1394.5 1845.3,1394.7" fill="#767676" stroke="#767676" stroke-width="0.8"/><line stroke="#161616" stroke-width="1.6" x1="1845.3" y1="1394.7" x2="1841.2" y2="1394.5"/><polygon points="1898.6,962.5 1893.8,962.6 1849.8,1394.6 1854.6,1394.5" fill="#767676" stroke="#767676" stroke-width="0.8"/><line stroke="#161616" stroke-width="1.6" x1="1854.6" y1="1394.5" x2="1849.8" y2="1394.6"/><polygon points="1893.8,962.6 1889.3,962.7 1845.3,1394.7 1849.8,1394.6" fill="#767676" stroke="#767676" stroke-width="0.8"/><line stroke="#161616" stroke-width="1.6" x1="1849.8" y1="1394.6" x2="1845.3" y2="1394.7"/></g>
<path d="M1191.5 261.7 L1191.0 256.7 L1190.6 251.5 L1190.5 246.2 L1190.7 240.9 L1191.2 235.7 L1192.1 230.7 L1193.3 226.1 L1195.0 222.0 L1197.2 218.3 L1200.0 214.9 L1203.2 211.8 L1206.8 208.9 L1210.5 206.3 L1214.4 204.0 L1218.3 201.9 L1222.0 200.0 L1225.7 198.4 L1229.4 197.0 L1233.2 195.9 L1237.1 195.1 L1241.0 194.4 L1244.9 194.1 L1249.0 193.9 L1253.0 194.0 L1257.2 194.3 L1261.7 194.7 L1266.3 195.3 L1271.0 196.2 L1275.5 197.4 L1279.7 198.9 L1283.6 200.7 L1287.0 203.0 L1289.9 205.7 L1292.3 208.8 L1294.5 212.3 L1296.3 216.1 L1298.0 220.2 L1299.6 224.6 L1301.1 229.2 L1302.6 233.9 L1304.1 239.2 L1305.5 245.2 L1306.7 251.7 L1307.9 258.3 L1309.0 264.7 L1310.0 270.7 L1311.0 275.9 L1311.9 280.0 L1312.7 283.0 L1313.4 285.0 L1314.0 286.4 L1314.6 287.3 L1315.1 287.9 L1315.7 288.4 L1316.3 289.0 L1317.0 290.0 L1317.7 291.2 L1318.2 292.4 L1318.7 293.6 L1319.3 294.8 L1320.0 296.0 L1321.0 297.2 L1322.3 298.3 L1324.0 299.5 L1326.1 300.7 L1328.6 302.1 L1331.3 303.4 L1334.3 304.8 L1337.6 306.0 L1341.1 307.1 L1344.8 307.9 L1348.7 308.4 L1352.9 308.5 L1357.5 308.2 L1362.3 307.7 L1367.4 307.0 L1372.6 306.2 L1377.8 305.4 L1383.0 304.8 L1388.0 304.4 L1392.8 304.1 L1397.5 303.8 L1402.1 303.4 L1406.7 303.2 L1411.5 303.1 L1416.6 303.2 L1422.0 303.7 L1428.0 304.4 L1434.7 305.5 L1442.2 306.9 L1450.2 308.5 L1458.4 310.4 L1466.5 312.4 L1474.3 314.6 L1481.5 317.0 L1487.8 319.5 L1493.2 322.1 L1497.9 325.0 L1502.2 328.0 L1506.0 331.2 L1509.6 334.5 L1513.1 337.9 L1516.5 341.4 L1520.0 345.0 L1523.5 348.7 L1526.7 352.5 L1529.7 356.4 L1532.7 360.5 L1535.6 364.6 L1538.7 368.8 L1542.0 373.1 L1545.6 377.4 L1549.5 382.0 L1553.8 387.1 L1558.2 392.4 L1562.8 397.6 L1567.3 402.7 L1571.8 407.3 L1576.0 411.3 L1580.0 414.4 L1583.5 416.7 L1586.7 418.3 L1589.6 419.4 L1592.5 420.0 L1595.4 420.2 L1598.5 420.0 L1602.0 419.5 L1606.0 418.8 L1610.6 417.6 L1615.7 415.9 L1621.2 413.7 L1627.0 411.2 L1632.7 408.5 L1638.4 406.0 L1643.9 403.6 L1649.0 401.6 L1653.9 399.8 L1658.8 398.0 L1663.6 396.3 L1668.2 394.7 L1672.6 393.3 L1676.8 392.1 L1680.5 391.3 L1683.7 390.8 L1686.4 390.6 L1688.6 390.5 L1690.3 390.6 L1691.8 391.0 L1693.1 391.7 L1694.2 393.0 L1695.4 394.8 L1696.6 397.3 L1697.9 400.7 L1699.0 405.0 L1700.1 409.9 L1701.1 415.3 L1702.0 420.9 L1703.0 426.3 L1704.0 431.5 L1705.0 436.0 L1706.0 440.1 L1706.8 444.0 L1707.5 447.7 L1708.3 451.2 L1709.2 454.6 L1710.3 457.9 L1711.8 461.0 L1713.7 464.0 L1715.6 466.9 L1717.3 469.7 L1719.1 472.5 L1721.2 475.0 L1724.0 477.4 L1727.8 479.5 L1732.9 481.4 L1739.5 483.0 L1748.3 484.1 L1759.3 484.8 L1771.8 485.2 L1785.1 485.3 L1798.7 485.4 L1811.8 485.6 L1823.8 486.0 L1834.0 486.7 L1842.6 487.7 L1850.1 488.7 L1856.9 489.8 L1863.1 491.0 L1868.8 492.4 L1874.4 494.1 L1880.0 496.0 L1885.7 498.3 L1891.5 500.9 L1897.2 503.8 L1902.8 507.0 L1908.2 510.4 L1913.5 514.1 L1918.7 517.9 L1923.7 521.9 L1928.6 526.0 L1933.3 530.4 L1937.9 535.2 L1942.3 540.2 L1946.6 545.4 L1950.8 550.5 L1954.9 555.6 L1959.0 560.5 L1963.0 565.0 L1966.8 569.5 L1970.3 574.2 L1973.6 579.0 L1976.9 583.5 L1980.4 587.6 L1984.1 591.0 L1988.2 593.6 L1993.0 595.0 L1998.5 595.1 L2004.5 593.9 L2011.0 591.7 L2017.8 589.0 L2024.7 585.9 L2031.6 582.8 L2038.3 580.0 L2044.7 577.8 L2051.0 576.0 L2057.3 574.0 L2063.7 572.1 L2070.0 570.4 L2076.0 568.9 L2081.8 567.7 L2087.1 567.1 L2092.0 567.0 L2096.3 567.5 L2100.3 568.5 L2103.8 569.9 L2107.1 571.7 L2110.0 573.8 L2112.8 576.3 L2115.3 579.0 L2117.8 582.0 L2120.2 585.4 L2122.3 589.4 L2124.4 593.7 L2126.2 598.3 L2127.7 603.0 L2129.0 607.7 L2130.0 612.3 L2130.7 616.5 L2131.1 620.6 L2131.4 624.7 L2131.3 628.9 L2131.0 632.9 L2130.4 636.8 L2129.4 640.4 L2127.9 643.7 L2126.0 646.6 L2123.8 649.0 L2121.5 650.9 L2118.8 652.4 L2115.8 653.7 L2112.1 654.9 L2107.7 656.2 L2102.4 657.7 L2096.0 659.5 L2087.8 661.6 L2077.7 663.9 L2066.3 666.3 L2054.4 668.8 L2042.6 671.4 L2031.6 673.9 L2022.2 676.5 L2015.0 679.0 L2010.1 681.4 L2007.0 683.6 L2005.1 685.8 L2004.2 688.0 L2003.9 690.3 L2003.8 692.9 L2003.6 695.7 L2003.0 699.0 L2002.1 702.8 L2001.5 707.1 L2001.0 711.7 L2000.6 716.5 L2000.3 721.4 L2000.0 726.2 L1999.5 730.8 L1999.0 735.0 L1998.5 738.8 L1998.3 742.4 L1998.1 745.8 L1997.8 749.1 L1997.4 752.4 L1996.5 755.7 L1995.1 759.1 L1993.0 762.7 L1990.1 766.5 L1986.5 770.3 L1982.3 774.2 L1977.7 778.2 L1973.0 782.2 L1968.3 786.2 L1963.7 790.3 L1959.5 794.4 L1955.4 798.7 L1951.2 803.2 L1946.9 807.8 L1942.7 812.4 L1938.7 816.9 L1935.2 821.1 L1932.2 824.8 L1929.8 828.0 L1928.2 830.5 L1927.2 832.5 L1926.7 834.0 L1926.6 835.2 L1926.8 836.3 L1927.1 837.4 L1927.6 838.6 L1928.0 840.0 L1928.4 841.5 L1928.9 842.9 L1929.5 844.1 L1930.3 845.5 L1931.3 847.1 L1932.5 848.9 L1933.9 851.2 L1935.7 854.0 L1938.0 857.5 L1940.8 861.6 L1943.9 866.2 L1947.3 871.0 L1950.6 876.0 L1953.8 880.9 L1956.5 885.5 L1958.7 889.7 L1960.3 893.6 L1961.6 897.3 L1962.6 900.9 L1963.4 904.3 L1963.9 907.7 L1964.4 910.9 L1964.7 914.0 L1965.0 917.0 L1965.3 919.9 L1965.5 922.6 L1965.6 925.2 L1965.6 927.7 L1965.5 930.1 L1965.1 932.5 L1964.4 934.7 L1963.5 937.0 L1962.4 939.2 L1961.3 941.4 L1960.0 943.6 L1958.5 945.7 L1956.6 947.7 L1954.2 949.6 L1951.3 951.3 L1947.6 953.0 L1942.9 954.6 L1937.2 956.2 L1930.8 957.7 L1924.0 959.2 L1917.0 960.4 L1910.3 961.4 L1904.0 962.1 L1898.6 962.5 L1893.8 962.6 L1889.3 962.7 L1885.2 962.5 L1881.3 962.0 L1877.7 961.2 L1874.4 960.0 L1871.3 958.3 L1868.5 956.0 L1866.1 953.1 L1864.1 949.7 L1862.4 945.7 L1861.0 941.3 L1859.7 936.7 L1858.4 931.8 L1857.1 926.7 L1855.6 921.6 L1854.0 916.1 L1852.3 909.8 L1850.6 903.2 L1848.9 896.5 L1847.2 890.0 L1845.6 883.9 L1844.1 878.6 L1842.7 874.4 L1841.4 871.3 L1840.3 869.0 L1839.3 867.4 L1838.4 866.3 L1837.4 865.6 L1836.4 865.0 L1835.3 864.4 L1834.0 863.6 L1833.1 862.7 L1832.8 861.9 L1832.6 861.2 L1832.3 860.6 L1831.4 860.2 L1829.5 859.8 L1826.1 859.5 L1821.0 859.3 L1813.4 859.4 L1803.6 859.7 L1792.2 860.2 L1779.9 860.8 L1767.3 861.3 L1755.2 861.7 L1744.2 861.8 L1735.0 861.5 L1727.5 860.8 L1720.9 859.8 L1715.2 858.6 L1710.0 857.2 L1705.3 855.6 L1700.8 854.0 L1696.5 852.3 L1692.0 850.7 L1687.7 849.1 L1683.8 847.6 L1680.2 846.0 L1676.7 844.4 L1673.3 842.6 L1669.8 840.6 L1666.1 838.3 L1662.0 835.7 L1657.6 832.8 L1652.9 829.6 L1648.0 826.3 L1643.0 822.7 L1638.0 818.8 L1633.0 814.7 L1628.2 810.3 L1623.5 805.6 L1619.0 800.3 L1614.6 794.1 L1610.3 787.5 L1606.0 780.7 L1601.7 774.1 L1597.5 768.0 L1593.3 762.6 L1589.0 758.3 L1584.6 755.1 L1580.2 752.7 L1575.7 750.9 L1571.3 749.6 L1566.9 748.8 L1562.7 748.2 L1558.6 747.9 L1554.7 747.6 L1551.2 747.5 L1548.1 747.6 L1545.2 748.1 L1542.4 748.8 L1539.5 749.7 L1536.4 750.9 L1533.0 752.4 L1529.0 754.0 L1524.3 756.1 L1518.9 758.7 L1513.0 761.7 L1507.0 764.9 L1501.0 768.0 L1495.3 771.0 L1490.3 773.5 L1486.0 775.5 L1482.5 776.9 L1479.5 777.9 L1477.0 778.6 L1474.8 779.0 L1473.0 779.2 L1471.4 779.4 L1470.0 779.6 L1468.8 779.8 L1467.9 780.4 L1467.4 781.3 L1467.2 782.4 L1467.3 783.4 L1467.4 783.9 L1467.5 783.6 L1467.4 782.5 L1467.0 780.0 L1466.4 775.9 L1465.8 770.4 L1465.1 763.8 L1464.3 756.5 L1463.4 749.0 L1462.4 741.6 L1461.2 734.8 L1460.0 729.0 L1458.7 724.0 L1457.3 719.2 L1455.9 714.8 L1454.3 710.7 L1452.6 706.8 L1450.6 703.3 L1448.5 700.0 L1446.0 697.0 L1443.3 694.3 L1440.5 692.0 L1437.5 690.0 L1434.3 688.3 L1430.8 686.8 L1426.9 685.4 L1422.7 684.2 L1418.0 683.0 L1412.8 681.9 L1406.9 681.0 L1400.7 680.2 L1394.1 679.6 L1387.4 679.1 L1380.6 678.8 L1373.9 678.5 L1367.4 678.3 L1361.0 678.3 L1354.5 678.7 L1347.9 679.2 L1341.4 679.7 L1334.9 680.3 L1328.6 680.7 L1322.4 680.8 L1316.5 680.6 L1310.8 680.2 L1305.4 679.9 L1300.2 679.5 L1295.1 678.9 L1290.0 677.9 L1285.0 676.4 L1280.0 674.3 L1274.8 671.4 L1269.5 667.5 L1264.1 662.6 L1258.7 657.0 L1253.3 650.9 L1248.0 644.7 L1242.8 638.4 L1237.8 632.4 L1233.0 627.0 L1228.5 621.9 L1224.1 616.8 L1219.9 611.7 L1215.8 606.9 L1211.9 602.2 L1208.1 597.7 L1204.4 593.7 L1200.7 590.0 L1197.1 586.7 L1193.7 583.7 L1190.4 581.1 L1187.1 578.7 L1184.0 576.6 L1180.9 574.8 L1177.9 573.3 L1175.0 572.0 L1172.3 571.0 L1170.0 570.3 L1167.8 569.9 L1165.7 569.7 L1163.4 569.8 L1160.9 570.2 L1157.9 570.9 L1154.4 571.9 L1150.2 573.3 L1145.5 575.3 L1140.3 577.6 L1134.9 580.2 L1129.3 582.9 L1123.7 585.5 L1118.2 587.9 L1112.8 590.0 L1107.5 592.0 L1102.2 594.3 L1096.8 596.6 L1091.5 598.7 L1086.2 600.5 L1081.0 601.8 L1075.9 602.3 L1071.0 602.0 L1066.1 600.7 L1061.2 598.4 L1056.2 595.5 L1051.5 592.0 L1046.9 588.2 L1042.8 584.2 L1039.1 580.3 L1036.0 576.5 L1033.5 572.7 L1031.5 568.6 L1030.0 564.4 L1028.9 560.1 L1028.1 555.8 L1027.5 551.6 L1027.2 547.7 L1027.0 544.0 L1026.9 540.6 L1027.0 537.4 L1027.3 534.3 L1027.9 531.3 L1028.8 528.5 L1030.1 525.9 L1031.8 523.4 L1034.0 521.0 L1036.6 518.8 L1039.6 516.8 L1042.9 514.9 L1046.7 513.1 L1050.8 511.5 L1055.5 510.0 L1060.7 508.5 L1066.5 507.0 L1073.4 505.7 L1081.6 504.5 L1090.6 503.4 L1099.9 502.4 L1109.1 501.4 L1117.7 500.3 L1125.1 499.1 L1131.0 497.8 L1135.3 496.5 L1138.5 495.4 L1140.9 494.4 L1142.5 493.2 L1143.5 491.8 L1144.2 489.9 L1144.6 487.3 L1145.0 484.0 L1145.0 479.6 L1144.4 474.0 L1143.3 467.8 L1141.9 461.1 L1140.5 454.4 L1139.3 448.0 L1138.3 442.3 L1138.0 437.6 L1138.1 433.9 L1138.4 430.9 L1138.9 428.5 L1139.6 426.4 L1140.6 424.6 L1141.8 422.8 L1143.3 421.0 L1145.0 419.0 L1146.9 416.9 L1149.0 414.9 L1151.2 412.9 L1153.8 411.0 L1156.6 409.1 L1159.9 407.2 L1163.7 405.1 L1168.0 403.0 L1173.3 400.8 L1179.6 398.7 L1186.6 396.6 L1193.9 394.4 L1201.2 392.1 L1208.0 389.6 L1214.1 386.9 L1219.0 384.0 L1222.9 380.7 L1226.0 377.1 L1228.6 373.1 L1230.7 369.1 L1232.4 365.0 L1233.7 361.1 L1234.7 357.4 L1235.5 354.0 L1236.1 351.1 L1236.3 348.5 L1236.2 346.2 L1235.8 344.0 L1235.0 341.7 L1234.0 339.3 L1232.5 336.6 L1230.8 333.4 L1228.5 329.8 L1225.5 325.8 L1222.1 321.5 L1218.4 317.1 L1214.7 312.5 L1211.1 307.9 L1207.8 303.2 L1205.0 298.7 L1202.6 294.2 L1200.4 289.7 L1198.3 285.1 L1196.4 280.5 L1194.8 275.9 L1193.4 271.2 L1192.3 266.5Z" fill="#fbfbcf"/>
<path d="M1191.5 261.7 L1191.0 256.7 L1190.6 251.5 L1190.5 246.2 L1190.7 240.9 L1191.2 235.7 L1192.1 230.7 L1193.3 226.1 L1195.0 222.0 L1197.2 218.3 L1200.0 214.9 L1203.2 211.8 L1206.8 208.9 L1210.5 206.3 L1214.4 204.0 L1218.3 201.9 L1222.0 200.0 L1225.7 198.4 L1229.4 197.0 L1233.2 195.9 L1237.1 195.1 L1241.0 194.4 L1244.9 194.1 L1249.0 193.9 L1253.0 194.0 L1257.2 194.3 L1261.7 194.7 L1266.3 195.3 L1271.0 196.2 L1275.5 197.4 L1279.7 198.9 L1283.6 200.7 L1287.0 203.0 L1289.9 205.7 L1292.3 208.8 L1294.5 212.3 L1296.3 216.1 L1298.0 220.2 L1299.6 224.6 L1301.1 229.2 L1302.6 233.9 L1304.1 239.2 L1305.5 245.2 L1306.7 251.7 L1307.9 258.3 L1309.0 264.7 L1310.0 270.7 L1311.0 275.9 L1311.9 280.0 L1312.7 283.0 L1313.4 285.0 L1314.0 286.4 L1314.6 287.3 L1315.1 287.9 L1315.7 288.4 L1316.3 289.0 L1317.0 290.0 L1317.7 291.2 L1318.2 292.4 L1318.7 293.6 L1319.3 294.8 L1320.0 296.0 L1321.0 297.2 L1322.3 298.3 L1324.0 299.5 L1326.1 300.7 L1328.6 302.1 L1331.3 303.4 L1334.3 304.8 L1337.6 306.0 L1341.1 307.1 L1344.8 307.9 L1348.7 308.4 L1352.9 308.5 L1357.5 308.2 L1362.3 307.7 L1367.4 307.0 L1372.6 306.2 L1377.8 305.4 L1383.0 304.8 L1388.0 304.4 L1392.8 304.1 L1397.5 303.8 L1402.1 303.4 L1406.7 303.2 L1411.5 303.1 L1416.6 303.2 L1422.0 303.7 L1428.0 304.4 L1434.7 305.5 L1442.2 306.9 L1450.2 308.5 L1458.4 310.4 L1466.5 312.4 L1474.3 314.6 L1481.5 317.0 L1487.8 319.5 L1493.2 322.1 L1497.9 325.0 L1502.2 328.0 L1506.0 331.2 L1509.6 334.5 L1513.1 337.9 L1516.5 341.4 L1520.0 345.0 L1523.5 348.7 L1526.7 352.5 L1529.7 356.4 L1532.7 360.5 L1535.6 364.6 L1538.7 368.8 L1542.0 373.1 L1545.6 377.4 L1549.5 382.0 L1553.8 387.1 L1558.2 392.4 L1562.8 397.6 L1567.3 402.7 L1571.8 407.3 L1576.0 411.3 L1580.0 414.4 L1583.5 416.7 L1586.7 418.3 L1589.6 419.4 L1592.5 420.0 L1595.4 420.2 L1598.5 420.0 L1602.0 419.5 L1606.0 418.8 L1610.6 417.6 L1615.7 415.9 L1621.2 413.7 L1627.0 411.2 L1632.7 408.5 L1638.4 406.0 L1643.9 403.6 L1649.0 401.6 L1653.9 399.8 L1658.8 398.0 L1663.6 396.3 L1668.2 394.7 L1672.6 393.3 L1676.8 392.1 L1680.5 391.3 L1683.7 390.8 L1686.4 390.6 L1688.6 390.5 L1690.3 390.6 L1691.8 391.0 L1693.1 391.7 L1694.2 393.0 L1695.4 394.8 L1696.6 397.3 L1697.9 400.7 L1699.0 405.0 L1700.1 409.9 L1701.1 415.3 L1702.0 420.9 L1703.0 426.3 L1704.0 431.5 L1705.0 436.0 L1706.0 440.1 L1706.8 444.0 L1707.5 447.7 L1708.3 451.2 L1709.2 454.6 L1710.3 457.9 L1711.8 461.0 L1713.7 464.0 L1715.6 466.9 L1717.3 469.7 L1719.1 472.5 L1721.2 475.0 L1724.0 477.4 L1727.8 479.5 L1732.9 481.4 L1739.5 483.0 L1748.3 484.1 L1759.3 484.8 L1771.8 485.2 L1785.1 485.3 L1798.7 485.4 L1811.8 485.6 L1823.8 486.0 L1834.0 486.7 L1842.6 487.7 L1850.1 488.7 L1856.9 489.8 L1863.1 491.0 L1868.8 492.4 L1874.4 494.1 L1880.0 496.0 L1885.7 498.3 L1891.5 500.9 L1897.2 503.8 L1902.8 507.0 L1908.2 510.4 L1913.5 514.1 L1918.7 517.9 L1923.7 521.9 L1928.6 526.0 L1933.3 530.4 L1937.9 535.2 L1942.3 540.2 L1946.6 545.4 L1950.8 550.5 L1954.9 555.6 L1959.0 560.5 L1963.0 565.0 L1966.8 569.5 L1970.3 574.2 L1973.6 579.0 L1976.9 583.5 L1980.4 587.6 L1984.1 591.0 L1988.2 593.6 L1993.0 595.0 L1998.5 595.1 L2004.5 593.9 L2011.0 591.7 L2017.8 589.0 L2024.7 585.9 L2031.6 582.8 L2038.3 580.0 L2044.7 577.8 L2051.0 576.0 L2057.3 574.0 L2063.7 572.1 L2070.0 570.4 L2076.0 568.9 L2081.8 567.7 L2087.1 567.1 L2092.0 567.0 L2096.3 567.5 L2100.3 568.5 L2103.8 569.9 L2107.1 571.7 L2110.0 573.8 L2112.8 576.3 L2115.3 579.0 L2117.8 582.0 L2120.2 585.4 L2122.3 589.4 L2124.4 593.7 L2126.2 598.3 L2127.7 603.0 L2129.0 607.7 L2130.0 612.3 L2130.7 616.5 L2131.1 620.6 L2131.4 624.7 L2131.3 628.9 L2131.0 632.9 L2130.4 636.8 L2129.4 640.4 L2127.9 643.7 L2126.0 646.6 L2123.8 649.0 L2121.5 650.9 L2118.8 652.4 L2115.8 653.7 L2112.1 654.9 L2107.7 656.2 L2102.4 657.7 L2096.0 659.5 L2087.8 661.6 L2077.7 663.9 L2066.3 666.3 L2054.4 668.8 L2042.6 671.4 L2031.6 673.9 L2022.2 676.5 L2015.0 679.0 L2010.1 681.4 L2007.0 683.6 L2005.1 685.8 L2004.2 688.0 L2003.9 690.3 L2003.8 692.9 L2003.6 695.7 L2003.0 699.0 L2002.1 702.8 L2001.5 707.1 L2001.0 711.7 L2000.6 716.5 L2000.3 721.4 L2000.0 726.2 L1999.5 730.8 L1999.0 735.0 L1998.5 738.8 L1998.3 742.4 L1998.1 745.8 L1997.8 749.1 L1997.4 752.4 L1996.5 755.7 L1995.1 759.1 L1993.0 762.7 L1990.1 766.5 L1986.5 770.3 L1982.3 774.2 L1977.7 778.2 L1973.0 782.2 L1968.3 786.2 L1963.7 790.3 L1959.5 794.4 L1955.4 798.7 L1951.2 803.2 L1946.9 807.8 L1942.7 812.4 L1938.7 816.9 L1935.2 821.1 L1932.2 824.8 L1929.8 828.0 L1928.2 830.5 L1927.2 832.5 L1926.7 834.0 L1926.6 835.2 L1926.8 836.3 L1927.1 837.4 L1927.6 838.6 L1928.0 840.0 L1928.4 841.5 L1928.9 842.9 L1929.5 844.1 L1930.3 845.5 L1931.3 847.1 L1932.5 848.9 L1933.9 851.2 L1935.7 854.0 L1938.0 857.5 L1940.8 861.6 L1943.9 866.2 L1947.3 871.0 L1950.6 876.0 L1953.8 880.9 L1956.5 885.5 L1958.7 889.7 L1960.3 893.6 L1961.6 897.3 L1962.6 900.9 L1963.4 904.3 L1963.9 907.7 L1964.4 910.9 L1964.7 914.0 L1965.0 917.0 L1965.3 919.9 L1965.5 922.6 L1965.6 925.2 L1965.6 927.7 L1965.5 930.1 L1965.1 932.5 L1964.4 934.7 L1963.5 937.0 L1962.4 939.2 L1961.3 941.4 L1960.0 943.6 L1958.5 945.7 L1956.6 947.7 L1954.2 949.6 L1951.3 951.3 L1947.6 953.0 L1942.9 954.6 L1937.2 956.2 L1930.8 957.7 L1924.0 959.2 L1917.0 960.4 L1910.3 961.4 L1904.0 962.1 L1898.6 962.5 L1893.8 962.6 L1889.3 962.7 L1885.2 962.5 L1881.3 962.0 L1877.7 961.2 L1874.4 960.0 L1871.3 958.3 L1868.5 956.0 L1866.1 953.1 L1864.1 949.7 L1862.4 945.7 L1861.0 941.3 L1859.7 936.7 L1858.4 931.8 L1857.1 926.7 L1855.6 921.6 L1854.0 916.1 L1852.3 909.8 L1850.6 903.2 L1848.9 896.5 L1847.2 890.0 L1845.6 883.9 L1844.1 878.6 L1842.7 874.4 L1841.4 871.3 L1840.3 869.0 L1839.3 867.4 L1838.4 866.3 L1837.4 865.6 L1836.4 865.0 L1835.3 864.4 L1834.0 863.6 L1833.1 862.7 L1832.8 861.9 L1832.6 861.2 L1832.3 860.6 L1831.4 860.2 L1829.5 859.8 L1826.1 859.5 L1821.0 859.3 L1813.4 859.4 L1803.6 859.7 L1792.2 860.2 L1779.9 860.8 L1767.3 861.3 L1755.2 861.7 L1744.2 861.8 L1735.0 861.5 L1727.5 860.8 L1720.9 859.8 L1715.2 858.6 L1710.0 857.2 L1705.3 855.6 L1700.8 854.0 L1696.5 852.3 L1692.0 850.7 L1687.7 849.1 L1683.8 847.6 L1680.2 846.0 L1676.7 844.4 L1673.3 842.6 L1669.8 840.6 L1666.1 838.3 L1662.0 835.7 L1657.6 832.8 L1652.9 829.6 L1648.0 826.3 L1643.0 822.7 L1638.0 818.8 L1633.0 814.7 L1628.2 810.3 L1623.5 805.6 L1619.0 800.3 L1614.6 794.1 L1610.3 787.5 L1606.0 780.7 L1601.7 774.1 L1597.5 768.0 L1593.3 762.6 L1589.0 758.3 L1584.6 755.1 L1580.2 752.7 L1575.7 750.9 L1571.3 749.6 L1566.9 748.8 L1562.7 748.2 L1558.6 747.9 L1554.7 747.6 L1551.2 747.5 L1548.1 747.6 L1545.2 748.1 L1542.4 748.8 L1539.5 749.7 L1536.4 750.9 L1533.0 752.4 L1529.0 754.0 L1524.3 756.1 L1518.9 758.7 L1513.0 761.7 L1507.0 764.9 L1501.0 768.0 L1495.3 771.0 L1490.3 773.5 L1486.0 775.5 L1482.5 776.9 L1479.5 777.9 L1477.0 778.6 L1474.8 779.0 L1473.0 779.2 L1471.4 779.4 L1470.0 779.6 L1468.8 779.8 L1467.9 780.4 L1467.4 781.3 L1467.2 782.4 L1467.3 783.4 L1467.4 783.9 L1467.5 783.6 L1467.4 782.5 L1467.0 780.0 L1466.4 775.9 L1465.8 770.4 L1465.1 763.8 L1464.3 756.5 L1463.4 749.0 L1462.4 741.6 L1461.2 734.8 L1460.0 729.0 L1458.7 724.0 L1457.3 719.2 L1455.9 714.8 L1454.3 710.7 L1452.6 706.8 L1450.6 703.3 L1448.5 700.0 L1446.0 697.0 L1443.3 694.3 L1440.5 692.0 L1437.5 690.0 L1434.3 688.3 L1430.8 686.8 L1426.9 685.4 L1422.7 684.2 L1418.0 683.0 L1412.8 681.9 L1406.9 681.0 L1400.7 680.2 L1394.1 679.6 L1387.4 679.1 L1380.6 678.8 L1373.9 678.5 L1367.4 678.3 L1361.0 678.3 L1354.5 678.7 L1347.9 679.2 L1341.4 679.7 L1334.9 680.3 L1328.6 680.7 L1322.4 680.8 L1316.5 680.6 L1310.8 680.2 L1305.4 679.9 L1300.2 679.5 L1295.1 678.9 L1290.0 677.9 L1285.0 676.4 L1280.0 674.3 L1274.8 671.4 L1269.5 667.5 L1264.1 662.6 L1258.7 657.0 L1253.3 650.9 L1248.0 644.7 L1242.8 638.4 L1237.8 632.4 L1233.0 627.0 L1228.5 621.9 L1224.1 616.8 L1219.9 611.7 L1215.8 606.9 L1211.9 602.2 L1208.1 597.7 L1204.4 593.7 L1200.7 590.0 L1197.1 586.7 L1193.7 583.7 L1190.4 581.1 L1187.1 578.7 L1184.0 576.6 L1180.9 574.8 L1177.9 573.3 L1175.0 572.0 L1172.3 571.0 L1170.0 570.3 L1167.8 569.9 L1165.7 569.7 L1163.4 569.8 L1160.9 570.2 L1157.9 570.9 L1154.4 571.9 L1150.2 573.3 L1145.5 575.3 L1140.3 577.6 L1134.9 580.2 L1129.3 582.9 L1123.7 585.5 L1118.2 587.9 L1112.8 590.0 L1107.5 592.0 L1102.2 594.3 L1096.8 596.6 L1091.5 598.7 L1086.2 600.5 L1081.0 601.8 L1075.9 602.3 L1071.0 602.0 L1066.1 600.7 L1061.2 598.4 L1056.2 595.5 L1051.5 592.0 L1046.9 588.2 L1042.8 584.2 L1039.1 580.3 L1036.0 576.5 L1033.5 572.7 L1031.5 568.6 L1030.0 564.4 L1028.9 560.1 L1028.1 555.8 L1027.5 551.6 L1027.2 547.7 L1027.0 544.0 L1026.9 540.6 L1027.0 537.4 L1027.3 534.3 L1027.9 531.3 L1028.8 528.5 L1030.1 525.9 L1031.8 523.4 L1034.0 521.0 L1036.6 518.8 L1039.6 516.8 L1042.9 514.9 L1046.7 513.1 L1050.8 511.5 L1055.5 510.0 L1060.7 508.5 L1066.5 507.0 L1073.4 505.7 L1081.6 504.5 L1090.6 503.4 L1099.9 502.4 L1109.1 501.4 L1117.7 500.3 L1125.1 499.1 L1131.0 497.8 L1135.3 496.5 L1138.5 495.4 L1140.9 494.4 L1142.5 493.2 L1143.5 491.8 L1144.2 489.9 L1144.6 487.3 L1145.0 484.0 L1145.0 479.6 L1144.4 474.0 L1143.3 467.8 L1141.9 461.1 L1140.5 454.4 L1139.3 448.0 L1138.3 442.3 L1138.0 437.6 L1138.1 433.9 L1138.4 430.9 L1138.9 428.5 L1139.6 426.4 L1140.6 424.6 L1141.8 422.8 L1143.3 421.0 L1145.0 419.0 L1146.9 416.9 L1149.0 414.9 L1151.2 412.9 L1153.8 411.0 L1156.6 409.1 L1159.9 407.2 L1163.7 405.1 L1168.0 403.0 L1173.3 400.8 L1179.6 398.7 L1186.6 396.6 L1193.9 394.4 L1201.2 392.1 L1208.0 389.6 L1214.1 386.9 L1219.0 384.0 L1222.9 380.7 L1226.0 377.1 L1228.6 373.1 L1230.7 369.1 L1232.4 365.0 L1233.7 361.1 L1234.7 357.4 L1235.5 354.0 L1236.1 351.1 L1236.3 348.5 L1236.2 346.2 L1235.8 344.0 L1235.0 341.7 L1234.0 339.3 L1232.5 336.6 L1230.8 333.4 L1228.5 329.8 L1225.5 325.8 L1222.1 321.5 L1218.4 317.1 L1214.7 312.5 L1211.1 307.9 L1207.8 303.2 L1205.0 298.7 L1202.6 294.2 L1200.4 289.7 L1198.3 285.1 L1196.4 280.5 L1194.8 275.9 L1193.4 271.2 L1192.3 266.5Z" fill="none" stroke="#111" stroke-width="1.8"/>
<g clip-path="url(#flclip)" fill="#b6b6b6"><polygon points="1293.4,630.3 1281.0,661.1 1271.9,657.3"/><polygon points="1230.8,630.3 1261.9,608.7 1252.4,601.4"/><polygon points="1620.7,591.7 1534.0,550.5 1528.1,561.2"/><polygon points="1416.6,706.9 1423.8,648.0 1387.0,653.3"/><polygon points="1605.1,463.4 1556.8,463.9 1558.8,475.0"/><polygon points="1510.4,599.2 1545.5,618.2 1535.8,627.3"/><polygon points="1234.3,351.0 1250.8,384.5 1270.1,370.7"/><polygon points="1421.5,635.5 1450.1,683.0 1426.4,688.7"/><polygon points="1122.0,558.1 1201.5,547.9 1194.8,529.0"/><polygon points="1137.0,391.0 1200.8,434.1 1215.6,409.2"/><polygon points="1639.4,464.7 1545.0,468.3 1546.8,481.0"/><polygon points="1193.9,503.7 1107.0,512.7 1106.4,504.9"/><polygon points="1502.6,384.0 1549.5,334.4 1561.1,344.4"/><polygon points="1192.7,536.7 1140.8,562.5 1132.6,537.7"/><polygon points="1541.0,550.1 1643.4,571.1 1632.0,595.2"/><polygon points="1327.8,671.5 1347.9,645.3 1322.4,640.5"/><polygon points="1506.1,692.1 1460.4,611.0 1448.2,616.9"/><polygon points="1377.3,679.4 1390.4,651.3 1363.2,651.6"/><polygon points="1112.0,421.3 1192.3,464.2 1206.6,426.2"/><polygon points="1131.0,615.0 1220.1,583.1 1206.9,564.1"/><polygon points="1449.2,621.2 1490.9,679.3 1478.6,684.5"/><polygon points="1360.1,640.4 1358.5,696.7 1351.2,696.2"/><polygon points="1542.6,449.4 1616.0,418.2 1623.9,440.5"/><polygon points="1547.3,545.1 1639.6,556.8 1627.8,585.4"/><polygon points="1172.3,631.0 1253.7,588.6 1238.5,572.4"/><polygon points="1590.4,576.1 1528.9,544.2 1521.6,557.9"/><polygon points="1613.1,493.3 1538.2,486.7 1538.2,499.7"/><polygon points="1536.7,353.1 1478.7,383.4 1501.6,402.8"/><polygon points="1187.0,675.8 1258.1,616.7 1246.0,607.7"/><polygon points="1137.7,513.5 1211.2,512.7 1209.9,501.7"/><polygon points="1451.1,371.4 1501.9,279.2 1513.7,284.7"/><polygon points="1472.2,603.2 1534.6,657.4 1516.7,669.0"/><polygon points="1530.3,338.6 1470.2,374.6 1497.4,394.6"/><polygon points="1406.5,293.2 1383.0,336.6 1415.2,340.4"/><polygon points="1444.0,346.3 1458.6,273.5 1493.3,285.5"/><polygon points="1358.8,290.1 1353.2,343.8 1372.5,342.7"/><polygon points="1540.3,518.1 1634.0,525.4 1631.2,538.8"/><polygon points="1107.6,571.2 1204.4,565.5 1188.1,524.9"/><polygon points="1404.8,633.0 1422.1,682.6 1409.8,684.6"/><polygon points="1515.9,405.4 1574.9,352.3 1593.5,374.3"/><polygon points="1535.5,574.2 1612.7,599.3 1598.7,619.6"/><polygon points="1191.8,514.6 1140.3,525.7 1138.7,515.8"/><polygon points="1544.2,466.9 1648.7,441.9 1652.4,459.2"/><polygon points="1453.9,616.9 1513.3,698.3 1502.6,703.3"/><polygon points="1532.0,669.3 1506.3,608.6 1470.0,632.2"/><polygon points="1631.6,633.3 1514.4,607.3 1518.2,597.1"/><polygon points="1614.6,650.3 1511.7,651.3 1517.7,620.5"/><polygon points="1827.2,815.9 1848.2,864.5 1835.3,867.3"/><polygon points="1769.6,912.8 1788.9,816.3 1763.8,815.0"/><polygon points="1605.2,716.6 1554.4,738.4 1548.5,719.5"/><polygon points="1571.9,673.1 1610.1,686.8 1610.4,660.1"/><polygon points="1877.9,850.9 1866.3,816.9 1856.0,820.8"/><polygon points="1759.5,530.7 1735.9,465.3 1758.5,462.3"/><polygon points="1835.3,482.2 1816.7,525.5 1831.1,528.2"/><polygon points="1810.7,524.7 1811.9,447.1 1834.7,449.9"/><polygon points="1621.2,727.5 1556.5,759.2 1548.0,739.7"/><polygon points="1618.7,719.2 1521.6,755.9 1514.3,735.6"/><polygon points="1906.6,573.8 1954.5,513.4 1978.2,534.0"/><polygon points="1917.1,498.3 1868.0,552.6 1880.6,559.4"/><polygon points="1796.6,829.2 1806.9,904.7 1796.7,905.2"/><polygon points="1887.9,802.2 1921.9,826.4 1901.9,838.1"/><polygon points="2022.5,633.2 1968.4,633.8 1972.5,650.9"/><polygon points="1951.8,666.0 2028.1,649.1 2030.0,674.4"/><polygon points="1645.3,867.0 1703.0,802.4 1688.1,794.5"/><polygon points="1633.2,628.8 1559.9,615.1 1566.1,600.1"/><polygon points="1597.0,662.5 1516.7,661.5 1517.5,653.0"/><polygon points="1998.8,815.8 1920.3,753.4 1908.5,766.5"/><polygon points="1972.7,844.1 1924.8,782.8 1903.9,799.6"/><polygon points="1941.7,856.7 1908.9,784.8 1871.4,808.3"/><polygon points="1948.4,727.5 1993.7,731.6 1985.6,750.1"/><polygon points="1603.7,499.4 1663.5,581.9 1692.4,559.9"/><polygon points="1897.4,563.8 1942.7,505.4 1958.0,516.6"/><polygon points="1760.2,870.5 1774.0,825.6 1758.5,824.1"/><polygon points="1910.3,845.9 1879.3,793.7 1869.2,799.1"/><polygon points="1799.5,482.4 1785.6,524.7 1807.3,525.8"/><polygon points="1946.9,690.8 2050.8,694.4 2049.0,707.4"/><polygon points="1855.9,824.4 1876.2,847.1 1859.4,852.8"/><polygon points="1617.3,740.5 1570.8,768.1 1562.4,752.3"/><polygon points="1720.7,539.6 1664.8,465.9 1699.6,453.6"/><polygon points="1643.7,535.2 1664.1,571.9 1683.4,557.6"/><polygon points="1988.8,757.6 1945.5,722.2 1929.4,751.2"/><polygon points="1912.5,507.5 1864.2,535.8 1902.2,556.8"/><polygon points="1720.5,876.9 1754.7,814.4 1728.9,808.3"/><polygon points="1958.0,639.0 2005.6,615.1 2013.1,641.3"/><polygon points="1698.2,866.3 1737.5,806.8 1716.7,799.8"/><polygon points="1572.9,671.8 1610.2,680.2 1610.5,664.6"/><polygon points="1967.2,773.0 1929.5,740.5 1916.7,757.9"/><polygon points="1805.0,825.1 1827.3,900.6 1802.2,902.9"/><polygon points="1749.4,530.7 1721.4,480.6 1750.6,475.1"/><polygon points="1892.2,799.1 1922.9,817.9 1903.8,829.8"/><polygon points="1251.7,257.0 1292.7,225.0 1297.2,229.7"/><polygon points="1251.7,257.0 1268.8,218.6 1271.4,219.5"/><polygon points="1251.7,257.0 1193.6,259.5 1193.9,251.8"/><polygon points="1251.7,257.0 1276.6,209.4 1283.2,212.4"/><polygon points="1251.7,257.0 1233.8,228.5 1238.5,226.7"/><polygon points="1251.7,257.0 1293.7,263.0 1293.2,265.1"/><polygon points="1251.7,257.0 1293.1,280.1 1288.4,285.3"/><polygon points="1251.7,257.0 1211.9,226.2 1216.9,222.1"/><polygon points="1251.7,257.0 1194.0,261.3 1193.8,259.3"/><polygon points="1251.7,257.0 1248.5,215.7 1253.9,215.6"/><polygon points="1085.0,546.4 1053.8,507.1 1056.1,505.9"/><polygon points="1085.0,546.4 1085.4,579.8 1083.5,579.8"/><polygon points="1085.0,546.4 1075.9,499.5 1079.7,499.1"/><polygon points="1085.0,546.4 1127.5,538.8 1128.2,542.8"/><polygon points="1085.0,546.4 1029.3,556.0 1028.3,549.5"/><polygon points="1085.0,546.4 1059.4,529.1 1062.2,526.5"/><polygon points="1085.0,546.4 1120.3,583.4 1116.9,585.5"/><polygon points="1085.0,546.4 1076.5,571.2 1073.1,570.2"/><polygon points="1085.0,546.4 1135.4,561.7 1133.9,564.9"/><polygon points="1085.0,546.4 1068.2,515.4 1073.3,513.7"/><polygon points="1497.0,728.0 1450.7,726.0 1451.2,721.9"/><polygon points="1497.0,728.0 1526.2,747.3 1522.0,751.1"/><polygon points="1497.0,728.0 1526.9,722.2 1527.6,726.7"/><polygon points="1497.0,728.0 1436.7,745.9 1434.2,737.7"/><polygon points="1497.0,728.0 1462.0,739.1 1461.1,736.7"/><polygon points="1497.0,728.0 1543.8,712.3 1545.0,715.1"/><polygon points="1497.0,728.0 1539.6,767.9 1534.0,771.7"/><polygon points="1497.0,728.0 1531.8,755.9 1526.3,760.1"/><polygon points="1497.0,728.0 1524.1,705.2 1527.5,708.6"/><polygon points="1497.0,728.0 1520.7,711.2 1522.7,713.4"/><polygon points="1662.0,439.0 1707.8,437.8 1707.6,442.0"/><polygon points="1662.0,439.0 1649.7,473.2 1647.3,472.5"/><polygon points="1662.0,439.0 1652.1,463.1 1647.7,461.5"/><polygon points="1662.0,439.0 1659.5,410.0 1664.8,410.0"/><polygon points="1662.0,439.0 1715.0,412.4 1718.9,419.0"/><polygon points="1662.0,439.0 1653.1,475.4 1649.2,474.6"/><polygon points="1662.0,439.0 1704.5,436.5 1704.6,440.9"/><polygon points="1662.0,439.0 1634.1,451.7 1633.0,449.8"/><polygon points="1662.0,439.0 1695.9,457.1 1692.1,461.4"/><polygon points="1662.0,439.0 1697.5,424.7 1698.7,427.0"/><polygon points="2074.8,620.8 2031.8,619.5 2032.0,617.1"/><polygon points="2074.8,620.8 2129.5,603.4 2132.1,611.3"/><polygon points="2074.8,620.8 2028.3,584.8 2036.0,578.7"/><polygon points="2074.8,620.8 2044.0,614.4 2045.3,610.8"/><polygon points="2074.8,620.8 2065.7,573.5 2071.5,573.0"/><polygon points="2074.8,620.8 2054.3,600.2 2056.3,598.9"/><polygon points="2074.8,620.8 2115.9,602.2 2117.1,604.3"/><polygon points="2074.8,620.8 2045.7,661.3 2041.9,659.2"/><polygon points="2074.8,620.8 2126.8,612.4 2127.4,615.8"/><polygon points="2074.8,620.8 2063.5,656.8 2058.6,655.4"/><polygon points="1908.4,909.6 1927.9,936.6 1925.9,937.6"/><polygon points="1908.4,909.6 1938.5,890.3 1940.8,893.2"/><polygon points="1908.4,909.6 1944.0,885.2 1948.6,891.0"/><polygon points="1908.4,909.6 1930.5,930.7 1928.7,931.9"/><polygon points="1908.4,909.6 1888.3,937.4 1886.6,936.4"/><polygon points="1908.4,909.6 1908.8,961.5 1901.6,961.2"/><polygon points="1908.4,909.6 1906.1,871.8 1910.5,871.8"/><polygon points="1908.4,909.6 1866.8,905.9 1867.4,902.6"/><polygon points="1908.4,909.6 1968.4,928.2 1966.5,932.2"/><polygon points="1908.4,909.6 1947.0,939.3 1942.9,942.7"/><polygon points="1560.2,493.0 1560.1,499.2 1559.6,505.4 1558.9,511.6 1557.9,517.7 1556.6,523.9 1555.1,529.9 1553.3,535.9 1551.2,541.9 1564.3,545.5 1577.5,541.7 1579.6,534.9 1581.3,528.0 1582.8,521.1 1583.9,514.1 1584.7,507.1 1585.2,500.0 1574.0,493.0"/><polygon points="1479.3,623.9 1477.7,624.9 1476.0,625.8 1474.3,626.7 1472.6,627.7 1470.9,628.6 1469.2,629.4 1467.5,630.3 1465.8,631.1 1477.5,648.8 1485.2,656.2 1487.2,655.2 1489.2,654.2 1491.3,653.1 1493.3,652.0 1495.3,650.9 1497.3,649.8 1492.8,640.6"/><polygon points="1409.8,648.8 1404.3,649.6 1398.8,650.3 1393.3,650.9 1387.8,651.3 1382.3,651.6 1376.7,651.7 1371.2,651.7 1365.6,651.6 1364.9,665.7 1370.7,675.5 1377.1,675.6 1383.5,675.4 1389.9,675.1 1396.2,674.6 1402.6,673.9 1408.9,673.1 1413.0,662.6"/><polygon points="1256.0,615.8 1253.4,613.9 1250.8,612.0 1248.3,610.1 1245.7,608.1 1243.3,606.1 1240.9,604.0 1238.5,601.9 1236.2,599.7 1227.9,606.1 1222.1,615.1 1224.8,617.4 1227.5,619.7 1230.2,622.0 1233.0,624.2 1235.9,626.4 1238.8,628.6 1249.0,623.2"/><polygon points="1211.5,415.6 1214.4,411.2 1217.6,406.9 1220.8,402.7 1224.3,398.6 1227.9,394.6 1231.6,390.7 1235.5,386.9 1239.5,383.2 1231.9,377.0 1219.2,374.4 1214.9,378.7 1210.7,383.0 1206.7,387.5 1202.8,392.1 1199.1,396.8 1195.6,401.6 1202.3,411.2"/><polygon points="1260.0,367.5 1265.0,364.3 1270.1,361.2 1275.4,358.3 1280.7,355.6 1286.2,353.0 1291.7,350.6 1297.4,348.3 1303.1,346.2 1299.6,338.9 1288.9,332.3 1282.6,334.8 1276.5,337.5 1270.4,340.4 1264.5,343.4 1258.6,346.7 1252.9,350.0 1254.4,361.3"/><polygon points="1342.7,336.5 1347.0,335.9 1351.2,335.4 1355.5,335.0 1359.8,334.7 1364.1,334.5 1368.4,334.3 1372.7,334.2 1377.0,334.3 1377.3,316.1 1372.4,306.4 1367.4,306.4 1362.3,306.6 1357.3,306.9 1352.3,307.3 1347.2,307.8 1342.2,308.3 1339.1,318.6"/><polygon points="1377.0,334.3 1378.9,334.3 1380.8,334.3 1382.8,334.4 1384.7,334.5 1386.6,334.6 1388.5,334.7 1390.5,334.9 1392.4,335.0 1394.2,319.7 1393.1,309.8 1390.8,309.6 1388.6,309.5 1386.4,309.4 1384.1,309.3 1381.9,309.2 1379.7,309.1 1377.3,318.8"/><polygon points="1501.8,377.5 1504.2,379.5 1506.6,381.5 1508.9,383.6 1511.2,385.6 1513.4,387.7 1515.6,389.9 1517.7,392.1 1519.8,394.3 1542.9,378.6 1549.3,369.9 1546.7,367.2 1544.0,364.6 1541.3,362.0 1538.5,359.5 1535.7,357.0 1532.8,354.6 1522.0,359.2"/><polygon points="1519.8,394.3 1523.7,398.5 1527.3,402.9 1530.8,407.4 1534.1,411.9 1537.2,416.6 1540.1,421.3 1542.9,426.2 1545.4,431.1 1552.9,428.4 1560.6,419.2 1557.5,413.8 1554.3,408.6 1550.9,403.4 1547.2,398.4 1543.4,393.5 1539.3,388.6 1526.2,390.0"/><polygon points="1557.0,463.6 1557.8,467.4 1558.4,471.2 1559.0,475.0 1559.5,478.8 1559.8,482.6 1560.0,486.5 1560.2,490.3 1560.2,494.1 1583.0,494.3 1594.4,489.8 1594.2,485.3 1593.9,480.7 1593.5,476.2 1593.0,471.7 1592.3,467.2 1591.5,462.7 1579.4,460.0"/><polygon points="1972.2,675.0 1972.0,681.6 1971.6,688.1 1970.8,694.6 1969.7,701.1 1968.3,707.6 1966.5,714.0 1964.5,720.3 1962.2,726.6 1970.1,728.9 1983.5,725.1 1985.7,718.1 1987.6,711.1 1989.2,703.9 1990.4,696.7 1991.3,689.5 1991.8,682.3 1980.6,675.0"/><polygon points="1949.3,751.5 1946.3,756.1 1943.0,760.6 1939.7,764.9 1936.1,769.2 1932.4,773.4 1928.5,777.5 1924.5,781.5 1920.3,785.3 1938.9,800.6 1952.1,802.7 1956.9,798.0 1961.6,793.1 1966.1,788.0 1970.3,782.9 1974.4,777.6 1978.3,772.3 1971.9,762.1"/><polygon points="1827.8,830.2 1824.5,830.8 1821.3,831.4 1818.0,831.9 1814.8,832.3 1811.5,832.8 1808.2,833.1 1804.9,833.4 1801.6,833.7 1803.7,854.9 1808.6,864.3 1812.5,864.0 1816.5,863.5 1820.4,863.0 1824.3,862.5 1828.2,861.9 1832.1,861.2 1833.4,851.0"/><polygon points="1771.9,833.8 1767.0,833.4 1762.0,832.9 1757.1,832.3 1752.2,831.6 1747.3,830.8 1742.5,829.8 1737.6,828.8 1732.8,827.6 1729.2,838.0 1731.4,848.7 1736.8,849.9 1742.3,850.9 1747.8,851.9 1753.4,852.7 1758.9,853.4 1764.5,853.9 1771.0,844.6"/><polygon points="1699.7,816.1 1692.8,812.9 1686.1,809.4 1679.6,805.7 1673.3,801.8 1667.2,797.6 1661.2,793.2 1655.5,788.6 1650.1,783.8 1638.0,793.5 1635.9,805.7 1642.5,811.0 1649.3,816.0 1656.4,820.8 1663.6,825.3 1671.1,829.6 1678.8,833.6 1692.0,828.7"/><polygon points="1633.9,766.9 1632.3,765.0 1630.8,763.0 1629.3,761.0 1627.8,759.0 1626.4,757.0 1625.0,755.0 1623.6,753.0 1622.3,750.9 1614.4,754.5 1605.9,761.5 1607.4,763.7 1608.9,766.0 1610.5,768.2 1612.2,770.4 1613.8,772.6 1615.5,774.8 1626.6,771.3"/><polygon points="1611.6,619.3 1613.0,616.2 1614.5,613.0 1616.0,610.0 1617.7,606.9 1619.4,603.9 1621.2,600.9 1623.1,597.9 1625.0,595.0 1600.0,582.6 1587.8,581.2 1585.5,584.8 1583.3,588.5 1581.2,592.2 1579.2,595.9 1577.3,599.6 1575.5,603.4 1584.5,610.6"/><polygon points="1625.0,595.0 1628.4,590.2 1632.0,585.5 1635.7,580.9 1639.7,576.5 1643.9,572.1 1648.2,567.9 1652.7,563.8 1657.3,559.9 1641.6,545.8 1628.2,543.5 1622.9,548.3 1617.8,553.3 1612.9,558.4 1608.2,563.7 1603.7,569.1 1599.5,574.7 1605.3,585.2"/><polygon points="1683.8,541.9 1687.2,540.0 1690.5,538.3 1693.9,536.6 1697.4,534.9 1700.9,533.4 1704.4,531.9 1708.0,530.4 1711.6,529.0 1708.5,523.0 1700.0,515.6 1696.0,517.2 1692.2,518.9 1688.3,520.6 1684.5,522.4 1680.7,524.3 1677.0,526.2 1679.6,536.4"/><polygon points="1738.9,520.9 1746.6,519.4 1754.3,518.1 1762.1,517.1 1769.9,516.3 1777.7,515.9 1785.6,515.8 1793.5,515.9 1801.3,516.3 1803.7,491.1 1795.1,480.9 1785.5,480.7 1775.9,480.9 1766.3,481.4 1756.8,482.3 1747.3,483.5 1737.9,485.1 1731.4,496.4"/><polygon points="1878.5,536.8 1882.5,538.8 1886.4,540.9 1890.2,543.0 1894.0,545.3 1897.7,547.6 1901.3,549.9 1904.9,552.4 1908.3,554.9 1920.4,543.1 1923.9,532.8 1919.7,529.9 1915.5,527.2 1911.2,524.5 1906.9,521.9 1902.4,519.4 1897.9,517.0 1887.7,523.2"/><polygon points="1945.6,593.0 1949.3,598.5 1952.8,604.2 1956.0,610.0 1958.9,615.9 1961.6,621.9 1963.9,628.0 1966.0,634.2 1967.8,640.4 1984.3,637.3 1993.4,628.0 1991.0,620.9 1988.3,613.8 1985.3,606.9 1981.9,600.1 1978.2,593.4 1974.2,586.9 1960.1,585.5"/></g>
<ellipse cx="1374" cy="493" rx="190" ry="162" fill="#b4b4b4" stroke="#141414" stroke-width="1.8"/>
<ellipse cx="1786" cy="675" rx="190" ry="162.5" fill="#b4b4b4" stroke="#141414" stroke-width="1.8"/>
<ellipse cx="1251.7" cy="257.0" rx="18.5" ry="16" fill="#b4b4b4" stroke="#141414" stroke-width="1.6"/>
<ellipse cx="1085.0" cy="546.4" rx="18.5" ry="16" fill="#b4b4b4" stroke="#141414" stroke-width="1.6"/>
<ellipse cx="1497.0" cy="728.0" rx="18.5" ry="16" fill="#b4b4b4" stroke="#141414" stroke-width="1.6"/>
<ellipse cx="1662.0" cy="439.0" rx="18.5" ry="16" fill="#b4b4b4" stroke="#141414" stroke-width="1.6"/>
<ellipse cx="2074.8" cy="620.8" rx="18.5" ry="16" fill="#b4b4b4" stroke="#141414" stroke-width="1.6"/>
<ellipse cx="1908.4" cy="909.6" rx="18.5" ry="16" fill="#b4b4b4" stroke="#141414" stroke-width="1.6"/>
<path d="M1513.0 234.0 L1564.0 254.7 L1638.0 312.6 L1694.0 390.0 L1713.7 470.0 L1711.6 547.7 L1683.7 629.0 L1627.8 698.0 L1541.8 762.6 L1468.8 779.8 L1365.0 785.7 L1270.0 771.0 L1182.0 731.6 L1110.5 673.7 L1059.5 597.3 L1034.0 516.0 L1036.4 435.0 L1066.5 356.6 L1119.7 289.4 L1193.8 236.0 L1290.0 200.0 L1400.0 190.0Z" fill="none" stroke="#ffffff" stroke-width="1.5"/>
<path d="M1696.6 388.7 L1793.0 381.0 L1890.0 396.4 L1978.0 436.0 L2051.0 494.0 L2100.6 567.0 L2126.0 646.6 L2126.0 730.0 L2096.0 810.0 L2040.0 876.5 L1963.0 926.0 L1868.5 956.0 L1778.0 966.8 L1683.7 951.7 L1593.4 913.0 L1520.0 852.9 L1468.8 779.8 L1445.0 700.0 L1447.0 616.5 L1475.0 539.0 L1531.0 470.0 L1602.0 423.0Z" fill="none" stroke="#ffffff" stroke-width="1.5"/>
<path d="M1231.0 334.0 L1325.0 301.0 L1432.0 306.0 L1514.0 339.0 L1580.0 413.0 L1603.0 497.0 L1580.0 581.0 L1514.0 650.0 L1427.0 683.0 L1320.0 681.0 L1229.0 637.0 L1163.0 581.0 L1147.0 485.0 L1168.0 398.0Z" fill="none" stroke="#ffffff" stroke-width="1.3"/>
<path d="M1643.0 516.0 L1737.0 483.0 L1844.0 488.0 L1926.0 521.0 L1992.0 595.0 L2015.0 679.0 L1992.0 763.0 L1926.0 832.0 L1839.0 865.0 L1732.0 863.0 L1641.0 819.0 L1575.0 763.0 L1559.0 667.0 L1580.0 580.0Z" fill="none" stroke="#ffffff" stroke-width="1.3"/>
<path d="M1996 766 L1961.4 1136" stroke="#ffffff" stroke-opacity="0.7" stroke-width="1" stroke-dasharray="3 4"/>
<g transform="translate(2930,230) scale(0.0992)" stroke="#111" stroke-width="11" stroke-linejoin="round">
<polygon points="845,85 730,215 965,215" fill="#8f91ad"/>
<polygon points="730,1275 965,1275 845,1405" fill="#8f91ad"/>
<polygon points="185,745 320,630 320,860" fill="#8f91ad"/>
<polygon points="1510,745 1375,630 1375,860" fill="#8f91ad"/>
<circle cx="1422" cy="168" r="65" fill="#8f91ad"/>
<path d="M670,160 Q500,200 375,300 L345,425 L490,385 L450,355 Q560,265 680,225 Z" fill="#8f91ad"/>
<path d="M1020,160 Q1190,200 1315,300 L1345,425 L1200,385 L1240,355 Q1130,265 1010,225 Z" fill="#8f91ad"/>
<polygon points="1195,1160 1300,1120 1400,1160 1400,1270 1300,1315 1195,1270" fill="#8f91ad"/>
<path d="M1195,1160 L1300,1195 L1400,1160 M1300,1195 V1315" fill="none"/>
<polygon points="470,720 520,600 650,355 845,318 1120,435 1215,520 1245,610 1240,750 1040,1110 920,1165 830,1170 550,1050 490,980 465,860" fill="#8f91ad"/>
<path d="M585,600 L710,360 L845,335 L1115,450 L1150,555 L1010,800 L905,825 L600,705 Z" fill="none"/>
<path d="M520,600 L585,600 M650,355 L710,360 M845,318 L845,335 M1120,435 L1115,450 M600,705 L580,800 L500,805 L470,720 M580,800 L880,915 L905,825 M880,915 L930,985 L1030,975 L1070,870 L1010,800 M1070,870 L1240,620 L1150,555 M930,985 L920,1165 M1030,975 L1025,1120" fill="none"/>
</g>
<text transform="translate(3014.5,291) rotate(21)" font-size="11.5" font-weight="bold" fill="#333" text-anchor="middle" textLength="34" lengthAdjust="spacingAndGlyphs">OBEN</text>
<text transform="translate(2996.5,331) rotate(22) skewX(-20)" font-size="9.5" font-weight="bold" fill="#333" text-anchor="middle" textLength="38" lengthAdjust="spacingAndGlyphs">VORNE</text>
<path d="M2966.2 334.5 L2969.2 307.4" stroke="#0000ff" stroke-width="2.2"/>
<path d="M2966.2 334.5 L2988.5 295.5" stroke="#40e040" stroke-width="2"/>
<path d="M2966.2 334.5 L3011.3 354" stroke="#ff0000" stroke-width="2.4"/>
<path d="M3005.5 1775 L3006.5 1756" stroke="#1f1f80" stroke-width="3.2"/>
<polygon points="3008.4,1737 3000.2,1749 3005,1757 3014.5,1754.5" fill="#1f1f80"/>
<path d="M3005.5 1774 L3018 1752" stroke="#208020" stroke-width="2.6"/>
<polygon points="3025.7,1738 3014.5,1746.5 3016.5,1751.5 3025.7,1751.5" fill="#208020"/>
<path d="M3005.5 1775.5 L3042 1792" stroke="#802020" stroke-width="3.2"/>
<polygon points="3056.7,1797.6 3042.5,1785 3037.5,1796.5 3049,1798" fill="#802020"/>
<text x="3009.5" y="1736" font-size="9.5" font-weight="bold" fill="#000">Z</text>
<text x="3027" y="1737" font-size="9.5" font-weight="bold" fill="#000">Y</text>
<text x="3058.5" y="1797" font-size="9.5" font-weight="bold" fill="#000">X</text>
</g>
<rect x="0" y="0" width="3087" height="1" fill="#5a5a5a"/>
<rect x="0" y="0" width="1" height="1936" fill="#5a5a5a"/>
<rect x="0" y="1935" width="3087" height="1" fill="#3a3a3a"/>
<g transform="translate(13.0,11.0) scale(1.000)"><path d="M0 0 H11 V4 H4 V9 H9 V13 H4 V22 H0Z" fill="#d81818" stroke="#901010" stroke-width="0.6"/><g transform="translate(15.5,15)"><polygon points="7.50,0.00 5.17,2.14 5.30,5.30 2.14,5.17 0.00,7.50 -2.14,5.17 -5.30,5.30 -5.17,2.14 -7.50,0.00 -5.17,-2.14 -5.30,-5.30 -2.14,-5.17 -0.00,-7.50 2.14,-5.17 5.30,-5.30 5.17,-2.14" fill="#4a78c0" stroke="#2a4a80" stroke-width="0.6"/><circle r="2.4" fill="#fff"/></g></g>
<text x="42.0" y="30.0" font-size="18.0" fill="#000" textLength="120.0" lengthAdjust="spacingAndGlyphs">FreeCAD 0.21.2</text>
<rect x="2905" y="22" width="15" height="1.3" fill="#000"/>
<rect x="2974.5" y="15.5" width="14.5" height="14.5" fill="none" stroke="#000" stroke-width="1.2"/>
<path d="M3045 15 L3060 30 M3060 15 L3045 30" stroke="#000" stroke-width="1.2"/>
<text x="14.5" y="68.0" font-size="17.3" fill="#000" textLength="39.5" lengthAdjust="spacingAndGlyphs">Datei</text>
<text x="80.4" y="68.0" font-size="17.3" fill="#000" textLength="83.0" lengthAdjust="spacingAndGlyphs">Bearbeiten</text>
<text x="189.2" y="68.0" font-size="17.3" fill="#000" textLength="57.6" lengthAdjust="spacingAndGlyphs">Ansicht</text>
<text x="272.0" y="68.0" font-size="17.3" fill="#000" textLength="88.0" lengthAdjust="spacingAndGlyphs">Werkzeuge</text>
<text x="386.5" y="68.0" font-size="17.3" fill="#000" textLength="49.5" lengthAdjust="spacingAndGlyphs">Makro</text>
<text x="463.0" y="68.0" font-size="17.3" fill="#000" textLength="30.0" lengthAdjust="spacingAndGlyphs">Part</text>
<text x="520.0" y="68.0" font-size="17.3" fill="#000" textLength="59.0" lengthAdjust="spacingAndGlyphs">Messen</text>
<text x="605.0" y="68.0" font-size="17.3" fill="#000" textLength="57.0" lengthAdjust="spacingAndGlyphs">Fenster</text>
<text x="687.5" y="68.0" font-size="17.3" fill="#000" textLength="35.5" lengthAdjust="spacingAndGlyphs">Hilfe</text>
<rect x="1" y="77" width="3086" height="1" fill="#f8f8f8"/>
<rect x="1" y="127" width="3086" height="1" fill="#c4c4c4"/>
<rect x="1" y="128" width="3086" height="1" fill="#fbfbfb"/>
<rect x="1" y="178" width="3086" height="1" fill="#c4c4c4"/>
<rect x="1" y="179" width="3086" height="1" fill="#fbfbfb"/>
<rect x="1" y="229" width="3086" height="1" fill="#c4c4c4"/>
<rect x="1" y="230" width="3086" height="1" fill="#fbfbfb"/>
<rect x="6" y="84" width="2" height="2" fill="#b8b8b8"/><rect x="6" y="88" width="2" height="2" fill="#b8b8b8"/><rect x="6" y="92" width="2" height="2" fill="#b8b8b8"/><rect x="6" y="96" width="2" height="2" fill="#b8b8b8"/><rect x="6" y="100" width="2" height="2" fill="#b8b8b8"/><rect x="6" y="104" width="2" height="2" fill="#b8b8b8"/><rect x="6" y="108" width="2" height="2" fill="#b8b8b8"/><rect x="6" y="112" width="2" height="2" fill="#b8b8b8"/><rect x="6" y="116" width="2" height="2" fill="#b8b8b8"/><rect x="6" y="120" width="2" height="2" fill="#b8b8b8"/>
<g transform="translate(23.0,87.0) scale(1.000)"><defs><radialGradient id="glow"><stop offset="0" stop-color="#ffffa0"/><stop offset="0.5" stop-color="#ffff40"/><stop offset="1" stop-color="#ffff40" stop-opacity="0"/></radialGradient></defs><rect x="3" y="3" width="26" height="28" rx="1" fill="#ececec" stroke="#9a9a9a" stroke-width="1.2"/><circle cx="22" cy="7" r="7" fill="url(#glow)"/></g>
<g transform="translate(68.0,87.0) scale(1.000)"><path d="M2 5 L4 28 H30 L28 5Z" fill="#c8c8c8" stroke="#888"/><rect x="8" y="1" width="18" height="14" fill="#f4f4f4" stroke="#aaa"/><path d="M6 14 H34 L30 31 H2Z" fill="#78a4dc" stroke="#4a70a8" stroke-width="1.2"/></g>
<g transform="translate(114.0,87.0) scale(1.000)"><polygon points="7,10 29,10 35,21 1,21" fill="#e4e4e4" stroke="#8a8a8a" stroke-width="1"/><rect x="1" y="21" width="34" height="12" rx="1.5" fill="#bdbdbd" stroke="#7a7a7a" stroke-width="1"/><path d="M22 25v5 M25 25v5 M28 25v5 M31 25v5" stroke="#8c8c8c" stroke-width="1"/><path d="M4 10 Q6 0 15 1 Q23 2 22 11 L27 11 L19.5 20 L12 11 L17 11 Q17 6 13 6 Q8 6 4 10Z" fill="#3d7fd6" stroke="#245aa0" stroke-width="1"/></g>
<rect x="156" y="78" width="2" height="49" fill="#c8c8c8"/>
<rect x="164" y="84" width="2" height="2" fill="#b8b8b8"/><rect x="164" y="88" width="2" height="2" fill="#b8b8b8"/><rect x="164" y="92" width="2" height="2" fill="#b8b8b8"/><rect x="164" y="96" width="2" height="2" fill="#b8b8b8"/><rect x="164" y="100" width="2" height="2" fill="#b8b8b8"/><rect x="164" y="104" width="2" height="2" fill="#b8b8b8"/><rect x="164" y="108" width="2" height="2" fill="#b8b8b8"/><rect x="164" y="112" width="2" height="2" fill="#b8b8b8"/><rect x="164" y="116" width="2" height="2" fill="#b8b8b8"/><rect x="164" y="120" width="2" height="2" fill="#b8b8b8"/>
<g transform="translate(180.0,87.0) scale(1.000)"><path d="M12 2 L2 12 L12 22 V16 Q24 16 22 28 Q32 12 12 8Z" fill="#dadada" stroke="#c4c4c4" stroke-width="1.2"/><ellipse cx="16" cy="30" rx="12" ry="3" fill="#e2e2e2"/></g>
<path d="M222.0 101.0h11l-5.5 6z" fill="#707070"/>
<g transform="translate(276.0,87.0) scale(-1,1)"><path d="M12 2 L2 12 L12 22 V16 Q24 16 22 28 Q32 12 12 8Z" fill="#dadada" stroke="#c4c4c4" stroke-width="1.2"/><ellipse cx="16" cy="30" rx="12" ry="3" fill="#e2e2e2"/></g>
<path d="M287.0 101.0h11l-5.5 6z" fill="#707070"/>
<rect x="305" y="91" width="1" height="27" fill="#c4c4c4"/>
<g transform="translate(317.0,87.0) scale(1.000)"><path d="M5 15 Q6 4 18 4 Q26 4 29 10 L33 6 V17 H22 L26 13 Q23 9 17 9 Q10 9 10 16Z" fill="#b2b2b2" stroke="#8e8e8e"/><path d="M29 19 Q28 30 16 30 Q8 30 5 24 L1 28 V17 H12 L8 21 Q11 25 17 25 Q24 25 24 18Z" fill="#b2b2b2" stroke="#8e8e8e"/></g>
<rect x="358" y="78" width="2" height="49" fill="#c8c8c8"/>
<rect x="367" y="84" width="2" height="2" fill="#b8b8b8"/><rect x="367" y="88" width="2" height="2" fill="#b8b8b8"/><rect x="367" y="92" width="2" height="2" fill="#b8b8b8"/><rect x="367" y="96" width="2" height="2" fill="#b8b8b8"/><rect x="367" y="100" width="2" height="2" fill="#b8b8b8"/><rect x="367" y="104" width="2" height="2" fill="#b8b8b8"/><rect x="367" y="108" width="2" height="2" fill="#b8b8b8"/><rect x="367" y="112" width="2" height="2" fill="#b8b8b8"/><rect x="367" y="116" width="2" height="2" fill="#b8b8b8"/><rect x="367" y="120" width="2" height="2" fill="#b8b8b8"/>
<rect x="376.5" y="87.5" width="215" height="31" fill="#e1e1e1" stroke="#adadad" stroke-width="1"/>
<g transform="translate(384.0,92.0) scale(0.920)"><polygon points="1,6 14,1 24,4 11,9" fill="#8fb4e8" stroke="#2a4a80"/><polygon points="1,6 11,9 11,20 1,17" fill="#5a8ad0" stroke="#2a4a80"/><polygon points="11,9 24,4 24,15 11,20" fill="#2f5ea8" stroke="#2a4a80"/></g>
<text x="412.5" y="109.0" font-size="16.5" fill="#000" textLength="29.0" lengthAdjust="spacingAndGlyphs">Part</text>
<path d="M572.5 100 L578 105.5 L583.5 100" fill="none" stroke="#333" stroke-width="1.2"/>
<rect x="593" y="78" width="2" height="49" fill="#c8c8c8"/>
<rect x="601" y="84" width="2" height="2" fill="#b8b8b8"/><rect x="601" y="88" width="2" height="2" fill="#b8b8b8"/><rect x="601" y="92" width="2" height="2" fill="#b8b8b8"/><rect x="601" y="96" width="2" height="2" fill="#b8b8b8"/><rect x="601" y="100" width="2" height="2" fill="#b8b8b8"/><rect x="601" y="104" width="2" height="2" fill="#b8b8b8"/><rect x="601" y="108" width="2" height="2" fill="#b8b8b8"/><rect x="601" y="112" width="2" height="2" fill="#b8b8b8"/><rect x="601" y="116" width="2" height="2" fill="#b8b8b8"/><rect x="601" y="120" width="2" height="2" fill="#b8b8b8"/>
<g transform="translate(616.0,87.0) scale(1.000)"><defs><radialGradient id="rec" cx="0.4" cy="0.35" r="0.7"><stop offset="0" stop-color="#ff4040"/><stop offset="1" stop-color="#b00000"/></radialGradient></defs><circle cx="17" cy="17" r="16.5" fill="url(#rec)" stroke="#700000" stroke-width="1"/></g>
<g transform="translate(662.0,87.0) scale(1.000)"><rect x="0.5" y="0.5" width="33" height="33" fill="#b4b4b4" stroke="#8a8a8a" stroke-width="1.2"/></g>
<g transform="translate(710.0,87.0) scale(1.000)"><rect x="1" y="4" width="30" height="29" fill="#f8f8f8" stroke="#999"/><path d="M3 3h26" stroke="#c8a400" stroke-width="3" stroke-dasharray="2 2"/><path d="M5 11h20 M5 15h16 M5 19h14" stroke="#bbb" stroke-width="1.2"/><path d="M9 28 L29 13 L33 16 L13 31 Z" fill="#e8a830" stroke="#8a5a10"/><path d="M29 13 L33 16 L34 14 L31 11Z" fill="#e02020"/></g>
<g transform="translate(755.0,87.0) scale(1.000)"><polygon points="1,1 34,17 1,34" fill="#b8b8b8" stroke="#9a9a9a"/></g>
<rect x="6" y="135" width="2" height="2" fill="#b8b8b8"/><rect x="6" y="139" width="2" height="2" fill="#b8b8b8"/><rect x="6" y="143" width="2" height="2" fill="#b8b8b8"/><rect x="6" y="147" width="2" height="2" fill="#b8b8b8"/><rect x="6" y="151" width="2" height="2" fill="#b8b8b8"/><rect x="6" y="155" width="2" height="2" fill="#b8b8b8"/><rect x="6" y="159" width="2" height="2" fill="#b8b8b8"/><rect x="6" y="163" width="2" height="2" fill="#b8b8b8"/><rect x="6" y="167" width="2" height="2" fill="#b8b8b8"/><rect x="6" y="171" width="2" height="2" fill="#b8b8b8"/>
<g transform="translate(23.0,138.0) scale(1.000)"><path d="M2 1 H28 V34 H8 L2 28Z" fill="#e8e8e8" stroke="#666" stroke-width="1.2"/><path d="M2 28 H8 V34" fill="#bbb" stroke="#666"/><circle cx="13" cy="13" r="8" fill="#30c0d0" stroke="#11676e" stroke-width="1.5"/><path d="M18 19 L26 27" stroke="#11676e" stroke-width="4"/><path d="M18 19 L26 27" stroke="#30c0d0" stroke-width="2.5"/></g>
<g transform="translate(68.0,138.0) scale(1.000)"><circle cx="13" cy="13" r="11" fill="#30c0d0" stroke="#11676e" stroke-width="1.5"/><circle cx="13" cy="13" r="7" fill="#2ab0c0"/><path d="M21 21 L33 33" stroke="#11676e" stroke-width="6"/><path d="M21 21 L33 33" stroke="#30c0d0" stroke-width="3.5"/><path d="M8 18 L16 10 M11 9 H17 V15" stroke="#e8e8e8" stroke-width="2.5" fill="none"/></g>
<g transform="translate(114.0,138.0) scale(1.000)"><polygon points="17,1 33,9 33,26 17,34 1,26 1,9" fill="#30d0d8" stroke="#11676e" stroke-width="1.5"/><circle cx="17" cy="17" r="10" fill="none" stroke="#d01818" stroke-width="3.5"/><path d="M10 10 L24 24" stroke="#d01818" stroke-width="3.5"/></g>
<path d="M159.0 151.0h11l-5.5 6z" fill="#000"/>
<g transform="translate(180.0,138.0) scale(1.000)"><circle cx="16" cy="18" r="11" fill="#3a68b0" stroke="#1f3f70"/><path d="M1 9 L9 3 H33 V25 L26 32 H1Z M1 9 H26 V32 M26 9 L33 3" fill="none" stroke="#20c020" stroke-width="2.5"/><path d="M20 20 L33 33 L27 34Z" fill="#eee" stroke="#666"/></g>
<rect x="222" y="136" width="1" height="36" fill="#c4c4c4"/>
<g transform="translate(234.0,138.0) scale(1.000)"><polygon points="1,17 15,4 15,12 34,12 34,22 15,22 15,30" fill="#c4c4c4" stroke="#a8a8a8"/></g>
<g transform="translate(315.0,138.0) scale(-1,1)"><polygon points="1,17 15,4 15,12 34,12 34,22 15,22 15,30" fill="#c4c4c4" stroke="#a8a8a8"/></g>
<g transform="translate(327.0,138.0) scale(1.000)"><polygon points="5,8 20,2 34,7 19,13" fill="#6a98d8" stroke="#1f3f70"/><polygon points="5,8 19,13 19,31 5,26" fill="#3a68b0" stroke="#1f3f70"/><polygon points="19,13 34,7 34,26 19,31" fill="#1f4a90" stroke="#1f3f70"/><path d="M2 33 Q2 22 14 22 V18 L22 25 L14 31 V27 Q7 27 2 33Z" fill="#30c0d0" stroke="#11676e"/></g>
<path d="M372.0 151.0h11l-5.5 6z" fill="#000"/>
<rect x="389" y="136" width="1" height="36" fill="#c4c4c4"/>
<g transform="translate(401.0,138.0) scale(1.000)"><circle cx="14" cy="14" r="12" fill="#30c0d0" stroke="#11676e" stroke-width="1.5"/><circle cx="14" cy="14" r="8" fill="#2ab8c8"/><path d="M22 22 L33 33" stroke="#11676e" stroke-width="6"/><path d="M22 22 L33 33" stroke="#30c0d0" stroke-width="3.5"/><path d="M8 12 Q10 7 16 8 L18 6 V12 H12 L14 10 Q11 10 10 13Z M20 16 Q18 21 12 20 L10 22 V16 H16 L14 18 Q17 18 18 15Z" fill="#e0e0e0"/></g>
<path d="M445.0 151.0h11l-5.5 6z" fill="#000"/>
<g transform="translate(466.0,138.0) scale(1.000)"><polygon points="16.7,0.3 33.0,7.7 16.7,15.7 0.0,7.7" fill="#2fd0d8" stroke="#11676e" stroke-width="1.3" stroke-linejoin="round"/><polygon points="16.7,3.0 30.2,7.8 16.7,12.8 2.8,7.8" fill="#ffffff" stroke="#11676e" stroke-width="1.1"/><polygon points="0.0,7.7 16.7,15.7 16.7,33.4 0.4,29.5" fill="#2fd0d8" stroke="#11676e" stroke-width="1.3" stroke-linejoin="round"/><polygon points="2.8,10.7 13.9,17.0 13.9,30.8 3.1,27.8" fill="#ffffff" stroke="#11676e" stroke-width="1.1"/><polygon points="16.7,15.7 33.0,7.7 34.0,26.6 16.7,33.4" fill="#2fd0d8" stroke="#11676e" stroke-width="1.3" stroke-linejoin="round"/><polygon points="19.4,16.8 30.4,10.6 31.1,25.3 19.4,30.7" fill="#ffffff" stroke="#11676e" stroke-width="1.1"/><ellipse cx="16.7" cy="8" rx="1.4" ry="3" fill="#11676e"/><path d="M8 24l3-1.5 M22 22.5l3 1.5" stroke="#11676e" stroke-width="2.4" stroke-linecap="round"/></g>
<rect x="509" y="136" width="1" height="36" fill="#c4c4c4"/>
<g transform="translate(521.0,138.0) scale(1.000)"><polygon points="0.5,8.0 12.3,0.8 33.3,3.0 23.0,10.3" fill="#2fd0d8" stroke="#11676e" stroke-width="1.3" stroke-linejoin="round"/><polygon points="2.5,7.0 12.9,2.8 31.3,4.1 22.3,8.3" fill="#ffffff" stroke="#11676e" stroke-width="1.1"/><polygon points="23.0,10.3 33.3,3.0 33.3,24.0 22.7,33.0" fill="#2fd0d8" stroke="#11676e" stroke-width="1.3" stroke-linejoin="round"/><polygon points="25.5,11.6 30.7,5.5 30.7,22.9 25.3,30.3" fill="#ffffff" stroke="#11676e" stroke-width="1.1"/><polygon points="0.5,8.0 23.0,10.3 22.7,33.0 1.0,30.3" fill="#2fd0d8" stroke="#11676e" stroke-width="1.3" stroke-linejoin="round"/></g>
<g transform="translate(568.0,138.0) scale(1.000)"><polygon points="0.5,8.0 12.3,0.8 33.3,3.0 23.0,10.3" fill="#2fd0d8" stroke="#11676e" stroke-width="1.3" stroke-linejoin="round"/><polygon points="23.0,10.3 33.3,3.0 33.3,24.0 22.7,33.0" fill="#2fd0d8" stroke="#11676e" stroke-width="1.3" stroke-linejoin="round"/><polygon points="25.5,11.6 30.7,5.5 30.7,22.9 25.3,30.3" fill="#ffffff" stroke="#11676e" stroke-width="1.1"/><polygon points="0.5,8.0 23.0,10.3 22.7,33.0 1.0,30.3" fill="#2fd0d8" stroke="#11676e" stroke-width="1.3" stroke-linejoin="round"/><polygon points="3.1,10.6 20.4,12.4 20.2,30.4 3.5,28.2" fill="#ffffff" stroke="#11676e" stroke-width="1.1"/><ellipse cx="12" cy="20" rx="1.3" ry="2.8" fill="#11676e"/><path d="M6 28l3-2 M15 25h4 M27 25h3" stroke="#11676e" stroke-width="2.2" stroke-linecap="round"/></g>
<g transform="translate(614.0,138.0) scale(1.000)"><polygon points="0.5,8.0 12.3,0.8 33.3,3.0 23.0,10.3" fill="#2fd0d8" stroke="#11676e" stroke-width="1.3" stroke-linejoin="round"/><polygon points="2.5,7.0 12.9,2.8 31.3,4.1 22.3,8.3" fill="#ffffff" stroke="#11676e" stroke-width="1.1"/><polygon points="23.0,10.3 33.3,3.0 33.3,24.0 22.7,33.0" fill="#2fd0d8" stroke="#11676e" stroke-width="1.3" stroke-linejoin="round"/><polygon points="0.5,8.0 23.0,10.3 22.7,33.0 1.0,30.3" fill="#2fd0d8" stroke="#11676e" stroke-width="1.3" stroke-linejoin="round"/><polygon points="3.1,10.6 20.4,12.4 20.2,30.4 3.5,28.2" fill="#ffffff" stroke="#11676e" stroke-width="1.1"/><ellipse cx="12" cy="20" rx="1.3" ry="2.8" fill="#11676e"/><path d="M6 28l3-2 M15 25h4 M27 25h3" stroke="#11676e" stroke-width="2.2" stroke-linecap="round"/></g>
<rect x="657" y="136" width="1" height="36" fill="#c4c4c4"/>
<g transform="translate(670.0,138.0) scale(1.000)"><polygon points="0.5,8.0 12.3,0.8 33.3,3.0 23.0,10.3" fill="#2fd0d8" stroke="#11676e" stroke-width="1.3" stroke-linejoin="round"/><polygon points="2.5,7.0 12.9,2.8 31.3,4.1 22.3,8.3" fill="#ffffff" stroke="#11676e" stroke-width="1.1"/><polygon points="23.0,10.3 33.3,3.0 33.3,24.0 22.7,33.0" fill="#2fd0d8" stroke="#11676e" stroke-width="1.3" stroke-linejoin="round"/><polygon points="25.5,11.6 30.7,5.5 30.7,22.9 25.3,30.3" fill="#ffffff" stroke="#11676e" stroke-width="1.1"/><polygon points="0.5,8.0 23.0,10.3 22.7,33.0 1.0,30.3" fill="#2fd0d8" stroke="#11676e" stroke-width="1.3" stroke-linejoin="round"/><polygon points="3.1,10.6 20.4,12.4 20.2,30.4 3.5,28.2" fill="#ffffff" stroke="#11676e" stroke-width="1.1"/><polygon points="9,9 24,10 24,24 9,22" fill="#2fd0d8" stroke="#11676e" stroke-width="1"/></g>
<g transform="translate(716.0,138.0) scale(1.000)"><polygon points="0.5,8.0 12.3,0.8 33.3,3.0 23.0,10.3" fill="#2fd0d8" stroke="#11676e" stroke-width="1.3" stroke-linejoin="round"/><polygon points="2.5,7.0 12.9,2.8 31.3,4.1 22.3,8.3" fill="#ffffff" stroke="#11676e" stroke-width="1.1"/><polygon points="23.0,10.3 33.3,3.0 33.3,24.0 22.7,33.0" fill="#2fd0d8" stroke="#11676e" stroke-width="1.3" stroke-linejoin="round"/><polygon points="25.5,11.6 30.7,5.5 30.7,22.9 25.3,30.3" fill="#ffffff" stroke="#11676e" stroke-width="1.1"/><polygon points="0.5,8.0 23.0,10.3 22.7,33.0 1.0,30.3" fill="#2fd0d8" stroke="#11676e" stroke-width="1.3" stroke-linejoin="round"/><polygon points="3.1,10.6 20.4,12.4 20.2,30.4 3.5,28.2" fill="#ffffff" stroke="#11676e" stroke-width="1.1"/><polygon points="4,28 12,23 31,23 21,30" fill="#2fd0d8" stroke="#11676e" stroke-width="1"/><ellipse cx="12" cy="20" rx="1.3" ry="2.8" fill="#11676e"/><path d="M6 28l3-2 M15 25h4 M27 25h3" stroke="#11676e" stroke-width="2.2" stroke-linecap="round"/></g>
<g transform="translate(763.0,138.0) scale(1.000)"><polygon points="0.5,8.0 12.3,0.8 33.3,3.0 23.0,10.3" fill="#2fd0d8" stroke="#11676e" stroke-width="1.3" stroke-linejoin="round"/><polygon points="2.5,7.0 12.9,2.8 31.3,4.1 22.3,8.3" fill="#ffffff" stroke="#11676e" stroke-width="1.1"/><polygon points="23.0,10.3 33.3,3.0 33.3,24.0 22.7,33.0" fill="#2fd0d8" stroke="#11676e" stroke-width="1.3" stroke-linejoin="round"/><polygon points="25.5,11.6 30.7,5.5 30.7,22.9 25.3,30.3" fill="#ffffff" stroke="#11676e" stroke-width="1.1"/><polygon points="0.5,8.0 23.0,10.3 22.7,33.0 1.0,30.3" fill="#2fd0d8" stroke="#11676e" stroke-width="1.3" stroke-linejoin="round"/><polygon points="3.1,10.6 20.4,12.4 20.2,30.4 3.5,28.2" fill="#ffffff" stroke="#11676e" stroke-width="1.1"/><polygon points="4,11 11,5 11,24 4,29" fill="#1aa8b0" stroke="#11676e" stroke-width="1"/></g>
<rect x="806" y="136" width="1" height="36" fill="#c4c4c4"/>
<g transform="translate(816.0,138.0) scale(1.000)"><polygon points="1,9 9,1 33,25 25,33" fill="#30d0d8" stroke="#11676e" stroke-width="1.5"/><path d="M9 9l3-3 M13 13l4-4 M17 17l3-3 M21 21l4-4 M25 25l3-3" stroke="#11676e" stroke-width="1.5"/></g>
<rect x="860" y="129" width="2" height="49" fill="#c8c8c8"/>
<rect x="867" y="135" width="2" height="2" fill="#b8b8b8"/><rect x="867" y="139" width="2" height="2" fill="#b8b8b8"/><rect x="867" y="143" width="2" height="2" fill="#b8b8b8"/><rect x="867" y="147" width="2" height="2" fill="#b8b8b8"/><rect x="867" y="151" width="2" height="2" fill="#b8b8b8"/><rect x="867" y="155" width="2" height="2" fill="#b8b8b8"/><rect x="867" y="159" width="2" height="2" fill="#b8b8b8"/><rect x="867" y="163" width="2" height="2" fill="#b8b8b8"/><rect x="867" y="167" width="2" height="2" fill="#b8b8b8"/><rect x="867" y="171" width="2" height="2" fill="#b8b8b8"/>
<g transform="translate(884.0,138.0) scale(1.000)"><polygon points="2,22 16,16 28,20 14,26" fill="#fff27a" stroke="#333"/><polygon points="2,22 14,26 14,33 2,29" fill="#f0d820" stroke="#333"/><polygon points="14,26 28,20 28,27 14,33" fill="#d8b800" stroke="#333"/><polygon points="4,10 16,4 26,8 14,14" fill="#fff27a" stroke="#333"/><polygon points="4,10 14,14 14,22 4,18" fill="#f0d820" stroke="#333"/><polygon points="14,14 26,8 26,16 14,22" fill="#d8b800" stroke="#333"/></g>
<g transform="translate(929.0,138.0) scale(1.000)"><path d="M1 4 H12 L14 7 H28 V30 H1Z" fill="#8a8a8a" stroke="#777"/><path d="M1 10 H30 V33 H3Z" fill="#78a4dc" stroke="#4a70a8" stroke-width="1.2"/></g>
<g transform="translate(976.0,138.0) scale(1.000)"><path d="M14 4 H4 V33 H27 V26" fill="none" stroke="#1f4f90" stroke-width="3.5" stroke-linejoin="round"/><path d="M10 24 Q10 10 22 10 V4 L32 13 L22 21 V15 Q14 15 10 24Z" fill="#50c020" stroke="#2a6a10"/></g>
<g transform="translate(1021.0,138.0) scale(1.000)"><path d="M14 4 H4 V33 H27 V26" fill="none" stroke="#1f4f90" stroke-width="3.5" stroke-linejoin="round"/><path d="M10 24 Q10 10 22 10 V4 L32 13 L22 21 V15 Q14 15 10 24Z" fill="#50c020" stroke="#2a6a10"/><path d="M28 3 L35 12 L28 22" fill="none" stroke="#50c020" stroke-width="3"/></g>
<path d="M1066.0 151.0h11l-5.5 6z" fill="#000"/>
<rect x="1082" y="129" width="2" height="49" fill="#c8c8c8"/>
<rect x="1090" y="135" width="2" height="2" fill="#b8b8b8"/><rect x="1090" y="139" width="2" height="2" fill="#b8b8b8"/><rect x="1090" y="143" width="2" height="2" fill="#b8b8b8"/><rect x="1090" y="147" width="2" height="2" fill="#b8b8b8"/><rect x="1090" y="151" width="2" height="2" fill="#b8b8b8"/><rect x="1090" y="155" width="2" height="2" fill="#b8b8b8"/><rect x="1090" y="159" width="2" height="2" fill="#b8b8b8"/><rect x="1090" y="163" width="2" height="2" fill="#b8b8b8"/><rect x="1090" y="167" width="2" height="2" fill="#b8b8b8"/><rect x="1090" y="171" width="2" height="2" fill="#b8b8b8"/>
<g transform="translate(1105.0,138.0) scale(1.000)"><polygon points="1,1 20,12 13,14 20,28 15,31 9,17 3,23" fill="#808080" stroke="#404040" stroke-width="1.2"/><path d="M19 8 Q19 2 25 2 Q32 2 32 8 Q32 13 26 15 V21" fill="none" stroke="#2a5aa0" stroke-width="3.5"/><circle cx="26" cy="28" r="2.5" fill="#2a5aa0"/></g>
<rect x="3085" y="129" width="1" height="49" fill="#c4c4c4"/>
<rect x="6" y="186" width="2" height="2" fill="#b8b8b8"/><rect x="6" y="190" width="2" height="2" fill="#b8b8b8"/><rect x="6" y="194" width="2" height="2" fill="#b8b8b8"/><rect x="6" y="198" width="2" height="2" fill="#b8b8b8"/><rect x="6" y="202" width="2" height="2" fill="#b8b8b8"/><rect x="6" y="206" width="2" height="2" fill="#b8b8b8"/><rect x="6" y="210" width="2" height="2" fill="#b8b8b8"/><rect x="6" y="214" width="2" height="2" fill="#b8b8b8"/><rect x="6" y="218" width="2" height="2" fill="#b8b8b8"/><rect x="6" y="222" width="2" height="2" fill="#b8b8b8"/>
<g transform="translate(22.0,189.0) scale(1.000)"><polygon points="2,10 20,6 33,10 16,15" fill="#fff27a" stroke="#333" stroke-width="1.4"/><polygon points="2,10 16,15 16,33 2,28" fill="url(#yg)" stroke="#333" stroke-width="1.4"/><polygon points="16,15 33,10 33,28 16,33" fill="#d2b000" stroke="#333" stroke-width="1.4"/></g>
<g transform="translate(70.0,189.0) scale(1.000)"><path d="M2 7 V27 A14 5 0 0 0 30 27 V7" fill="url(#ygh)" stroke="#333" stroke-width="1.4"/><ellipse cx="16" cy="7" rx="14" ry="5" fill="#fff070" stroke="#333" stroke-width="1.4"/></g>
<g transform="translate(114.0,189.0) scale(1.000)"><defs><radialGradient id="ys" cx="0.35" cy="0.3" r="0.8"><stop offset="0" stop-color="#fff27a"/><stop offset="1" stop-color="#b89400"/></radialGradient></defs><circle cx="17" cy="17" r="16" fill="url(#ys)" stroke="#333" stroke-width="1.4"/></g>
<g transform="translate(163.0,189.0) scale(1.000)"><path d="M14 1 L26 31 A12 3 0 0 1 2 31 Z" fill="url(#ygh)" stroke="#333" stroke-width="1.4"/></g>
<g transform="translate(207.0,189.0) scale(1.000)"><ellipse cx="17" cy="17" rx="17" ry="11" fill="url(#yg)" stroke="#333" stroke-width="1.4"/><ellipse cx="17" cy="16" rx="8" ry="4" fill="#f0f0f0" stroke="#333" stroke-width="1.4"/></g>
<g transform="translate(255.0,189.0) scale(1.000)"><path d="M1 6 V29 A14 4.5 0 0 0 29 29 V6" fill="url(#ygh)" stroke="#333" stroke-width="1.4"/><ellipse cx="15" cy="6" rx="14" ry="4.5" fill="#fff070" stroke="#333" stroke-width="1.4"/><ellipse cx="15" cy="6" rx="8" ry="2.5" fill="#c9a400"/></g>
<g transform="translate(300.0,189.0) scale(1.000)"><polygon points="2,14 9,2 15,14" fill="#ecd230" stroke="#333" stroke-width="1"/><rect x="6" y="14" width="16" height="12" fill="#e8cc20" stroke="#333" stroke-width="1"/><circle cx="12" cy="28" r="5" fill="none" stroke="#555" stroke-width="2"/><circle cx="25" cy="28" r="5" fill="none" stroke="#555" stroke-width="2"/><path d="M14 6h18" stroke="#777" stroke-width="1.5"/></g>
<g transform="translate(347.0,189.0) scale(1.000)"><rect x="2" y="19" width="13" height="13" fill="#ecd230" stroke="#333" stroke-width="1"/><rect x="20" y="10" width="9" height="9" fill="#fff" stroke="#555" stroke-width="1.5"/><path d="M18 2h14 M25 2v6" stroke="#555" stroke-width="2"/><path d="M5 8h6 M8 5v6" stroke="#555" stroke-width="1.5"/><path d="M13 3l4 4 M29 26l-4-3 M23 5l2 4" stroke="#e02020" stroke-width="3"/></g>
<rect x="390" y="180" width="2" height="49" fill="#c8c8c8"/>
<rect x="396" y="186" width="2" height="2" fill="#b8b8b8"/><rect x="396" y="190" width="2" height="2" fill="#b8b8b8"/><rect x="396" y="194" width="2" height="2" fill="#b8b8b8"/><rect x="396" y="198" width="2" height="2" fill="#b8b8b8"/><rect x="396" y="202" width="2" height="2" fill="#b8b8b8"/><rect x="396" y="206" width="2" height="2" fill="#b8b8b8"/><rect x="396" y="210" width="2" height="2" fill="#b8b8b8"/><rect x="396" y="214" width="2" height="2" fill="#b8b8b8"/><rect x="396" y="218" width="2" height="2" fill="#b8b8b8"/><rect x="396" y="222" width="2" height="2" fill="#b8b8b8"/>
<g transform="translate(411.0,189.0) scale(1.000)"><polygon points="2,22 17,16 32,22 17,28" fill="#8fb0e0" stroke="#1f3f70" stroke-width="1.2"/><polygon points="2,22 17,28 17,33 2,27" fill="#4f7fc0" stroke="#1f3f70" stroke-width="1.2"/><polygon points="17,28 32,22 32,27 17,33" fill="#3a68a8" stroke="#1f3f70" stroke-width="1.2"/><polygon points="17,1 27,11 21,11 21,21 13,21 13,11 7,11" fill="#4f7fc0" stroke="#1f3f70" stroke-width="1.2"/></g>
<g transform="translate(458.0,189.0) scale(1.000)"><path d="M17 2 A15 15 0 1 0 32 17 L24 17 A7 7 0 1 1 17 10Z" fill="#4f7fc0" stroke="#1f3f70" stroke-width="1.2"/><circle cx="17" cy="17" r="3" fill="#fff" stroke="#1f3f70"/><path d="M22 3 A15 15 0 0 1 31 12" stroke="#4f7fc0" stroke-width="2.5" fill="none"/></g>
<g transform="translate(504.0,189.0) scale(1.000)"><polygon points="1,8 13,3 13,30 1,33" fill="#4f7fc0" stroke="#1f3f70" stroke-width="1"/><polygon points="21,3 33,8 33,33 21,30" fill="#8fb0e0" stroke="#1f3f70" stroke-width="1"/><path d="M17 1v33" stroke="#e01515" stroke-width="3" stroke-dasharray="4 3"/></g>
<g transform="translate(551.0,189.0) scale(1.000)"><path d="M2 14 Q4 4 18 3 L33 6 L32 10 Q16 10 12 30 L3 33Z" fill="#4f7fc0" stroke="#1f3f70" stroke-width="1.2"/></g>
<g transform="translate(597.0,189.0) scale(1.000)"><path d="M2 28 L14 8 L33 6 L22 26 L8 33Z" fill="#4f7fc0" stroke="#1f3f70" stroke-width="1.2"/><path d="M14 8 L33 6 L32 10 L16 12Z" fill="#8fb0e0"/></g>
<g transform="translate(644.0,189.0) scale(1.000)"><rect x="3" y="3" width="22" height="22" fill="none" stroke="#8a8a8a" stroke-width="2.5"/><rect x="10" y="10" width="22" height="22" fill="#a0a0a0" stroke="#8a8a8a" stroke-width="2"/></g>
<g transform="translate(690.0,189.0) scale(1.000)"><polygon points="3,6 33,2 33,28 3,33" fill="#4f7fc0" stroke="#1f3f70" stroke-width="1"/><path d="M3 5v29 M33 1v28" stroke="#e01515" stroke-width="3.5"/></g>
<g transform="translate(738.0,189.0) scale(1.000)"><polygon points="2,14 25,4 33,9 33,31 10,33 2,30" fill="#4f7fc0" stroke="#1f3f70" stroke-width="1"/><path d="M25 3v28 M33 8v24 M25 3l8 5" stroke="#e01515" stroke-width="3" fill="none"/><rect x="2" y="21" width="9" height="10" fill="none" stroke="#e01515" stroke-width="3"/></g>
<g transform="translate(783.0,189.0) scale(1.000)"><path d="M1 32 L4 12 Q14 10 24 4 L33 12 Q26 24 8 34Z" fill="#4f7fc0" stroke="#1f3f70" stroke-width="1"/><path d="M1 20 L10 24 L8 33 L1 32Z" fill="#e01515"/><path d="M24 4 L33 12" stroke="#e01515" stroke-width="3"/><circle cx="31" cy="3" r="2.5" fill="#e01515"/></g>
<g transform="translate(830.0,189.0) scale(1.000)"><polygon points="2,3 26,6 32,10 32,31 6,33 2,30" fill="#a8a8a8" stroke="#888" stroke-width="1.2"/><rect x="9" y="10" width="14" height="16" fill="#c8c8c8" stroke="#888" stroke-width="2"/></g>
<g transform="translate(877.0,189.0) scale(1.000)"><rect x="10" y="2" width="15" height="31" fill="#b0b0b0" stroke="#888" stroke-width="1.2"/><polygon points="1,12 8,8 34,8 27,12" fill="#c0c0c0" stroke="#888"/><polygon points="1,24 8,20 34,20 27,24" fill="#c0c0c0" stroke="#888"/></g>
<g transform="translate(924.0,189.0) scale(1.000)"><polygon points="15,1 25,11 20,11 20,20 10,20 10,11 5,11" fill="#a8a8a8" stroke="#888"/><polygon points="1,20 9,16 30,16 22,22" fill="#c0c0c0" stroke="#888"/><polygon points="1,33 9,28 30,28 22,33" fill="#c0c0c0" stroke="#888"/></g>
<path d="M967.0 201.0h11l-5.5 6z" fill="#707070"/>
<g transform="translate(988.0,189.0) scale(1.000)"><polygon points="2,8 17,1 32,6 32,26 18,33 6,33" fill="#a8a8a8" stroke="#888" stroke-width="1.2"/><polygon points="9,10 20,5 26,9 26,24 13,26" fill="#d0d0d0" stroke="#888"/></g>
<g transform="translate(1034.0,189.0) scale(1.000)"><polygon points="1,3 30,3 33,6 33,33 4,33 1,30" fill="#4f7fc0" stroke="#1f3f70" stroke-width="1.5"/><path d="M9 32 V10 H27 V16 H15 V19 H24 V24 H15 V32Z" fill="#7ed020" stroke="#2a5a0a" stroke-width="1.2"/></g>
<g transform="translate(1081.0,189.0) scale(1.000)"><polygon points="2,9 19,3 34,7 17,13" fill="#d0d0d0" stroke="#999"/><polygon points="2,9 17,13 17,33 2,28" fill="#b0b0b0" stroke="#999"/><polygon points="17,13 34,7 34,28 17,33" fill="#c4c4c4" stroke="#999"/></g>
<rect x="1123" y="180" width="2" height="49" fill="#c8c8c8"/>
<rect x="1131" y="186" width="2" height="2" fill="#b8b8b8"/><rect x="1131" y="190" width="2" height="2" fill="#b8b8b8"/><rect x="1131" y="194" width="2" height="2" fill="#b8b8b8"/><rect x="1131" y="198" width="2" height="2" fill="#b8b8b8"/><rect x="1131" y="202" width="2" height="2" fill="#b8b8b8"/><rect x="1131" y="206" width="2" height="2" fill="#b8b8b8"/><rect x="1131" y="210" width="2" height="2" fill="#b8b8b8"/><rect x="1131" y="214" width="2" height="2" fill="#b8b8b8"/><rect x="1131" y="218" width="2" height="2" fill="#b8b8b8"/><rect x="1131" y="222" width="2" height="2" fill="#b8b8b8"/>
<g transform="translate(1146.0,189.0) scale(1.000)"><path d="M6 2H2V32H6 M28 2H32V32H28" stroke="#222" stroke-width="2" fill="none"/><polygon points="6,9 19,5 28,9 15,13" fill="#7fa5dc" stroke="#1f3f70"/><polygon points="6,9 15,13 15,30 6,26" fill="#4f7fc0" stroke="#1f3f70"/><polygon points="15,13 28,9 28,26 15,30" fill="#3a68a8" stroke="#1f3f70"/></g>
<path d="M1188.0 201.0h11l-5.5 6z" fill="#000"/>
<g transform="translate(1210.0,189.0) scale(1.000)"><circle cx="22" cy="12" r="10.5" fill="#4f7fc0" stroke="#1f3f70" stroke-width="1.2"/><circle cx="12" cy="22" r="10.5" fill="#3a68a8" stroke="#1f3f70" stroke-width="1.2"/></g>
<g transform="translate(1256.0,189.0) scale(1.000)"><circle cx="12" cy="22" r="10.5" fill="#a8a8a8" stroke="#888" stroke-width="1.2"/><circle cx="22" cy="12" r="10.5" fill="#f8f8f8" stroke="#888" stroke-width="1.2"/></g>
<g transform="translate(1303.0,189.0) scale(1.000)"><circle cx="12" cy="22" r="10.5" fill="#a8a8a8" stroke="#888" stroke-width="1.2"/><circle cx="22" cy="12" r="10.5" fill="#a8a8a8" stroke="#888" stroke-width="1.2"/></g>
<g transform="translate(1349.0,189.0) scale(1.000)"><circle cx="12" cy="22" r="10.5" fill="#f8f8f8" stroke="#888" stroke-width="1.2"/><circle cx="22" cy="12" r="10.5" fill="#f8f8f8" fill-opacity="0.6" stroke="#888" stroke-width="1.2"/><path d="M12 11.5 A10.5 10.5 0 0 1 22.5 22 A10.5 10.5 0 0 1 12 11.5" fill="#a0a0a0"/></g>
<g transform="translate(1395.0,189.0) scale(1.000)"><path d="M2 1 H10 V13 H33 V24 H10 V34 H2Z" fill="#4f7fc0" stroke="#e01515" stroke-width="3"/></g>
<path d="M1440.0 201.0h11l-5.5 6z" fill="#000"/>
<g transform="translate(1460.0,189.0) scale(1.000)"><circle cx="23" cy="11" r="10.5" fill="#4f7fc0" stroke="#1f3f70" stroke-width="1.2"/><circle cx="11" cy="23" r="10.5" fill="#4f7fc0" stroke="#1f3f70" stroke-width="1.2"/><path d="M13 12 A10 10 0 0 1 22 21" stroke="#f0f0f0" stroke-width="3" fill="none"/></g>
<path d="M1504.0 201.0h11l-5.5 6z" fill="#000"/>
<g transform="translate(1529.0,189.0) scale(1.000)"><path d="M12 12 L24 30 A11 3 0 0 1 1 30Z" fill="#b0b0b0" stroke="#888"/><circle cx="13" cy="9" r="7" fill="#e0e0e0" stroke="#999" stroke-width="1.5"/></g>
<g transform="translate(1571.0,189.0) scale(1.000)"><polygon points="1,9 17,2 33,7 17,14" fill="#d8d8d8" stroke="#aaa"/><polygon points="1,9 17,14 17,33 1,27" fill="#c0c0c0" stroke="#aaa"/><polygon points="17,14 33,7 33,28 17,33" fill="#c8c8c8" stroke="#aaa"/><path d="M6 18 L14 14 L12 20 M10 17 Q22 14 22 26" stroke="#9a9a9a" stroke-width="3" fill="none"/></g>
<rect x="1614" y="180" width="2" height="49" fill="#c8c8c8"/>
<rect x="1620" y="186" width="2" height="2" fill="#b8b8b8"/><rect x="1620" y="190" width="2" height="2" fill="#b8b8b8"/><rect x="1620" y="194" width="2" height="2" fill="#b8b8b8"/><rect x="1620" y="198" width="2" height="2" fill="#b8b8b8"/><rect x="1620" y="202" width="2" height="2" fill="#b8b8b8"/><rect x="1620" y="206" width="2" height="2" fill="#b8b8b8"/><rect x="1620" y="210" width="2" height="2" fill="#b8b8b8"/><rect x="1620" y="214" width="2" height="2" fill="#b8b8b8"/><rect x="1620" y="218" width="2" height="2" fill="#b8b8b8"/><rect x="1620" y="222" width="2" height="2" fill="#b8b8b8"/>
<g transform="translate(1635.0,189.0) scale(1.000)"><path d="M3 3 H21 L28 12 V26 H3Z" fill="#d0d0d0" stroke="#555" stroke-width="1.5"/><circle cx="12" cy="15" r="8" fill="#555"/><path d="M4 15 A8 8 0 0 1 20 15Z" fill="#e8cc10"/><rect x="23" y="12" width="3" height="7" fill="#e8cc10" stroke="#555"/><path d="M20 26 L33 31" stroke="#e8cc10" stroke-width="3"/><path d="M32 28v5" stroke="#555" stroke-width="2"/></g>
<g transform="translate(1681.0,189.0) scale(1.000)"><path d="M3 3 H21 L28 12 V26 H3Z" fill="#d0d0d0" stroke="#555" stroke-width="1.5"/><circle cx="12" cy="15" r="8" fill="#555"/><path d="M4 15 A8 8 0 0 1 20 15Z" fill="#e8cc10"/><rect x="23" y="12" width="3" height="7" fill="#e8cc10" stroke="#555"/><path d="M20 26 L33 31" stroke="#e8cc10" stroke-width="3"/><path d="M32 28v5" stroke="#555" stroke-width="2"/><path d="M2 4 L8 31 L32 18" stroke="#e01515" stroke-width="3" fill="none"/><path d="M8 5 Q22 -2 28 12" stroke="#3a68a8" stroke-width="3" fill="none"/></g>
<g transform="translate(1738.0,189.0) scale(1.000)"><path d="M3 3 H21 L28 12 V26 H3Z" fill="#d0d0d0" stroke="#555" stroke-width="1.5"/><circle cx="12" cy="15" r="8" fill="#555"/><path d="M4 15 A8 8 0 0 1 20 15Z" fill="#e8cc10"/><rect x="23" y="12" width="3" height="7" fill="#e8cc10" stroke="#555"/><path d="M20 26 L33 31" stroke="#e8cc10" stroke-width="3"/><path d="M32 28v5" stroke="#555" stroke-width="2"/><path d="M18 6 A7 7 0 1 1 18 20" stroke="#3a78c8" stroke-width="3.5" fill="none"/></g>
<g transform="translate(1783.0,189.0) scale(1.000)"><path d="M3 3 H21 L28 12 V26 H3Z" fill="#d0d0d0" stroke="#555" stroke-width="1.5"/><circle cx="12" cy="15" r="8" fill="#555"/><path d="M4 15 A8 8 0 0 1 20 15Z" fill="#e8cc10"/><rect x="23" y="12" width="3" height="7" fill="#e8cc10" stroke="#555"/><path d="M20 26 L33 31" stroke="#e8cc10" stroke-width="3"/><path d="M32 28v5" stroke="#555" stroke-width="2"/><path d="M4 22 L14 33 M14 22 L4 33" stroke="#e01515" stroke-width="3.5"/></g>
<g transform="translate(1830.0,189.0) scale(1.000)"><path d="M3 3 H21 L28 12 V26 H3Z" fill="#d0d0d0" stroke="#555" stroke-width="1.5"/><circle cx="12" cy="15" r="8" fill="#555"/><path d="M4 15 A8 8 0 0 1 20 15Z" fill="#e8cc10"/><rect x="23" y="12" width="3" height="7" fill="#e8cc10" stroke="#555"/><path d="M20 26 L33 31" stroke="#e8cc10" stroke-width="3"/><path d="M32 28v5" stroke="#555" stroke-width="2"/><path d="M2 32 V3 H32 V33" stroke="#60c020" stroke-width="3.5" fill="none"/><path d="M2 16 L16 3 L32 18 L20 32" stroke="#e01515" stroke-width="3" fill="none"/></g>
<g transform="translate(1876.0,189.0) scale(1.000)"><path d="M3 3 H21 L28 12 V26 H3Z" fill="#d0d0d0" stroke="#555" stroke-width="1.5"/><circle cx="12" cy="15" r="8" fill="#555"/><path d="M4 15 A8 8 0 0 1 20 15Z" fill="#e8cc10"/><rect x="23" y="12" width="3" height="7" fill="#e8cc10" stroke="#555"/><path d="M20 26 L33 31" stroke="#e8cc10" stroke-width="3"/><path d="M32 28v5" stroke="#555" stroke-width="2"/><path d="M2 16 L16 3 L32 18 L20 32" stroke="#e01515" stroke-width="3" fill="none"/></g>
<g transform="translate(1923.0,189.0) scale(1.000)"><path d="M3 3 H21 L28 12 V26 H3Z" fill="#d0d0d0" stroke="#555" stroke-width="1.5"/><circle cx="12" cy="15" r="8" fill="#555"/><path d="M4 15 A8 8 0 0 1 20 15Z" fill="#e8cc10"/><rect x="23" y="12" width="3" height="7" fill="#e8cc10" stroke="#555"/><path d="M20 26 L33 31" stroke="#e8cc10" stroke-width="3"/><path d="M32 28v5" stroke="#555" stroke-width="2"/><path d="M2 32 V3 H32 V33" stroke="#60c020" stroke-width="3.5" fill="none"/></g>
<rect x="1726" y="188" width="1" height="36" fill="#c4c4c4"/>
<rect x="1" y="1856" width="3086" height="79" fill="#f0f0f0"/>
<rect x="4.5" y="1856" width="159" height="32" fill="#f0f0f0" stroke="#d9d9d9" stroke-width="1"/>
<rect x="163.5" y="1855" width="240.5" height="35.5" fill="#ffffff" stroke="#d9d9d9" stroke-width="1"/>
<g transform="translate(19.5,1860.0) scale(0.980)"><path d="M0 0 H11 V4 H4 V9 H9 V13 H4 V22 H0Z" fill="#d81818" stroke="#901010" stroke-width="0.6"/><g transform="translate(15.5,15)"><polygon points="7.50,0.00 5.17,2.14 5.30,5.30 2.14,5.17 0.00,7.50 -2.14,5.17 -5.30,5.30 -5.17,2.14 -7.50,0.00 -5.17,-2.14 -5.30,-5.30 -2.14,-5.17 -0.00,-7.50 2.14,-5.17 5.30,-5.30 5.17,-2.14" fill="#4a78c0" stroke="#2a4a80" stroke-width="0.6"/><circle r="2.4" fill="#fff"/></g></g>
<text x="49.3" y="1879.0" font-size="17.0" fill="#000" textLength="68.7" lengthAdjust="spacingAndGlyphs">Startseite</text>
<rect x="125.5" y="1862.5" width="19.5" height="19.5" rx="2.5" fill="#cacaca" stroke="#9c9c9c" stroke-width="1"/>
<path d="M130.5 1867.5 L140 1877 M140 1867.5 L130.5 1877" stroke="#fff" stroke-width="1.6"/>
<g transform="translate(184.7,1861.0) scale(0.980)"><path d="M0 0 H11 V4 H4 V9 H9 V13 H4 V22 H0Z" fill="#d81818" stroke="#901010" stroke-width="0.6"/><g transform="translate(15.5,15)"><polygon points="7.50,0.00 5.17,2.14 5.30,5.30 2.14,5.17 0.00,7.50 -2.14,5.17 -5.30,5.30 -5.17,2.14 -7.50,0.00 -5.17,-2.14 -5.30,-5.30 -2.14,-5.17 -0.00,-7.50 2.14,-5.17 5.30,-5.30 5.17,-2.14" fill="#4a78c0" stroke="#2a4a80" stroke-width="0.6"/><circle r="2.4" fill="#fff"/></g></g>
<text x="214.3" y="1880.0" font-size="17.0" fill="#000" textLength="141.1" lengthAdjust="spacingAndGlyphs">FreeCAD Test11 : 1</text>
<rect x="363" y="1864.5" width="20" height="19.5" rx="2.5" fill="#e9845f" stroke="#d83c3c" stroke-width="1.2"/>
<path d="M368 1869.5 L378 1879.5 M378 1869.5 L368 1879.5" stroke="#fff" stroke-width="1.6"/>
<text x="4.4" y="1921.0" font-size="17.0" fill="#000" textLength="714.0" lengthAdjust="spacingAndGlyphs">Preselected: FreeCAD_Test11.Common.Face2 (17.223717 mm, -13.974821 mm, 110.000000 mm)</text>
<rect x="2714" y="1895" width="1" height="37" fill="#d0d0d0"/>
<rect x="2835" y="1895" width="1" height="37" fill="#d0d0d0"/>
<rect x="3059" y="1895" width="1" height="37" fill="#d0d0d0"/>
<rect x="2745.5" y="1904.5" width="13" height="19.5" rx="6.5" fill="none" stroke="#222" stroke-width="2"/>
<rect x="2751.5" y="1908" width="1.6" height="4" fill="#222"/>
<text x="2767.0" y="1921.0" font-size="17.0" fill="#000" textLength="31.5" lengthAdjust="spacingAndGlyphs">CAD</text>
<path d="M2812.5 1912.0h11l-5.5 6z" fill="#000"/>
<text x="2848.5" y="1921.0" font-size="17.0" fill="#000" textLength="183.5" lengthAdjust="spacingAndGlyphs">404,45 mm x 212,91 mm</text>
<path d="M3036.5 1912.0h11l-5.5 6z" fill="#000"/>
<rect x="3081" y="1921" width="2" height="2" fill="#bcbcbc"/>
<rect x="3077" y="1925" width="2" height="2" fill="#bcbcbc"/>
<rect x="3081" y="1925" width="2" height="2" fill="#bcbcbc"/>
<rect x="3073" y="1929" width="2" height="2" fill="#bcbcbc"/>
<rect x="3077" y="1929" width="2" height="2" fill="#bcbcbc"/>
<rect x="3081" y="1929" width="2" height="2" fill="#bcbcbc"/>
</svg></body></html>
